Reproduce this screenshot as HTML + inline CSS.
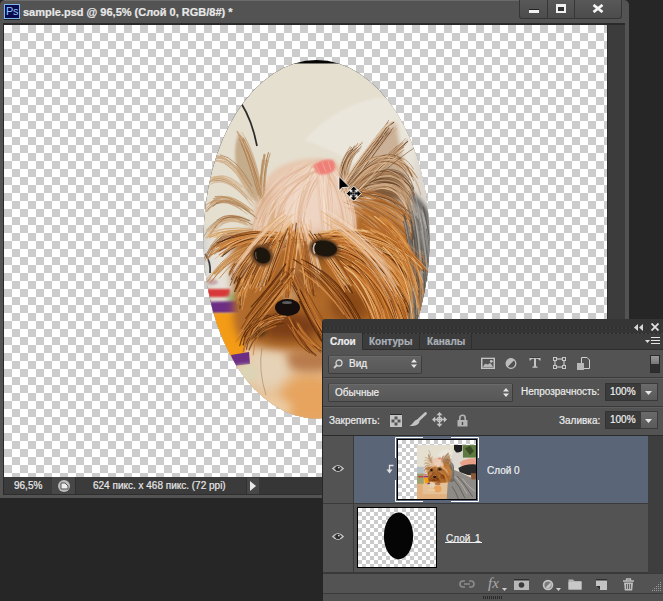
<!DOCTYPE html>
<html><head><meta charset="utf-8">
<style>
*{margin:0;padding:0;box-sizing:border-box}
html,body{width:663px;height:601px;overflow:hidden;background:#262626;font-family:"Liberation Sans",sans-serif}
.a{position:absolute}
.t{position:absolute;white-space:nowrap;font-size:10px;line-height:12px;color:#e4e4e4;-webkit-text-stroke:0.2px currentColor}
#win{left:0;top:0;width:629px;height:498px;background:#535353;border-radius:5px 5px 0 0}
#psi{left:4px;top:4px;width:16px;height:15px;background:#0a0a4c;border:1px solid #7ab8f2;color:#8cc4fa;font-size:11px;line-height:13px;text-align:center;letter-spacing:-0.3px;box-shadow:0 1px 0 #222}
.btn{top:0;height:19px;background:linear-gradient(#585858,#4c4c4c);border:1px solid #363636;border-top:none}
#canvas{left:4px;top:25px;width:603px;height:452px;background-color:#fff;
 background-image:linear-gradient(45deg,#ccc 25%,transparent 25%,transparent 75%,#ccc 75%),linear-gradient(45deg,#ccc 25%,transparent 25%,transparent 75%,#ccc 75%);
 background-size:16px 16px;background-position:0 0,8px 8px}
#vscroll{left:607px;top:25px;width:18px;height:452px;background:#3c3c3c;border-left:1px solid #2c2c2c}
#status{left:4px;top:477px;width:621px;height:18px;background:#3b3b3b;border-bottom:1px solid #2e2e2e}
#panel{left:322px;top:319px;width:341px;height:282px;background:#535353;border-left:1px solid #262626;border-radius:4px 0 0 0}
.sep{position:absolute;left:323px;width:340px;height:1px}
.dd{position:absolute;border-radius:2px;background:linear-gradient(#626262,#575757);border:1px solid #3c3c3c;border-top-color:#4a4a4a;box-shadow:inset 0 1px 0 #6a6a6a}
.inp{position:absolute;background:#3b3b3b;border:1px solid #333}
.ib{position:absolute;background:linear-gradient(#6a6a6a,#5a5a5a);border:1px solid #3a3a3a}
</style></head>
<body>
<!-- document window -->
<div id="win" class="a"></div>
<div class="a" style="left:4px;top:0;width:516px;height:1px;background:#6a6a6a"></div>
<div id="psi" class="a">Ps</div>
<div class="t" style="left:23px;top:6px;font-size:11px;font-weight:bold;color:#e8e8e8">sample.psd @ 96,5% (Слой 0, RGB/8#) *</div>
<div class="a btn" style="left:519px;width:29px;border-radius:0 0 0 3px"></div>
<div class="a btn" style="left:547px;width:28px"></div>
<div class="a btn" style="left:574px;width:48px;border-radius:0 0 3px 0"></div>
<div class="a" style="left:529px;top:9px;width:10px;height:4px;background:#f0f0f0;border-top:1px solid #222"></div>
<div class="a" style="left:556px;top:4px;width:10px;height:9px;border:2px solid #f0f0f0;border-top-width:3px;background:#333"></div>
<svg class="a" style="left:592px;top:4px" width="12" height="9" viewBox="0 0 12 9"><path d="M1.5 1 L10.5 8 M10.5 1 L1.5 8" stroke="#f4f4f4" stroke-width="2.8"/></svg>

<div class="a" style="left:3px;top:23px;width:622px;height:2px;background:#2a2a2a"></div>
<div class="a" style="left:3px;top:23px;width:1px;height:472px;background:#2a2a2a"></div>
<div id="canvas" class="a"></div>
<!-- photo -->
<svg class="a" style="left:0;top:0" width="663" height="601" viewBox="0 0 663 601">
<defs>
<clipPath id="ell"><ellipse cx="316.5" cy="239.3" rx="113" ry="179.2"/></clipPath>
<filter id="b10" x="-50%" y="-50%" width="200%" height="200%"><feGaussianBlur stdDeviation="10"/></filter>
<filter id="b6" x="-50%" y="-50%" width="200%" height="200%"><feGaussianBlur stdDeviation="6"/></filter>
<filter id="b4" x="-50%" y="-50%" width="200%" height="200%"><feGaussianBlur stdDeviation="4"/></filter>
<filter id="b2" x="-50%" y="-50%" width="200%" height="200%"><feGaussianBlur stdDeviation="2"/></filter>
<filter id="b1" x="-50%" y="-50%" width="200%" height="200%"><feGaussianBlur stdDeviation="1"/></filter>
<filter id="b05" x="-50%" y="-50%" width="200%" height="200%"><feGaussianBlur stdDeviation="0.5"/></filter>
<filter id="b03" x="-10%" y="-10%" width="120%" height="120%"><feGaussianBlur stdDeviation="0.35"/></filter>

<g id="dog">
<rect x="151" y="63.5" width="456" height="413.5" fill="#e5dfd0"/>
<path d="M305 140 Q330 110 375 98 Q420 95 440 150 L440 240 L405 228 Q385 175 330 150 Z" fill="#ebe6db" filter="url(#b1)"/>
<path d="M241 103 Q252 120 257 146" stroke="#2a2a2a" stroke-width="1.7" fill="none" filter="url(#b03)"/>
<rect x="195" y="240" width="40" height="50" fill="#e6e2da" filter="url(#b2)"/>
<path d="M205 254 Q211 262 210 273" stroke="#2a2a2a" stroke-width="1.8" fill="none" filter="url(#b05)"/>
<ellipse cx="212" cy="282" rx="6" ry="3" fill="#c8a8b0" filter="url(#b1)"/>
<path d="M151 350 L440 338 L440 477 L151 477 Z" fill="#e2b07c" filter="url(#b4)"/>
<path d="M195 345 L440 338 L440 440 L195 440 Z" fill="#e6c096" filter="url(#b4)"/>
<rect x="151" y="280" width="52" height="80" fill="#9aa070" filter="url(#b6)"/>
<rect x="160" y="300" width="40" height="12" fill="#c84040" filter="url(#b2)"/>
<rect x="151" y="230" width="52" height="50" fill="#b8c0c8" filter="url(#b6)"/>
<ellipse cx="268" cy="368" rx="24" ry="22" fill="#e6d2b6" filter="url(#b6)"/>
<ellipse cx="310" cy="400" rx="30" ry="26" fill="#e6a45e" filter="url(#b6)"/>
<ellipse cx="262" cy="408" rx="30" ry="12" fill="#eccaa0" filter="url(#b4)"/>
<path d="M286 352 Q305 348 330 352 L330 370 Q300 374 290 368 Z" fill="#b07040" filter="url(#b4)" opacity="0.85"/>
<path d="M262 348 Q258 370 266 395" stroke="#7a6040" stroke-width="0.8" fill="none" opacity="0.5"/>
<path d="M203 289 L230 289 L230 297 L203 297 Z" fill="#d83838" filter="url(#b1)"/>
<ellipse cx="234" cy="299" rx="7" ry="6" fill="#9cc088" filter="url(#b2)"/>
<path d="M203 302 L238 301 L240 313 L203 314 Z" fill="#6c2e84" filter="url(#b1)"/>
<path d="M203 313 L240 313 L246 357 L212 358 Z" fill="#f49c12" filter="url(#b1)"/>
<path d="M231 355 L249 352 L250 364 L234 366 Z" fill="#6c2e84" filter="url(#b05)"/>
<path d="M236 366 L256 364 L258 380 L241 382 Z" fill="#dcd4b4" filter="url(#b2)"/>
<path d="M400 240 Q420 120 440 94 Q500 90 520 130 L520 240 Z" fill="#dcd8d0" filter="url(#b6)"/>
<path d="M436 64 L500 64 L500 105 Q480 125 452 118 L436 98 Z" fill="#1e1e1e" filter="url(#b4)"/>
<rect x="505" y="64" width="102" height="96" fill="#5e7a40" filter="url(#b6)"/>
<path d="M520 90 L560 70 L590 110 L560 140 Z" fill="#3a4a28" filter="url(#b6)"/>
<path d="M480 200 Q520 160 607 165 L607 215 Q560 235 500 230 Z" fill="#e8a088" filter="url(#b4)"/>
<path d="M470 240 Q520 205 607 212 L607 295 Q540 300 480 270 Z" fill="#2a2a2a" filter="url(#b4)"/>
<path d="M400 240 Q480 270 540 300 L607 330 L607 477 L380 477 L390 320 Z" fill="#8e8a86" filter="url(#b6)"/>
<path d="M565 280 L607 280 L607 330 L570 325 Z" fill="#8a5a38" filter="url(#b4)"/>
<path d="M430 320 Q480 380 520 470 M460 300 Q520 360 580 460 M420 380 Q450 420 470 477" stroke="#5a5856" stroke-width="6" fill="none" filter="url(#b4)"/>
<path d="M440 300 Q490 350 540 440 M500 320 Q540 380 600 420" stroke="#c8c4c0" stroke-width="5" fill="none" filter="url(#b4)"/>
<path d="M408 190 Q428 200 436 232 L436 340 Q418 350 404 345 Z" fill="#6a6866" filter="url(#b2)"/>
<path d="M410 200 Q424 210 430 232 L428 250 Q416 236 410 220 Z" fill="#bcb8b0" filter="url(#b2)"/>
<path d="M418 250 Q428 270 430 300" stroke="#3a3836" stroke-width="3" fill="none" filter="url(#b1)"/>
<path d="M344 192 C357 162 380 135 396 122 C398 140 404 160 408 185 C410 205 406 215 400 220 L352 215 Z" fill="#b08660" filter="url(#b2)" opacity="0.55"/>
<path d="M355 185 C372 165 392 165 404 185 C404 200 392 208 375 208 L358 204 Z" fill="#6e4a2c" filter="url(#b4)" opacity="0.8"/>
<path d="M239 133 C252 150 260 175 262 205 C250 200 240 185 236 165 C234 150 236 140 239 133 Z" fill="#b8966e" filter="url(#b1)" opacity="0.7"/>
<path d="M232 250 Q240 226 275 228 Q330 220 360 210 Q400 208 414 235 Q424 260 422 290 Q420 328 398 346 Q340 358 292 350 Q252 350 240 336 Q232 302 232 250 Z" fill="#b06a2a" filter="url(#b4)"/>
<path d="M254 242 C254 210 258 185 275 170 C295 158 325 154 340 166 C356 180 358 210 354 242 Q320 250 285 248 Z" fill="#e6c4aa" filter="url(#b2)"/>
<ellipse cx="306" cy="200" rx="36" ry="32" fill="#eed4c2" filter="url(#b6)"/>
<ellipse cx="268" cy="215" rx="10" ry="25" fill="#d8b08a" filter="url(#b6)"/>
<ellipse cx="291" cy="283" rx="9" ry="18" fill="#d6b088" filter="url(#b4)"/>
<ellipse cx="262" cy="256" rx="14" ry="14" fill="#7a4418" filter="url(#b4)"/>
<ellipse cx="326" cy="249" rx="19" ry="13" fill="#7e4a1c" filter="url(#b4)"/>
<ellipse cx="288" cy="326" rx="34" ry="14" fill="#7a3c14" filter="url(#b6)"/>
<ellipse cx="378" cy="285" rx="20" ry="40" fill="#b0641e" filter="url(#b6)"/>
<ellipse cx="350" cy="305" rx="20" ry="18" fill="#8a4a18" filter="url(#b6)"/>
<ellipse cx="250" cy="318" rx="14" ry="22" fill="#b06a2c" filter="url(#b6)"/>
<ellipse cx="300" cy="280" rx="25" ry="12" fill="#9a5a28" filter="url(#b6)"/>
<ellipse cx="258" cy="330" rx="8" ry="7" fill="#3a2a18" filter="url(#b2)"/>
<g stroke-linecap="round" fill="none" filter="url(#b03)">
<path d="M239.3 218.9 Q216.8 211.8 205.5 237.9" stroke="#d8b896" stroke-width="0.82" stroke-opacity="0.85"/>
<path d="M251.9 197.0 Q232.2 156.6 214.9 157.6" stroke="#c8a070" stroke-width="0.58" stroke-opacity="0.85"/>
<path d="M259.5 190.2 Q261.5 169.3 263.8 160.0" stroke="#a8784c" stroke-width="0.94" stroke-opacity="0.85"/>
<path d="M240.5 189.0 Q219.4 171.3 206.0 182.7" stroke="#c8a070" stroke-width="0.65" stroke-opacity="0.85"/>
<path d="M252.4 205.9 Q230.8 178.0 214.6 182.6" stroke="#c9a07a" stroke-width="0.65" stroke-opacity="0.85"/>
<path d="M260.9 195.6 Q260.1 170.4 266.2 158.6" stroke="#e0c4a4" stroke-width="0.92" stroke-opacity="0.85"/>
<path d="M259.6 188.6 Q249.5 150.3 240.7 135.5" stroke="#c9a07a" stroke-width="0.88" stroke-opacity="0.85"/>
<path d="M264.7 190.2 Q266.0 165.6 269.8 154.5" stroke="#9a6a40" stroke-width="0.52" stroke-opacity="0.85"/>
<path d="M257.7 189.6 Q249.3 160.3 241.5 144.1" stroke="#9a6a40" stroke-width="0.59" stroke-opacity="0.85"/>
<path d="M260.5 192.3 Q252.3 155.9 243.6 141.8" stroke="#b8875a" stroke-width="0.62" stroke-opacity="0.85"/>
<path d="M240.5 218.4 Q222.9 212.5 210.8 227.5" stroke="#d8b896" stroke-width="0.57" stroke-opacity="0.85"/>
<path d="M237.3 230.8 Q219.1 232.2 207.6 254.2" stroke="#a8784c" stroke-width="0.73" stroke-opacity="0.85"/>
<path d="M247.2 224.2 Q225.0 214.4 210.9 234.1" stroke="#a8784c" stroke-width="0.56" stroke-opacity="0.85"/>
<path d="M265.1 189.0 Q265.5 166.8 269.0 157.0" stroke="#e0c4a4" stroke-width="0.53" stroke-opacity="0.85"/>
<path d="M263.9 186.7 Q264.4 165.2 268.4 152.6" stroke="#9a6a40" stroke-width="0.98" stroke-opacity="0.85"/>
<path d="M258.7 210.2 Q231.0 174.1 214.1 181.3" stroke="#e0c4a4" stroke-width="0.67" stroke-opacity="0.85"/>
<path d="M243.9 235.9 Q218.7 233.4 205.6 262.6" stroke="#e0c4a4" stroke-width="0.76" stroke-opacity="0.85"/>
<path d="M249.7 220.3 Q222.0 206.4 209.7 235.1" stroke="#c8a070" stroke-width="0.65" stroke-opacity="0.85"/>
<path d="M241.8 220.4 Q222.7 214.8 213.1 229.3" stroke="#a8784c" stroke-width="0.82" stroke-opacity="0.85"/>
<path d="M263.7 198.0 Q251.7 155.3 242.7 137.4" stroke="#c8a070" stroke-width="0.73" stroke-opacity="0.85"/>
<path d="M252.9 211.6 Q224.7 186.3 210.7 204.3" stroke="#c9a07a" stroke-width="0.84" stroke-opacity="0.85"/>
<path d="M241.4 217.4 Q222.6 210.3 211.1 227.0" stroke="#a8784c" stroke-width="0.71" stroke-opacity="0.85"/>
<path d="M262.5 189.3 Q262.7 169.7 265.1 156.6" stroke="#c9a07a" stroke-width="0.68" stroke-opacity="0.85"/>
<path d="M239.2 230.6 Q217.7 229.5 207.1 253.1" stroke="#c8a070" stroke-width="0.99" stroke-opacity="0.85"/>
<path d="M247.2 214.1 Q220.4 191.3 203.4 213.7" stroke="#b89060" stroke-width="0.63" stroke-opacity="0.85"/>
<path d="M257.4 188.9 Q249.4 157.4 242.3 142.9" stroke="#9a6a40" stroke-width="0.52" stroke-opacity="0.85"/>
<path d="M251.8 186.2 Q236.4 157.3 220.4 154.9" stroke="#a8784c" stroke-width="0.86" stroke-opacity="0.85"/>
<path d="M247.6 199.2 Q224.2 172.5 207.2 183.3" stroke="#9a6a40" stroke-width="0.64" stroke-opacity="0.85"/>
<path d="M241.8 231.8 Q221.6 230.7 209.7 250.6" stroke="#9a6a40" stroke-width="0.78" stroke-opacity="0.85"/>
<path d="M245.1 235.3 Q229.2 233.7 216.9 250.3" stroke="#b89060" stroke-width="0.93" stroke-opacity="0.85"/>
<path d="M261.7 181.7 Q262.1 164.8 264.7 154.1" stroke="#c8a070" stroke-width="0.79" stroke-opacity="0.85"/>
<path d="M251.1 236.7 Q228.6 230.5 213.6 251.3" stroke="#b8875a" stroke-width="0.53" stroke-opacity="0.85"/>
<path d="M255.6 200.5 Q230.3 148.7 210.2 156.8" stroke="#b89060" stroke-width="0.52" stroke-opacity="0.85"/>
<path d="M260.1 183.5 Q262.2 167.3 264.8 154.9" stroke="#a8784c" stroke-width="0.81" stroke-opacity="0.85"/>
<path d="M253.5 211.4 Q228.1 189.1 211.6 201.4" stroke="#c9a07a" stroke-width="0.87" stroke-opacity="0.85"/>
<path d="M245.6 222.1 Q220.3 211.1 206.4 230.5" stroke="#9a6a40" stroke-width="0.58" stroke-opacity="0.85"/>
<path d="M237.2 231.8 Q219.1 232.7 208.0 258.0" stroke="#9a6a40" stroke-width="0.76" stroke-opacity="0.85"/>
<path d="M252.9 193.4 Q234.1 159.5 220.0 160.9" stroke="#b8875a" stroke-width="0.55" stroke-opacity="0.85"/>
<path d="M259.2 188.5 Q251.9 153.6 242.5 138.8" stroke="#c8a070" stroke-width="0.53" stroke-opacity="0.85"/>
<path d="M248.6 182.1 Q229.6 154.8 216.3 158.0" stroke="#c8a070" stroke-width="0.68" stroke-opacity="0.85"/>
<path d="M246.0 187.2 Q227.1 157.0 211.9 161.3" stroke="#c8a070" stroke-width="0.98" stroke-opacity="0.85"/>
<path d="M247.2 197.0 Q223.3 169.8 207.0 182.5" stroke="#b8875a" stroke-width="0.75" stroke-opacity="0.85"/>
<path d="M248.5 209.6 Q228.1 193.4 212.5 201.6" stroke="#d8b896" stroke-width="0.58" stroke-opacity="0.85"/>
<path d="M242.3 183.0 Q226.2 156.5 213.4 161.8" stroke="#d8b896" stroke-width="0.52" stroke-opacity="0.85"/>
<path d="M258.8 192.3 Q250.0 163.2 245.5 146.0" stroke="#e0c4a4" stroke-width="0.65" stroke-opacity="0.85"/>
<path d="M249.8 237.8 Q223.8 229.9 208.5 258.5" stroke="#e0c4a4" stroke-width="0.84" stroke-opacity="0.85"/>
<path d="M246.7 182.7 Q227.7 152.2 214.4 159.2" stroke="#c8a070" stroke-width="0.86" stroke-opacity="0.85"/>
<path d="M240.4 189.9 Q219.1 170.1 208.4 179.1" stroke="#e0c4a4" stroke-width="0.97" stroke-opacity="0.85"/>
<path d="M240.9 235.5 Q216.2 232.1 202.6 262.9" stroke="#b8875a" stroke-width="0.52" stroke-opacity="0.85"/>
<path d="M261.4 195.8 Q262.9 174.8 263.9 162.1" stroke="#d8b896" stroke-width="0.54" stroke-opacity="0.85"/>
<path d="M241.5 186.6 Q222.4 171.4 211.6 179.3" stroke="#e0c4a4" stroke-width="0.74" stroke-opacity="0.85"/>
<path d="M252.9 224.6 Q233.6 213.8 220.9 223.8" stroke="#c9a07a" stroke-width="0.57" stroke-opacity="0.85"/>
<path d="M237.8 206.9 Q217.4 193.5 205.6 205.7" stroke="#c8a070" stroke-width="0.98" stroke-opacity="0.85"/>
<path d="M238.5 230.2 Q221.1 229.5 210.3 246.3" stroke="#c8a070" stroke-width="0.88" stroke-opacity="0.85"/>
<path d="M240.5 204.8 Q221.1 193.1 207.9 209.1" stroke="#b8875a" stroke-width="0.86" stroke-opacity="0.85"/>
<path d="M237.9 230.6 Q219.0 230.9 206.8 254.7" stroke="#e0c4a4" stroke-width="0.64" stroke-opacity="0.85"/>
<path d="M262.1 200.6 Q255.7 169.4 246.7 149.3" stroke="#b8875a" stroke-width="0.62" stroke-opacity="0.85"/>
<path d="M246.6 209.8 Q226.2 191.4 213.5 198.7" stroke="#a8784c" stroke-width="0.82" stroke-opacity="0.85"/>
<path d="M245.6 185.1 Q229.9 161.9 217.4 160.9" stroke="#b89060" stroke-width="0.52" stroke-opacity="0.85"/>
<path d="M238.3 233.4 Q219.9 236.7 209.8 257.7" stroke="#b8875a" stroke-width="0.52" stroke-opacity="0.85"/>
<path d="M245.4 223.4 Q221.0 213.3 208.0 231.6" stroke="#d8b896" stroke-width="0.68" stroke-opacity="0.85"/>
<path d="M260.9 185.4 Q262.3 164.4 265.2 154.6" stroke="#b89060" stroke-width="0.69" stroke-opacity="0.85"/>
<path d="M254.9 177.6 Q245.0 145.6 236.9 131.8" stroke="#c9a07a" stroke-width="0.90" stroke-opacity="0.85"/>
<path d="M245.3 205.5 Q223.5 187.6 209.6 204.2" stroke="#c8a070" stroke-width="0.75" stroke-opacity="0.85"/>
<path d="M236.8 217.9 Q218.6 215.4 207.3 238.2" stroke="#c8a070" stroke-width="0.68" stroke-opacity="0.85"/>
<path d="M247.0 225.2 Q222.7 213.8 210.8 229.1" stroke="#c8a070" stroke-width="0.65" stroke-opacity="0.85"/>
<path d="M260.1 199.2 Q250.0 156.9 240.9 138.3" stroke="#d8b896" stroke-width="0.74" stroke-opacity="0.85"/>
<path d="M257.4 172.0 Q249.4 144.0 242.1 132.2" stroke="#d8b896" stroke-width="0.96" stroke-opacity="0.85"/>
<path d="M236.9 217.9 Q216.2 214.4 203.7 236.6" stroke="#9a6a40" stroke-width="0.65" stroke-opacity="0.85"/>
<path d="M242.1 187.1 Q224.2 170.0 212.4 179.2" stroke="#c8a070" stroke-width="0.71" stroke-opacity="0.85"/>
<path d="M251.0 214.1 Q225.6 194.0 211.5 202.9" stroke="#a8784c" stroke-width="0.56" stroke-opacity="0.85"/>
<path d="M245.8 221.9 Q222.9 213.3 210.9 228.2" stroke="#b89060" stroke-width="0.57" stroke-opacity="0.85"/>
<path d="M240.6 217.8 Q221.7 212.4 209.9 236.5" stroke="#b89060" stroke-width="0.92" stroke-opacity="0.85"/>
<path d="M259.5 195.2 Q252.0 161.8 245.0 145.7" stroke="#a8784c" stroke-width="0.86" stroke-opacity="0.85"/>
<path d="M238.6 219.3 Q220.0 215.1 210.0 234.0" stroke="#b89060" stroke-width="0.95" stroke-opacity="0.85"/>
<path d="M237.8 231.6 Q219.2 235.2 211.0 254.9" stroke="#b8875a" stroke-width="0.75" stroke-opacity="0.85"/>
<path d="M246.4 190.3 Q224.2 167.3 210.5 180.2" stroke="#d8b896" stroke-width="0.96" stroke-opacity="0.85"/>
<path d="M241.4 209.9 Q216.8 192.1 204.3 211.5" stroke="#c9a07a" stroke-width="0.76" stroke-opacity="0.85"/>
<path d="M258.4 195.0 Q247.4 157.2 239.5 139.0" stroke="#a8784c" stroke-width="0.77" stroke-opacity="0.85"/>
<path d="M249.2 208.6 Q227.9 193.6 214.8 201.0" stroke="#b8875a" stroke-width="0.63" stroke-opacity="0.85"/>
<path d="M257.2 218.7 Q223.8 189.0 206.6 211.7" stroke="#9a6a40" stroke-width="0.80" stroke-opacity="0.85"/>
<path d="M263.1 197.0 Q264.0 172.2 266.9 159.2" stroke="#b8875a" stroke-width="0.61" stroke-opacity="0.85"/>
<path d="M241.0 204.2 Q221.1 191.1 208.9 209.1" stroke="#e0c4a4" stroke-width="0.57" stroke-opacity="0.85"/>
<path d="M260.1 198.5 Q259.9 173.5 262.5 159.7" stroke="#b8875a" stroke-width="0.83" stroke-opacity="0.85"/>
<path d="M263.1 199.3 Q251.4 156.7 242.2 139.5" stroke="#b89060" stroke-width="0.98" stroke-opacity="0.85"/>
<path d="M252.2 224.9 Q227.8 208.9 214.0 225.0" stroke="#a8784c" stroke-width="0.88" stroke-opacity="0.85"/>
<path d="M251.3 200.9 Q224.5 166.5 205.6 180.9" stroke="#c8a070" stroke-width="0.69" stroke-opacity="0.85"/>
<path d="M251.9 199.5 Q227.4 168.1 208.3 182.5" stroke="#c8a070" stroke-width="0.57" stroke-opacity="0.85"/>
<path d="M256.7 215.0 Q232.7 193.3 217.5 196.8" stroke="#d8b896" stroke-width="0.52" stroke-opacity="0.85"/>
<path d="M247.4 210.2 Q224.3 192.8 213.2 206.3" stroke="#9a6a40" stroke-width="0.86" stroke-opacity="0.85"/>
<path d="M250.7 225.6 Q231.0 213.9 216.5 229.3" stroke="#c8a070" stroke-width="0.55" stroke-opacity="0.85"/>
<path d="M237.0 219.3 Q218.4 214.9 208.2 231.3" stroke="#b89060" stroke-width="0.52" stroke-opacity="0.85"/>
<path d="M247.0 233.3 Q218.5 225.1 204.8 260.9" stroke="#9a6a40" stroke-width="0.63" stroke-opacity="0.85"/>
<path d="M258.3 181.6 Q249.9 154.2 243.1 139.8" stroke="#a8784c" stroke-width="0.80" stroke-opacity="0.85"/>
<path d="M240.4 222.0 Q220.5 216.0 210.2 229.4" stroke="#b8875a" stroke-width="0.51" stroke-opacity="0.85"/>
<path d="M241.8 209.2 Q218.3 194.1 204.5 206.2" stroke="#c9a07a" stroke-width="0.52" stroke-opacity="0.85"/>
<path d="M236.7 233.9 Q217.2 236.1 208.0 259.1" stroke="#9a6a40" stroke-width="0.63" stroke-opacity="0.85"/>
<path d="M250.5 204.2 Q225.2 172.9 209.4 185.2" stroke="#e0c4a4" stroke-width="0.97" stroke-opacity="0.85"/>
<path d="M242.8 175.9 Q226.5 152.2 212.9 156.3" stroke="#b89060" stroke-width="0.58" stroke-opacity="0.85"/>
<path d="M236.5 219.1 Q218.0 215.6 208.3 234.7" stroke="#d8b896" stroke-width="0.83" stroke-opacity="0.85"/>
<path d="M250.1 210.8 Q223.6 188.9 210.6 203.5" stroke="#b89060" stroke-width="0.81" stroke-opacity="0.85"/>
<path d="M237.7 234.8 Q219.7 235.7 208.8 253.3" stroke="#a8784c" stroke-width="0.52" stroke-opacity="0.85"/>
<path d="M239.4 220.3 Q219.8 214.1 207.5 231.1" stroke="#e0c4a4" stroke-width="0.71" stroke-opacity="0.85"/>
<path d="M261.5 194.0 Q260.3 174.7 265.2 160.4" stroke="#b89060" stroke-width="0.71" stroke-opacity="0.85"/>
<path d="M249.2 191.5 Q230.9 157.4 214.5 160.2" stroke="#c8a070" stroke-width="0.55" stroke-opacity="0.85"/>
<path d="M260.5 196.8 Q261.1 169.1 263.9 154.3" stroke="#b89060" stroke-width="0.99" stroke-opacity="0.85"/>
<path d="M234.7 205.9 Q217.4 195.2 204.6 209.3" stroke="#c9a07a" stroke-width="0.57" stroke-opacity="0.85"/>
<path d="M261.9 191.9 Q253.7 156.2 243.5 138.2" stroke="#9a6a40" stroke-width="0.73" stroke-opacity="0.85"/>
<path d="M254.8 216.1 Q233.0 196.1 216.5 202.6" stroke="#a8784c" stroke-width="0.62" stroke-opacity="0.85"/>
<path d="M238.9 232.6 Q216.4 232.2 203.3 259.7" stroke="#9a6a40" stroke-width="0.81" stroke-opacity="0.85"/>
<path d="M247.1 235.7 Q220.8 228.7 206.6 257.3" stroke="#9a6a40" stroke-width="0.80" stroke-opacity="0.85"/>
<path d="M261.3 185.7 Q254.2 151.9 245.3 137.9" stroke="#b8875a" stroke-width="0.50" stroke-opacity="0.85"/>
<path d="M246.8 187.9 Q230.8 159.5 215.1 161.4" stroke="#e0c4a4" stroke-width="0.86" stroke-opacity="0.85"/>
<path d="M244.5 217.5 Q221.7 209.0 209.1 231.5" stroke="#d8b896" stroke-width="0.77" stroke-opacity="0.85"/>
<path d="M255.4 216.2 Q233.6 196.9 218.8 200.6" stroke="#c8a070" stroke-width="0.82" stroke-opacity="0.85"/>
<path d="M255.7 201.0 Q237.0 167.6 223.2 161.9" stroke="#d8b896" stroke-width="0.87" stroke-opacity="0.85"/>
<path d="M243.2 192.4 Q222.4 172.3 207.8 182.5" stroke="#c8a070" stroke-width="0.53" stroke-opacity="0.85"/>
<path d="M258.9 193.1 Q249.2 149.0 237.4 131.2" stroke="#b89060" stroke-width="0.92" stroke-opacity="0.85"/>
<path d="M238.5 221.4 Q220.6 217.0 209.3 236.5" stroke="#e0c4a4" stroke-width="0.60" stroke-opacity="0.85"/>
<path d="M248.8 221.0 Q228.9 210.0 217.0 220.1" stroke="#a8784c" stroke-width="0.89" stroke-opacity="0.85"/>
<path d="M262.8 194.8 Q253.9 159.3 244.4 142.1" stroke="#d8b896" stroke-width="0.85" stroke-opacity="0.85"/>
<path d="M264.0 194.8 Q263.9 173.4 268.1 159.8" stroke="#b89060" stroke-width="0.87" stroke-opacity="0.85"/>
<path d="M246.6 183.7 Q227.1 152.5 213.8 157.3" stroke="#c9a07a" stroke-width="0.85" stroke-opacity="0.85"/>
<path d="M249.4 210.6 Q228.8 193.5 215.2 196.4" stroke="#b89060" stroke-width="0.98" stroke-opacity="0.85"/>
<path d="M264.8 183.1 Q265.5 165.8 270.3 153.1" stroke="#b89060" stroke-width="0.63" stroke-opacity="0.85"/>
<path d="M241.9 222.7 Q219.1 214.8 207.7 237.0" stroke="#d8b896" stroke-width="0.74" stroke-opacity="0.85"/>
<path d="M260.1 182.2 Q252.8 153.3 243.8 138.6" stroke="#c8a070" stroke-width="0.59" stroke-opacity="0.85"/>
<path d="M254.1 203.9 Q227.4 172.4 210.8 183.8" stroke="#c9a07a" stroke-width="0.52" stroke-opacity="0.85"/>
<path d="M250.2 220.9 Q227.0 209.5 214.6 227.7" stroke="#9a6a40" stroke-width="0.92" stroke-opacity="0.85"/>
<path d="M247.0 225.3 Q226.2 216.5 212.6 226.8" stroke="#d8b896" stroke-width="0.68" stroke-opacity="0.85"/>
<path d="M254.7 234.9 Q231.5 235.2 212.8 248.4" stroke="#d8a060" stroke-width="1.04" stroke-opacity="0.8"/>
<path d="M257.0 248.7 Q232.6 254.4 216.0 273.6" stroke="#d8a060" stroke-width="0.91" stroke-opacity="0.8"/>
<path d="M272.0 242.0 Q242.9 244.4 225.6 264.5" stroke="#c88a48" stroke-width="0.69" stroke-opacity="0.8"/>
<path d="M254.7 244.8 Q229.5 248.1 213.1 273.1" stroke="#b87838" stroke-width="0.74" stroke-opacity="0.8"/>
<path d="M259.2 235.4 Q229.2 228.6 208.0 234.8" stroke="#e0b078" stroke-width="0.91" stroke-opacity="0.8"/>
<path d="M264.9 238.6 Q232.5 236.4 209.7 253.4" stroke="#c88a48" stroke-width="0.80" stroke-opacity="0.8"/>
<path d="M257.7 244.2 Q232.5 249.8 214.8 275.3" stroke="#e0b078" stroke-width="0.76" stroke-opacity="0.8"/>
<path d="M261.6 237.7 Q234.2 234.6 215.2 252.5" stroke="#d8a060" stroke-width="0.95" stroke-opacity="0.8"/>
<path d="M266.8 233.4 Q235.0 223.0 214.2 232.1" stroke="#c88a48" stroke-width="0.62" stroke-opacity="0.8"/>
<path d="M261.7 245.1 Q229.9 247.3 206.7 279.4" stroke="#c88a48" stroke-width="0.62" stroke-opacity="0.8"/>
<path d="M260.9 235.0 Q239.0 235.0 219.3 248.6" stroke="#b87838" stroke-width="0.99" stroke-opacity="0.8"/>
<path d="M262.4 247.7 Q235.1 252.6 219.5 273.0" stroke="#e0b078" stroke-width="1.02" stroke-opacity="0.8"/>
<path d="M255.8 240.0 Q230.5 241.2 210.2 255.2" stroke="#b87838" stroke-width="0.60" stroke-opacity="0.8"/>
<path d="M266.1 235.6 Q239.7 231.6 216.7 246.4" stroke="#b87838" stroke-width="0.86" stroke-opacity="0.8"/>
<path d="M250.1 248.9 Q225.1 254.6 207.9 281.3" stroke="#d8a060" stroke-width="1.06" stroke-opacity="0.8"/>
<path d="M261.8 234.3 Q231.4 224.0 210.2 232.0" stroke="#d8a060" stroke-width="0.66" stroke-opacity="0.8"/>
<path d="M255.7 236.9 Q232.3 230.7 213.9 237.4" stroke="#e0b078" stroke-width="1.00" stroke-opacity="0.8"/>
<path d="M257.0 237.5 Q229.9 231.2 209.1 236.8" stroke="#d8a060" stroke-width="0.93" stroke-opacity="0.8"/>
<path d="M250.7 250.5 Q226.7 256.1 211.8 281.2" stroke="#c88a48" stroke-width="0.91" stroke-opacity="0.8"/>
<path d="M265.5 235.7 Q241.6 233.3 222.0 245.9" stroke="#b87838" stroke-width="0.76" stroke-opacity="0.8"/>
<path d="M270.6 235.2 Q244.9 231.1 220.5 243.6" stroke="#e0b078" stroke-width="1.09" stroke-opacity="0.8"/>
<path d="M260.8 247.8 Q235.5 254.0 217.2 273.9" stroke="#b87838" stroke-width="0.77" stroke-opacity="0.8"/>
<path d="M247.7 232.7 Q221.8 227.5 206.3 237.6" stroke="#d8a060" stroke-width="0.88" stroke-opacity="0.8"/>
<path d="M248.0 230.9 Q226.0 228.8 208.1 236.0" stroke="#e0b078" stroke-width="1.07" stroke-opacity="0.8"/>
<path d="M265.7 243.2 Q233.9 244.7 213.9 273.2" stroke="#e0b078" stroke-width="0.87" stroke-opacity="0.8"/>
<path d="M266.4 235.6 Q238.2 235.1 215.9 251.7" stroke="#c88a48" stroke-width="1.02" stroke-opacity="0.8"/>
<path d="M256.9 250.8 Q235.4 256.8 219.3 278.3" stroke="#b87838" stroke-width="0.96" stroke-opacity="0.8"/>
<path d="M259.6 238.1 Q230.8 239.0 210.5 253.6" stroke="#c88a48" stroke-width="0.70" stroke-opacity="0.8"/>
<path d="M264.7 234.1 Q232.3 225.7 211.7 236.4" stroke="#e0b078" stroke-width="0.72" stroke-opacity="0.8"/>
<path d="M268.1 243.9 Q242.0 243.8 226.6 261.7" stroke="#b87838" stroke-width="0.98" stroke-opacity="0.8"/>
<path d="M261.2 245.8 Q233.3 246.8 214.6 273.8" stroke="#c88a48" stroke-width="0.82" stroke-opacity="0.8"/>
<path d="M267.8 241.8 Q231.4 239.1 207.0 258.2" stroke="#b87838" stroke-width="1.02" stroke-opacity="0.8"/>
<path d="M252.0 235.1 Q230.3 231.0 216.5 238.1" stroke="#d8a060" stroke-width="0.78" stroke-opacity="0.8"/>
<path d="M261.2 233.3 Q228.0 224.9 209.4 237.9" stroke="#c88a48" stroke-width="0.75" stroke-opacity="0.8"/>
<path d="M270.5 238.9 Q245.2 234.6 221.2 246.1" stroke="#e0b078" stroke-width="0.86" stroke-opacity="0.8"/>
<path d="M267.1 246.7 Q234.8 249.6 214.5 273.9" stroke="#b87838" stroke-width="1.05" stroke-opacity="0.8"/>
<path d="M257.0 248.8 Q233.3 254.2 219.3 268.9" stroke="#e0b078" stroke-width="0.62" stroke-opacity="0.8"/>
<path d="M272.3 246.4 Q244.9 247.9 222.8 268.1" stroke="#c88a48" stroke-width="0.99" stroke-opacity="0.8"/>
<path d="M248.2 247.6 Q223.9 256.2 206.6 282.4" stroke="#b87838" stroke-width="0.84" stroke-opacity="0.8"/>
<path d="M261.2 249.4 Q230.4 255.0 210.3 282.5" stroke="#b87838" stroke-width="0.93" stroke-opacity="0.8"/>
<path d="M351.3 195.4 C368.9 173.6 387.9 166.8 403.4 177.7" stroke="#9a6a40" stroke-width="0.75" stroke-opacity="0.85"/>
<path d="M355.6 200.8 C383.2 189.1 405.7 196.7 408.4 223.8" stroke="#c8a078" stroke-width="0.87" stroke-opacity="0.85"/>
<path d="M351.4 194.9 C385.6 171.3 411.7 181.2 412.3 220.3" stroke="#a8784c" stroke-width="0.75" stroke-opacity="0.85"/>
<path d="M350.7 192.5 C371.1 169.8 398.9 165.1 408.7 180.5" stroke="#6a4426" stroke-width="0.72" stroke-opacity="0.85"/>
<path d="M344.7 191.2 C367.8 167.8 388.9 160.6 403.1 184.2" stroke="#9a6a40" stroke-width="1.06" stroke-opacity="0.85"/>
<path d="M347.2 182.2 C344.1 160.7 354.8 148.7 362.4 143.0" stroke="#9a6a40" stroke-width="0.96" stroke-opacity="0.85"/>
<path d="M348.2 201.4 C368.6 194.9 390.4 198.7 396.3 215.0" stroke="#a8784c" stroke-width="0.91" stroke-opacity="0.85"/>
<path d="M348.5 197.6 C365.0 178.0 383.2 164.8 397.7 154.1" stroke="#6a4426" stroke-width="0.69" stroke-opacity="0.85"/>
<path d="M346.5 190.3 C367.4 166.6 392.9 160.1 406.1 180.9" stroke="#c9a07a" stroke-width="0.85" stroke-opacity="0.85"/>
<path d="M343.3 187.2 C339.9 171.6 346.8 160.1 350.6 154.2" stroke="#5a3a20" stroke-width="0.85" stroke-opacity="0.85"/>
<path d="M346.8 191.9 C364.0 164.6 386.4 140.2 396.5 128.4" stroke="#c9a07a" stroke-width="0.71" stroke-opacity="0.85"/>
<path d="M347.0 190.8 C362.5 160.8 387.6 149.7 405.5 164.4" stroke="#c9a07a" stroke-width="0.66" stroke-opacity="0.85"/>
<path d="M340.8 188.2 C353.7 169.9 368.2 151.1 379.6 134.6" stroke="#c9a07a" stroke-width="0.64" stroke-opacity="0.85"/>
<path d="M343.9 184.9 C342.4 164.2 346.8 155.3 357.1 144.6" stroke="#b8875a" stroke-width="0.73" stroke-opacity="0.85"/>
<path d="M343.3 191.9 C358.1 168.4 376.5 142.2 391.4 129.6" stroke="#5a3a20" stroke-width="1.08" stroke-opacity="0.85"/>
<path d="M347.1 184.2 C363.8 163.5 378.0 139.0 392.6 125.6" stroke="#e0c4a4" stroke-width="0.70" stroke-opacity="0.85"/>
<path d="M349.3 192.6 C364.6 171.8 382.4 159.7 397.2 146.1" stroke="#6a4426" stroke-width="0.76" stroke-opacity="0.85"/>
<path d="M350.8 197.9 C374.4 188.7 393.2 196.3 401.6 207.7" stroke="#7a5030" stroke-width="1.04" stroke-opacity="0.85"/>
<path d="M343.1 189.0 C338.1 174.3 343.0 161.3 350.4 156.1" stroke="#5a3a20" stroke-width="0.72" stroke-opacity="0.85"/>
<path d="M348.0 193.9 C369.0 169.5 395.4 166.3 406.8 190.6" stroke="#c9a07a" stroke-width="0.88" stroke-opacity="0.85"/>
<path d="M342.6 189.9 C338.7 172.6 350.9 156.2 355.4 149.9" stroke="#b8875a" stroke-width="0.92" stroke-opacity="0.85"/>
<path d="M348.8 194.3 C369.7 178.5 388.2 181.0 400.9 190.7" stroke="#d8b896" stroke-width="1.09" stroke-opacity="0.85"/>
<path d="M349.1 187.0 C371.5 150.8 401.7 147.0 413.5 169.1" stroke="#b8875a" stroke-width="0.83" stroke-opacity="0.85"/>
<path d="M353.5 195.2 C381.9 176.1 400.8 180.4 408.7 196.5" stroke="#5a3a20" stroke-width="1.00" stroke-opacity="0.85"/>
<path d="M351.6 193.5 C369.0 172.0 389.3 155.0 403.6 146.9" stroke="#9a6a40" stroke-width="1.10" stroke-opacity="0.85"/>
<path d="M349.1 196.9 C368.5 189.3 389.4 195.0 398.7 211.7" stroke="#d8b896" stroke-width="0.90" stroke-opacity="0.85"/>
<path d="M351.8 203.1 C374.0 193.9 395.4 199.0 405.1 217.7" stroke="#7a5030" stroke-width="1.07" stroke-opacity="0.85"/>
<path d="M342.1 187.3 C356.1 163.6 371.7 146.5 386.8 131.0" stroke="#5a3a20" stroke-width="1.02" stroke-opacity="0.85"/>
<path d="M348.0 190.3 C362.1 170.8 379.6 145.7 390.8 131.8" stroke="#6a4426" stroke-width="1.00" stroke-opacity="0.85"/>
<path d="M350.0 194.0 C372.9 152.4 409.7 151.0 420.8 194.7" stroke="#c9a07a" stroke-width="1.08" stroke-opacity="0.85"/>
<path d="M349.0 197.1 C372.4 186.3 397.6 193.2 405.3 219.4" stroke="#9a6a40" stroke-width="0.94" stroke-opacity="0.85"/>
<path d="M352.6 197.1 C367.6 183.0 384.7 164.5 399.7 158.1" stroke="#a8784c" stroke-width="0.63" stroke-opacity="0.85"/>
<path d="M342.9 188.7 C338.4 170.0 346.0 160.7 353.2 149.8" stroke="#e0c4a4" stroke-width="0.55" stroke-opacity="0.85"/>
<path d="M345.3 193.1 C364.9 173.9 386.6 166.4 397.3 176.9" stroke="#c8a078" stroke-width="0.68" stroke-opacity="0.85"/>
<path d="M344.3 188.0 C356.2 170.9 371.9 148.1 381.4 135.5" stroke="#c8a078" stroke-width="0.51" stroke-opacity="0.85"/>
<path d="M345.8 189.3 C370.0 154.5 397.5 146.9 412.0 174.1" stroke="#d8b896" stroke-width="0.61" stroke-opacity="0.85"/>
<path d="M347.6 187.4 C368.4 157.9 396.2 146.1 408.7 168.4" stroke="#a8784c" stroke-width="0.94" stroke-opacity="0.85"/>
<path d="M348.7 190.0 C372.7 167.6 396.5 162.0 409.6 180.0" stroke="#5a3a20" stroke-width="0.51" stroke-opacity="0.85"/>
<path d="M349.5 197.6 C363.8 183.2 385.0 166.7 392.3 156.8" stroke="#d8b896" stroke-width="0.97" stroke-opacity="0.85"/>
<path d="M353.4 193.5 C374.4 170.6 397.5 154.0 407.7 140.7" stroke="#a8784c" stroke-width="0.55" stroke-opacity="0.85"/>
<path d="M345.5 187.4 C358.1 166.9 378.4 143.5 389.0 127.9" stroke="#7a5030" stroke-width="1.01" stroke-opacity="0.85"/>
<path d="M346.6 193.8 C377.8 158.2 410.5 166.4 413.5 214.7" stroke="#e0c0a0" stroke-width="0.54" stroke-opacity="0.85"/>
<path d="M350.4 193.8 C366.6 177.9 383.9 163.2 393.2 152.8" stroke="#d8b896" stroke-width="0.61" stroke-opacity="0.85"/>
<path d="M350.6 202.8 C376.0 193.3 399.6 204.7 407.0 229.6" stroke="#9a6a40" stroke-width="0.58" stroke-opacity="0.85"/>
<path d="M351.7 195.6 C373.9 172.2 395.4 168.0 408.6 185.6" stroke="#7a5030" stroke-width="0.85" stroke-opacity="0.85"/>
<path d="M350.4 197.4 C368.8 192.2 392.5 193.0 398.1 209.7" stroke="#d8b896" stroke-width="0.65" stroke-opacity="0.85"/>
<path d="M351.6 197.9 C376.8 171.3 404.6 169.6 414.4 194.9" stroke="#5a3a20" stroke-width="1.08" stroke-opacity="0.85"/>
<path d="M346.7 198.6 C365.6 178.5 386.8 161.2 397.9 149.3" stroke="#e0c4a4" stroke-width="1.01" stroke-opacity="0.85"/>
<path d="M342.9 189.7 C339.3 175.7 343.7 168.2 347.2 156.5" stroke="#b8875a" stroke-width="0.53" stroke-opacity="0.85"/>
<path d="M345.8 185.6 C342.4 166.8 350.2 151.4 360.8 148.6" stroke="#c9a07a" stroke-width="0.60" stroke-opacity="0.85"/>
<path d="M352.3 198.1 C385.2 175.4 408.9 181.7 411.0 215.3" stroke="#c8a078" stroke-width="0.68" stroke-opacity="0.85"/>
<path d="M353.5 201.5 C377.4 185.4 392.2 183.6 406.4 195.5" stroke="#e0c0a0" stroke-width="0.62" stroke-opacity="0.85"/>
<path d="M351.6 195.9 C382.2 176.7 405.9 180.8 412.5 206.0" stroke="#e0c0a0" stroke-width="0.99" stroke-opacity="0.85"/>
<path d="M350.0 192.2 C373.3 158.6 399.4 148.6 417.3 177.9" stroke="#b8875a" stroke-width="1.03" stroke-opacity="0.85"/>
<path d="M349.9 191.0 C370.4 159.9 398.4 149.4 414.7 174.3" stroke="#b8875a" stroke-width="0.94" stroke-opacity="0.85"/>
<path d="M347.9 193.5 C373.8 166.7 397.1 147.5 405.6 138.8" stroke="#6a4426" stroke-width="0.51" stroke-opacity="0.85"/>
<path d="M343.0 187.3 C366.2 152.7 394.1 143.1 409.0 175.9" stroke="#c8a078" stroke-width="0.84" stroke-opacity="0.85"/>
<path d="M343.7 186.0 C361.1 159.2 380.0 136.0 390.5 123.8" stroke="#a8784c" stroke-width="0.88" stroke-opacity="0.85"/>
<path d="M347.7 197.5 C379.4 174.7 402.9 183.6 405.9 213.4" stroke="#9a6a40" stroke-width="0.84" stroke-opacity="0.85"/>
<path d="M340.8 186.3 C337.4 166.3 345.8 150.8 352.5 149.4" stroke="#6a4426" stroke-width="1.05" stroke-opacity="0.85"/>
<path d="M342.6 189.5 C358.8 160.7 381.4 148.1 401.5 161.0" stroke="#9a6a40" stroke-width="0.75" stroke-opacity="0.85"/>
<path d="M340.0 189.0 C354.0 169.2 366.6 145.9 383.4 133.5" stroke="#7a5030" stroke-width="0.71" stroke-opacity="0.85"/>
<path d="M342.5 182.9 C341.8 167.4 345.7 159.0 351.4 147.4" stroke="#6a4426" stroke-width="0.65" stroke-opacity="0.85"/>
<path d="M349.8 198.9 C385.6 176.2 411.1 185.8 410.1 225.7" stroke="#9a6a40" stroke-width="1.07" stroke-opacity="0.85"/>
<path d="M351.1 199.9 C367.5 196.3 384.4 194.4 394.6 205.1" stroke="#c8a078" stroke-width="1.09" stroke-opacity="0.85"/>
<path d="M352.6 198.2 C376.7 190.6 398.4 196.8 404.8 217.7" stroke="#6a4426" stroke-width="0.72" stroke-opacity="0.85"/>
<path d="M341.0 187.7 C359.1 164.2 379.4 137.9 388.6 120.3" stroke="#a8784c" stroke-width="0.76" stroke-opacity="0.85"/>
<path d="M347.5 194.5 C366.2 175.9 378.8 163.6 393.6 150.3" stroke="#e0c0a0" stroke-width="0.52" stroke-opacity="0.85"/>
<path d="M350.4 196.1 C375.2 174.2 395.4 150.8 407.6 141.6" stroke="#5a3a20" stroke-width="1.06" stroke-opacity="0.85"/>
<path d="M346.0 190.7 C363.1 164.7 383.4 139.8 393.2 127.9" stroke="#6a4426" stroke-width="0.60" stroke-opacity="0.85"/>
<path d="M346.2 191.3 C365.9 159.5 399.7 149.8 411.8 177.2" stroke="#c9a07a" stroke-width="0.52" stroke-opacity="0.85"/>
<path d="M341.3 190.2 C352.9 169.2 372.7 144.6 382.7 130.2" stroke="#d8b896" stroke-width="0.73" stroke-opacity="0.85"/>
<path d="M344.4 189.5 C340.2 170.2 350.5 156.4 361.3 146.3" stroke="#5a3a20" stroke-width="0.76" stroke-opacity="0.85"/>
<path d="M344.9 182.5 C339.6 166.7 348.6 153.9 354.7 145.9" stroke="#5a3a20" stroke-width="0.91" stroke-opacity="0.85"/>
<path d="M344.7 185.9 C338.9 166.3 354.4 150.3 357.6 143.5" stroke="#b8875a" stroke-width="0.87" stroke-opacity="0.85"/>
<path d="M343.3 190.6 C357.5 163.3 380.0 135.2 391.2 122.6" stroke="#e0c4a4" stroke-width="0.93" stroke-opacity="0.85"/>
<path d="M348.2 197.9 C365.5 178.3 387.3 170.5 401.0 184.5" stroke="#a8784c" stroke-width="0.84" stroke-opacity="0.85"/>
<path d="M347.5 185.4 C358.9 167.1 377.1 144.8 390.0 128.4" stroke="#c9a07a" stroke-width="0.78" stroke-opacity="0.85"/>
<path d="M349.8 186.3 C376.6 146.1 407.1 143.9 416.6 185.9" stroke="#e0c4a4" stroke-width="0.71" stroke-opacity="0.85"/>
<path d="M352.1 199.3 C369.1 193.2 389.6 195.6 400.4 204.7" stroke="#c9a07a" stroke-width="0.96" stroke-opacity="0.85"/>
<path d="M344.3 192.9 C361.0 170.3 387.3 163.3 399.8 178.7" stroke="#6a4426" stroke-width="0.64" stroke-opacity="0.85"/>
<path d="M342.4 192.1 C362.8 165.3 384.1 153.7 399.7 169.0" stroke="#b8875a" stroke-width="0.82" stroke-opacity="0.85"/>
<path d="M349.7 192.9 C370.1 161.0 403.0 152.1 413.6 180.8" stroke="#a8784c" stroke-width="0.79" stroke-opacity="0.85"/>
<path d="M348.1 200.4 C374.3 183.2 397.2 185.7 402.8 200.8" stroke="#d8b896" stroke-width="0.83" stroke-opacity="0.85"/>
<path d="M340.6 184.4 C335.8 165.1 346.9 153.0 350.3 146.6" stroke="#c9a07a" stroke-width="1.04" stroke-opacity="0.85"/>
<path d="M347.6 186.4 C347.5 172.4 350.9 163.3 354.6 151.9" stroke="#c8a078" stroke-width="0.67" stroke-opacity="0.85"/>
<path d="M345.6 187.4 C343.1 167.0 353.3 153.3 361.8 148.1" stroke="#e0c0a0" stroke-width="0.71" stroke-opacity="0.85"/>
<path d="M348.5 196.2 C375.8 178.3 399.5 179.1 405.4 203.4" stroke="#e0c0a0" stroke-width="0.66" stroke-opacity="0.85"/>
<path d="M346.4 190.8 C362.9 166.7 378.8 145.4 390.9 129.8" stroke="#e0c0a0" stroke-width="0.95" stroke-opacity="0.85"/>
<path d="M348.5 196.4 C376.7 166.1 406.9 169.3 416.8 212.7" stroke="#6a4426" stroke-width="0.76" stroke-opacity="0.85"/>
<path d="M348.6 187.8 C367.5 163.0 386.6 150.1 403.5 159.6" stroke="#b8875a" stroke-width="0.67" stroke-opacity="0.85"/>
<path d="M354.7 201.3 C372.8 193.7 386.6 194.4 399.2 205.5" stroke="#9a6a40" stroke-width="0.65" stroke-opacity="0.85"/>
<path d="M346.3 196.1 C366.8 175.9 381.8 161.6 393.0 154.5" stroke="#e0c4a4" stroke-width="0.69" stroke-opacity="0.85"/>
<path d="M349.0 193.6 C369.2 158.8 399.9 151.5 417.6 182.5" stroke="#e0c0a0" stroke-width="0.60" stroke-opacity="0.85"/>
<path d="M347.2 196.0 C373.3 167.4 399.3 167.7 409.0 194.6" stroke="#d8b896" stroke-width="0.78" stroke-opacity="0.85"/>
<path d="M354.9 198.5 C377.4 191.9 402.4 198.0 407.0 220.3" stroke="#9a6a40" stroke-width="1.09" stroke-opacity="0.85"/>
<path d="M349.1 200.2 C378.3 178.4 406.5 184.4 407.6 218.6" stroke="#c9a07a" stroke-width="0.77" stroke-opacity="0.85"/>
<path d="M353.1 196.6 C368.7 180.0 385.3 164.1 399.0 156.1" stroke="#c8a078" stroke-width="1.10" stroke-opacity="0.85"/>
<path d="M349.4 196.7 C372.6 186.8 396.6 195.4 403.9 213.1" stroke="#c8a078" stroke-width="0.95" stroke-opacity="0.85"/>
<path d="M355.5 202.2 C383.2 192.8 406.3 200.7 411.1 232.0" stroke="#d8b896" stroke-width="1.00" stroke-opacity="0.85"/>
<path d="M349.8 194.2 C375.6 165.5 403.4 164.9 417.2 196.4" stroke="#b8875a" stroke-width="0.58" stroke-opacity="0.85"/>
<path d="M347.2 197.5 C369.6 176.0 386.8 169.8 403.8 181.3" stroke="#e0c4a4" stroke-width="0.91" stroke-opacity="0.85"/>
<path d="M350.5 200.9 C382.8 177.0 408.4 188.9 413.2 221.1" stroke="#c9a07a" stroke-width="1.04" stroke-opacity="0.85"/>
<path d="M346.4 201.0 C369.9 184.1 389.1 185.6 398.0 199.0" stroke="#9a6a40" stroke-width="0.59" stroke-opacity="0.85"/>
<path d="M347.3 192.5 C366.8 162.2 392.5 153.8 412.0 174.2" stroke="#c9a07a" stroke-width="1.03" stroke-opacity="0.85"/>
<path d="M343.8 191.7 C358.8 168.2 377.3 147.1 388.1 133.4" stroke="#6a4426" stroke-width="0.52" stroke-opacity="0.85"/>
<path d="M349.3 198.8 C362.8 184.1 382.4 169.3 395.6 160.0" stroke="#c9a07a" stroke-width="0.84" stroke-opacity="0.85"/>
<path d="M342.1 192.4 C365.7 158.5 393.2 148.5 409.4 178.1" stroke="#b8875a" stroke-width="0.52" stroke-opacity="0.85"/>
<path d="M351.8 199.9 C376.6 194.3 398.1 196.7 403.2 218.7" stroke="#b8875a" stroke-width="0.52" stroke-opacity="0.85"/>
<path d="M344.7 194.6 C368.1 165.2 396.9 162.3 408.1 194.5" stroke="#9a6a40" stroke-width="0.51" stroke-opacity="0.85"/>
<path d="M349.5 196.3 C368.3 174.6 389.6 170.8 403.7 182.6" stroke="#c9a07a" stroke-width="1.04" stroke-opacity="0.85"/>
<path d="M355.8 203.7 C378.3 199.1 393.2 197.5 406.1 216.9" stroke="#b8875a" stroke-width="0.82" stroke-opacity="0.85"/>
<path d="M345.3 187.8 C357.1 169.4 369.4 152.4 384.0 134.1" stroke="#e0c0a0" stroke-width="0.93" stroke-opacity="0.85"/>
<path d="M351.5 197.9 C377.7 164.9 410.6 169.9 416.5 214.3" stroke="#e0c0a0" stroke-width="0.71" stroke-opacity="0.85"/>
<path d="M347.6 189.0 C344.7 170.5 353.3 153.6 359.2 151.0" stroke="#7a5030" stroke-width="0.59" stroke-opacity="0.85"/>
<path d="M352.8 197.1 C385.7 178.5 405.7 182.9 413.1 212.6" stroke="#c9a07a" stroke-width="0.79" stroke-opacity="0.85"/>
<path d="M348.0 200.3 C379.3 179.9 403.2 186.0 407.6 216.7" stroke="#e0c0a0" stroke-width="1.03" stroke-opacity="0.85"/>
<path d="M342.1 191.1 C356.7 166.2 372.8 145.9 387.4 126.9" stroke="#9a6a40" stroke-width="0.68" stroke-opacity="0.85"/>
<path d="M348.4 196.1 C371.8 174.8 392.7 152.6 406.1 144.7" stroke="#c9a07a" stroke-width="0.80" stroke-opacity="0.85"/>
<path d="M347.0 189.7 C361.4 170.2 376.4 146.8 385.1 135.5" stroke="#e0c4a4" stroke-width="0.65" stroke-opacity="0.85"/>
<path d="M351.2 192.3 C368.8 170.7 390.3 154.5 403.3 142.9" stroke="#6a4426" stroke-width="0.52" stroke-opacity="0.85"/>
<path d="M350.0 194.8 C367.1 176.2 387.8 166.9 401.7 178.1" stroke="#7a5030" stroke-width="0.56" stroke-opacity="0.85"/>
<path d="M353.2 200.6 C376.1 194.9 400.2 200.3 403.8 217.0" stroke="#a8784c" stroke-width="0.83" stroke-opacity="0.85"/>
<path d="M348.0 199.5 C368.8 191.9 388.2 193.3 394.7 207.1" stroke="#9a6a40" stroke-width="0.64" stroke-opacity="0.85"/>
<path d="M343.1 184.2 C360.2 159.5 375.9 135.4 387.9 122.5" stroke="#7a5030" stroke-width="0.75" stroke-opacity="0.85"/>
<path d="M342.9 184.9 C342.1 173.4 344.5 160.8 350.8 151.2" stroke="#c8a078" stroke-width="0.70" stroke-opacity="0.85"/>
<path d="M348.1 200.0 C364.6 183.3 383.3 165.2 393.1 158.6" stroke="#d8b896" stroke-width="0.73" stroke-opacity="0.85"/>
<path d="M353.6 196.8 C377.3 191.8 398.1 195.1 404.8 210.2" stroke="#c8a078" stroke-width="0.61" stroke-opacity="0.85"/>
<path d="M348.3 191.8 C374.0 164.5 399.9 161.8 413.5 190.3" stroke="#5a3a20" stroke-width="0.84" stroke-opacity="0.85"/>
<path d="M347.4 184.9 C344.9 170.1 350.5 162.3 355.1 153.0" stroke="#c9a07a" stroke-width="0.72" stroke-opacity="0.85"/>
<path d="M346.6 197.9 C368.3 173.3 390.2 156.3 403.3 147.6" stroke="#b8875a" stroke-width="0.66" stroke-opacity="0.85"/>
<path d="M343.0 187.6 C361.8 153.0 392.2 145.1 406.3 171.1" stroke="#b8875a" stroke-width="1.05" stroke-opacity="0.85"/>
<path d="M347.6 182.2 C341.2 165.9 350.8 149.4 362.3 141.5" stroke="#e0c4a4" stroke-width="0.95" stroke-opacity="0.85"/>
<path d="M349.2 201.9 C378.6 183.6 404.4 188.0 411.1 215.0" stroke="#9a6a40" stroke-width="0.62" stroke-opacity="0.85"/>
<path d="M348.6 188.0 C369.1 158.3 386.4 147.8 401.2 158.8" stroke="#5a3a20" stroke-width="0.76" stroke-opacity="0.85"/>
<path d="M340.8 191.9 C351.5 172.3 365.3 154.5 378.6 140.6" stroke="#7a5030" stroke-width="1.07" stroke-opacity="0.85"/>
<path d="M353.9 197.2 C378.4 188.2 402.2 194.1 411.3 222.8" stroke="#6a4426" stroke-width="0.63" stroke-opacity="0.85"/>
<path d="M345.8 184.8 C359.1 161.4 373.2 139.5 386.6 130.2" stroke="#c8a078" stroke-width="0.78" stroke-opacity="0.85"/>
<path d="M344.3 186.1 C359.4 162.0 379.9 130.2 393.8 122.3" stroke="#5a3a20" stroke-width="1.06" stroke-opacity="0.85"/>
<path d="M344.0 186.6 C358.4 160.6 381.7 134.1 389.6 122.1" stroke="#e0c4a4" stroke-width="0.94" stroke-opacity="0.85"/>
<path d="M344.0 183.2 C341.4 161.9 348.5 147.1 358.3 144.2" stroke="#e0c0a0" stroke-width="0.64" stroke-opacity="0.85"/>
<path d="M348.2 197.2 C369.7 189.6 395.7 196.3 402.9 215.2" stroke="#d8b896" stroke-width="0.59" stroke-opacity="0.85"/>
<path d="M344.2 193.6 C370.3 154.7 403.1 148.1 413.0 193.7" stroke="#c9a07a" stroke-width="0.67" stroke-opacity="0.85"/>
<path d="M350.2 194.1 C386.8 168.6 410.6 179.4 412.9 219.3" stroke="#c8a078" stroke-width="1.08" stroke-opacity="0.85"/>
<path d="M349.9 192.5 C365.7 176.3 384.0 160.1 397.5 149.2" stroke="#b8875a" stroke-width="0.79" stroke-opacity="0.85"/>
<path d="M340.6 187.9 C335.5 170.7 345.3 159.6 351.5 153.0" stroke="#c9a07a" stroke-width="1.10" stroke-opacity="0.85"/>
<path d="M342.2 193.8 C360.4 165.2 389.2 153.8 401.3 170.5" stroke="#d8b896" stroke-width="0.82" stroke-opacity="0.85"/>
<path d="M351.0 199.5 C374.6 191.3 394.6 195.5 406.5 218.1" stroke="#5a3a20" stroke-width="0.98" stroke-opacity="0.85"/>
<path d="M350.9 196.0 C377.1 166.0 404.9 166.7 413.5 196.3" stroke="#6a4426" stroke-width="0.97" stroke-opacity="0.85"/>
<path d="M345.6 184.3 C358.9 160.7 378.2 137.8 392.1 121.9" stroke="#d8b896" stroke-width="1.06" stroke-opacity="0.85"/>
<path d="M346.5 198.7 C378.4 175.5 398.6 184.7 408.7 214.4" stroke="#d8b896" stroke-width="0.92" stroke-opacity="0.85"/>
<path d="M352.4 194.1 C375.7 178.7 392.1 178.5 403.3 190.9" stroke="#6a4426" stroke-width="0.55" stroke-opacity="0.85"/>
<path d="M346.3 188.4 C340.6 170.5 352.5 154.6 358.4 149.9" stroke="#9a6a40" stroke-width="0.89" stroke-opacity="0.85"/>
<path d="M346.3 193.3 C376.3 164.3 406.4 166.4 412.6 202.5" stroke="#b8875a" stroke-width="0.56" stroke-opacity="0.85"/>
<path d="M348.7 188.8 C368.4 157.5 399.3 145.9 412.1 176.4" stroke="#7a5030" stroke-width="1.04" stroke-opacity="0.85"/>
<path d="M342.3 189.6 C359.5 163.2 376.4 143.3 386.4 127.6" stroke="#7a5030" stroke-width="0.98" stroke-opacity="0.85"/>
<path d="M344.4 193.7 C362.1 168.3 382.6 152.6 400.6 167.9" stroke="#b8875a" stroke-width="0.76" stroke-opacity="0.85"/>
<path d="M348.1 190.8 C368.6 161.3 392.1 152.3 406.9 165.2" stroke="#e0c0a0" stroke-width="0.76" stroke-opacity="0.85"/>
<path d="M349.5 194.5 C376.9 166.8 400.9 150.5 407.5 139.3" stroke="#b8875a" stroke-width="0.50" stroke-opacity="0.85"/>
<path d="M344.6 196.7 C374.9 163.3 404.9 164.8 408.9 208.3" stroke="#a8784c" stroke-width="0.66" stroke-opacity="0.85"/>
<path d="M353.9 197.9 C383.0 180.9 404.5 183.1 410.7 199.4" stroke="#a8784c" stroke-width="1.06" stroke-opacity="0.85"/>
<path d="M342.2 187.5 C351.8 168.8 369.4 150.7 381.9 137.6" stroke="#d8b896" stroke-width="0.65" stroke-opacity="0.85"/>
<path d="M352.5 203.0 C370.6 196.1 393.7 199.1 399.3 213.0" stroke="#c9a07a" stroke-width="0.54" stroke-opacity="0.85"/>
<path d="M340.9 185.5 C355.3 165.9 372.7 138.0 387.2 124.1" stroke="#e0c4a4" stroke-width="1.02" stroke-opacity="0.85"/>
<path d="M348.5 192.9 C372.6 165.6 398.5 163.5 413.8 188.7" stroke="#7a5030" stroke-width="0.93" stroke-opacity="0.85"/>
<path d="M349.6 196.7 C381.8 175.2 401.6 184.2 406.4 209.0" stroke="#e0c4a4" stroke-width="0.88" stroke-opacity="0.85"/>
<path d="M351.4 198.6 C374.4 176.0 392.7 158.6 403.6 150.2" stroke="#9a6a40" stroke-width="0.96" stroke-opacity="0.85"/>
<path d="M347.8 199.8 C364.3 186.5 375.3 169.4 389.4 158.6" stroke="#e0c4a4" stroke-width="1.05" stroke-opacity="0.85"/>
<path d="M346.5 189.0 C362.6 162.2 389.2 150.7 401.6 165.5" stroke="#c9a07a" stroke-width="0.55" stroke-opacity="0.85"/>
<path d="M345.5 189.7 C360.0 164.7 384.6 155.7 396.7 160.9" stroke="#d8b896" stroke-width="0.68" stroke-opacity="0.85"/>
<path d="M341.1 184.4 C339.7 172.3 342.7 157.8 351.1 149.1" stroke="#e0c4a4" stroke-width="0.69" stroke-opacity="0.85"/>
<path d="M342.1 189.0 C337.2 167.6 349.4 152.4 357.0 147.9" stroke="#5a3a20" stroke-width="0.76" stroke-opacity="0.85"/>
<path d="M351.5 196.1 C381.8 175.2 401.8 181.9 411.6 207.6" stroke="#b8875a" stroke-width="0.60" stroke-opacity="0.85"/>
<path d="M350.8 203.1 C372.2 193.2 393.3 199.0 399.8 218.2" stroke="#c9a07a" stroke-width="0.74" stroke-opacity="0.85"/>
<path d="M353.7 196.1 C390.2 175.4 411.4 184.7 416.9 222.3" stroke="#d8b896" stroke-width="0.59" stroke-opacity="0.85"/>
<path d="M344.1 192.2 C368.8 154.5 400.9 149.1 413.7 188.2" stroke="#6a4426" stroke-width="0.71" stroke-opacity="0.85"/>
<path d="M346.6 195.6 C370.1 169.2 391.0 151.2 403.0 142.8" stroke="#c8a078" stroke-width="1.05" stroke-opacity="0.85"/>
<path d="M350.9 198.6 C369.1 177.4 393.5 159.9 404.4 149.6" stroke="#e0c4a4" stroke-width="0.63" stroke-opacity="0.85"/>
<path d="M345.2 191.4 C367.5 165.4 395.6 160.1 408.6 190.3" stroke="#d8b896" stroke-width="0.87" stroke-opacity="0.85"/>
<path d="M351.2 201.3 C367.8 192.7 383.4 195.6 396.3 208.1" stroke="#e0c4a4" stroke-width="0.85" stroke-opacity="0.85"/>
<path d="M347.8 201.6 C370.9 187.2 394.8 188.3 403.7 205.1" stroke="#7a5030" stroke-width="0.60" stroke-opacity="0.85"/>
<path d="M345.9 187.4 C356.1 167.8 373.3 152.2 383.2 136.4" stroke="#5a3a20" stroke-width="0.82" stroke-opacity="0.85"/>
<path d="M351.4 202.0 C369.8 194.1 386.6 196.1 393.2 206.5" stroke="#d8b896" stroke-width="0.95" stroke-opacity="0.85"/>
<path d="M343.3 189.0 C352.3 173.6 364.5 156.2 378.3 138.1" stroke="#c8a078" stroke-width="0.94" stroke-opacity="0.85"/>
<path d="M343.1 187.4 C360.2 157.9 384.7 148.9 403.1 163.1" stroke="#e0c0a0" stroke-width="0.89" stroke-opacity="0.85"/>
<path d="M353.9 198.3 C377.7 175.8 400.2 156.8 415.0 147.4" stroke="#5a3a20" stroke-width="0.61" stroke-opacity="0.85"/>
<path d="M342.5 186.4 C353.4 163.1 370.1 145.2 383.3 129.3" stroke="#e0c0a0" stroke-width="1.05" stroke-opacity="0.85"/>
<path d="M349.7 196.2 C374.6 168.1 404.3 164.4 412.9 196.2" stroke="#c8a078" stroke-width="0.55" stroke-opacity="0.85"/>
<path d="M354.1 200.7 C373.6 195.8 386.9 197.5 399.8 209.0" stroke="#e0c0a0" stroke-width="1.05" stroke-opacity="0.85"/>
<path d="M341.5 187.9 C339.4 169.2 345.4 154.9 352.6 150.0" stroke="#5a3a20" stroke-width="0.58" stroke-opacity="0.85"/>
<path d="M352.1 211.0 Q379.0 225.5 400.8 256.5" stroke="#7a5030" stroke-width="0.83" stroke-opacity="0.8"/>
<path d="M362.1 199.9 Q391.9 208.6 411.1 232.6" stroke="#c9a07a" stroke-width="0.65" stroke-opacity="0.8"/>
<path d="M374.7 200.6 Q399.8 204.7 415.0 225.0" stroke="#a85c1c" stroke-width="1.13" stroke-opacity="0.8"/>
<path d="M371.3 200.2 Q395.0 208.2 410.8 224.9" stroke="#b86a28" stroke-width="0.65" stroke-opacity="0.8"/>
<path d="M350.0 207.9 Q376.5 216.1 393.1 242.4" stroke="#c87a34" stroke-width="1.13" stroke-opacity="0.8"/>
<path d="M343.0 201.9 Q377.9 213.3 403.2 255.1" stroke="#b8875a" stroke-width="0.98" stroke-opacity="0.8"/>
<path d="M364.9 201.5 Q386.3 207.9 403.9 221.1" stroke="#d88c40" stroke-width="1.07" stroke-opacity="0.8"/>
<path d="M352.6 206.5 Q381.8 220.8 399.6 252.9" stroke="#b8875a" stroke-width="0.62" stroke-opacity="0.8"/>
<path d="M349.8 209.5 Q371.9 220.4 391.8 251.4" stroke="#b8875a" stroke-width="0.68" stroke-opacity="0.8"/>
<path d="M358.3 198.1 Q391.4 202.9 414.7 229.8" stroke="#d88c40" stroke-width="1.04" stroke-opacity="0.8"/>
<path d="M357.8 214.8 Q375.6 228.5 393.8 248.7" stroke="#b8875a" stroke-width="0.66" stroke-opacity="0.8"/>
<path d="M369.5 204.3 Q393.8 212.7 415.2 232.5" stroke="#7a5030" stroke-width="0.61" stroke-opacity="0.8"/>
<path d="M366.5 209.0 Q384.2 218.5 404.1 234.6" stroke="#b8875a" stroke-width="1.16" stroke-opacity="0.8"/>
<path d="M362.4 200.1 Q397.2 204.2 419.7 230.6" stroke="#a85c1c" stroke-width="0.68" stroke-opacity="0.8"/>
<path d="M348.1 202.7 Q375.5 217.0 397.9 250.4" stroke="#c9a07a" stroke-width="0.70" stroke-opacity="0.8"/>
<path d="M359.6 189.5 Q389.6 192.1 407.6 211.7" stroke="#b86a28" stroke-width="0.89" stroke-opacity="0.8"/>
<path d="M365.1 194.0 Q387.8 197.2 412.3 217.2" stroke="#a8784c" stroke-width="1.18" stroke-opacity="0.8"/>
<path d="M359.0 197.7 Q383.3 203.4 400.8 223.3" stroke="#a8784c" stroke-width="0.79" stroke-opacity="0.8"/>
<path d="M358.8 198.4 Q380.7 208.5 401.6 226.5" stroke="#c87a34" stroke-width="0.68" stroke-opacity="0.8"/>
<path d="M350.3 197.5 Q379.4 200.9 401.2 225.9" stroke="#a8784c" stroke-width="0.67" stroke-opacity="0.8"/>
<path d="M352.0 190.1 Q381.9 196.6 399.8 212.4" stroke="#a85c1c" stroke-width="1.18" stroke-opacity="0.8"/>
<path d="M366.3 204.4 Q393.9 211.0 413.8 238.7" stroke="#c9a07a" stroke-width="0.60" stroke-opacity="0.8"/>
<path d="M363.4 198.2 Q388.4 206.6 401.8 220.4" stroke="#c87a34" stroke-width="0.88" stroke-opacity="0.8"/>
<path d="M353.5 192.3 Q387.6 196.9 406.9 217.1" stroke="#a85c1c" stroke-width="0.96" stroke-opacity="0.8"/>
<path d="M356.4 197.5 Q375.7 202.9 396.7 218.2" stroke="#7a5030" stroke-width="0.73" stroke-opacity="0.8"/>
<path d="M374.5 192.9 Q404.0 201.0 421.1 224.5" stroke="#a8784c" stroke-width="0.83" stroke-opacity="0.8"/>
<path d="M352.7 211.6 Q376.5 219.6 396.2 250.0" stroke="#c9a07a" stroke-width="0.98" stroke-opacity="0.8"/>
<path d="M344.9 207.0 Q374.3 217.0 396.0 252.4" stroke="#c9a07a" stroke-width="1.06" stroke-opacity="0.8"/>
<path d="M369.3 203.7 Q395.3 210.3 419.3 234.8" stroke="#d88c40" stroke-width="0.69" stroke-opacity="0.8"/>
<path d="M342.7 201.4 Q364.8 208.2 382.7 233.1" stroke="#c87a34" stroke-width="0.83" stroke-opacity="0.8"/>
<path d="M367.2 196.3 Q397.2 205.0 418.0 229.3" stroke="#a85c1c" stroke-width="0.87" stroke-opacity="0.8"/>
<path d="M364.5 207.0 Q389.7 211.5 411.4 241.0" stroke="#7a5030" stroke-width="0.69" stroke-opacity="0.8"/>
<path d="M362.7 202.9 Q384.6 210.5 406.3 229.7" stroke="#b8875a" stroke-width="0.95" stroke-opacity="0.8"/>
<path d="M360.4 208.4 Q381.0 220.8 394.1 245.3" stroke="#d88c40" stroke-width="0.88" stroke-opacity="0.8"/>
<path d="M363.6 209.3 Q386.3 216.5 407.5 235.8" stroke="#b86a28" stroke-width="0.73" stroke-opacity="0.8"/>
<path d="M351.1 198.2 Q375.2 201.3 392.8 223.1" stroke="#c9a07a" stroke-width="0.70" stroke-opacity="0.8"/>
<path d="M363.5 213.6 Q385.6 225.4 400.9 254.8" stroke="#b8875a" stroke-width="1.14" stroke-opacity="0.8"/>
<path d="M363.4 199.4 Q383.5 207.0 403.0 227.0" stroke="#c87a34" stroke-width="1.05" stroke-opacity="0.8"/>
<path d="M379.1 196.3 Q402.8 202.6 418.6 220.6" stroke="#7a5030" stroke-width="0.98" stroke-opacity="0.8"/>
<path d="M360.4 201.8 Q389.4 207.6 416.4 243.1" stroke="#c87a34" stroke-width="1.06" stroke-opacity="0.8"/>
<path d="M359.8 206.7 Q385.6 219.3 403.0 250.2" stroke="#d88c40" stroke-width="0.73" stroke-opacity="0.8"/>
<path d="M355.4 191.7 Q393.5 199.3 421.2 224.3" stroke="#a8784c" stroke-width="1.03" stroke-opacity="0.8"/>
<path d="M356.7 199.5 Q379.9 207.6 403.4 233.6" stroke="#b8875a" stroke-width="0.65" stroke-opacity="0.8"/>
<path d="M349.5 200.5 Q369.1 203.7 387.5 218.5" stroke="#a85c1c" stroke-width="1.00" stroke-opacity="0.8"/>
<path d="M350.9 201.5 Q381.5 212.2 401.6 244.2" stroke="#b86a28" stroke-width="0.99" stroke-opacity="0.8"/>
<path d="M354.1 208.0 Q376.9 218.1 396.7 249.8" stroke="#b86a28" stroke-width="0.90" stroke-opacity="0.8"/>
<path d="M359.7 206.0 Q389.9 221.1 409.4 258.7" stroke="#d88c40" stroke-width="0.90" stroke-opacity="0.8"/>
<path d="M365.0 199.0 Q389.0 206.7 407.6 226.8" stroke="#c87a34" stroke-width="1.03" stroke-opacity="0.8"/>
<path d="M374.3 197.4 Q397.2 203.2 416.3 225.6" stroke="#c87a34" stroke-width="0.63" stroke-opacity="0.8"/>
<path d="M355.1 190.9 Q385.6 194.9 406.5 219.7" stroke="#7a5030" stroke-width="0.91" stroke-opacity="0.8"/>
<path d="M366.2 213.8 Q385.2 230.0 408.0 254.9" stroke="#c87a34" stroke-width="1.19" stroke-opacity="0.8"/>
<path d="M350.0 204.5 Q376.7 206.4 393.8 227.1" stroke="#c9a07a" stroke-width="0.71" stroke-opacity="0.8"/>
<path d="M358.8 197.3 Q391.1 204.2 413.2 222.3" stroke="#c87a34" stroke-width="0.68" stroke-opacity="0.8"/>
<path d="M369.2 208.5 Q393.2 218.1 410.9 234.9" stroke="#a85c1c" stroke-width="0.65" stroke-opacity="0.8"/>
<path d="M363.6 215.0 Q388.4 229.7 404.6 257.9" stroke="#a85c1c" stroke-width="1.06" stroke-opacity="0.8"/>
<path d="M352.8 212.5 Q376.4 222.8 401.1 258.2" stroke="#d88c40" stroke-width="0.86" stroke-opacity="0.8"/>
<path d="M362.2 202.6 Q382.7 210.7 401.9 227.3" stroke="#b86a28" stroke-width="0.92" stroke-opacity="0.8"/>
<path d="M358.3 204.5 Q381.4 217.9 405.6 248.0" stroke="#a85c1c" stroke-width="0.78" stroke-opacity="0.8"/>
<path d="M362.1 215.6 Q385.6 229.2 400.4 249.9" stroke="#a8784c" stroke-width="0.85" stroke-opacity="0.8"/>
<path d="M380.8 200.8 Q401.9 207.1 421.1 227.2" stroke="#a85c1c" stroke-width="0.90" stroke-opacity="0.8"/>
<path d="M368.9 215.9 Q388.7 228.5 408.1 256.7" stroke="#c9a07a" stroke-width="0.76" stroke-opacity="0.8"/>
<path d="M363.9 191.9 Q387.5 194.2 405.7 207.6" stroke="#a85c1c" stroke-width="0.73" stroke-opacity="0.8"/>
<path d="M350.1 210.6 Q373.3 219.3 390.1 250.6" stroke="#d88c40" stroke-width="0.72" stroke-opacity="0.8"/>
<path d="M355.7 212.3 Q376.3 224.3 397.1 253.1" stroke="#a85c1c" stroke-width="0.98" stroke-opacity="0.8"/>
<path d="M362.5 209.5 Q381.3 220.3 395.8 246.5" stroke="#b86a28" stroke-width="1.18" stroke-opacity="0.8"/>
<path d="M354.0 200.8 Q383.7 209.1 403.1 247.6" stroke="#a85c1c" stroke-width="0.82" stroke-opacity="0.8"/>
<path d="M362.1 199.6 Q396.5 205.2 414.0 233.3" stroke="#c9a07a" stroke-width="0.64" stroke-opacity="0.8"/>
<path d="M362.0 209.2 Q384.8 216.5 402.8 236.9" stroke="#a85c1c" stroke-width="0.64" stroke-opacity="0.8"/>
<path d="M359.9 194.1 Q388.0 197.7 404.3 215.7" stroke="#c87a34" stroke-width="0.86" stroke-opacity="0.8"/>
<path d="M364.5 200.1 Q394.1 203.6 411.8 220.5" stroke="#c9a07a" stroke-width="0.63" stroke-opacity="0.8"/>
<path d="M276.0 230.9 Q275.7 198.7 308.9 180.8" stroke="#eccdb4" stroke-width="0.81" stroke-opacity="0.5"/>
<path d="M350.4 242.0 Q349.3 201.2 333.0 183.8" stroke="#e2b898" stroke-width="0.67" stroke-opacity="0.5"/>
<path d="M274.8 237.6 Q270.9 195.3 313.2 165.8" stroke="#f6e2d4" stroke-width="1.15" stroke-opacity="0.5"/>
<path d="M304.3 224.7 Q303.7 197.0 318.5 175.9" stroke="#daa888" stroke-width="1.17" stroke-opacity="0.5"/>
<path d="M263.4 238.5 Q265.0 211.3 295.5 185.4" stroke="#e6c2a6" stroke-width="0.70" stroke-opacity="0.5"/>
<path d="M279.8 222.8 Q286.3 194.1 312.4 169.2" stroke="#f6e2d4" stroke-width="0.66" stroke-opacity="0.5"/>
<path d="M331.7 228.2 Q326.9 193.3 326.3 174.4" stroke="#e6c2a6" stroke-width="0.75" stroke-opacity="0.5"/>
<path d="M253.2 232.7 Q260.2 203.7 287.7 181.3" stroke="#e2b898" stroke-width="0.72" stroke-opacity="0.5"/>
<path d="M267.8 221.8 Q280.8 191.4 309.2 177.3" stroke="#daa888" stroke-width="0.98" stroke-opacity="0.5"/>
<path d="M329.6 242.3 Q327.2 204.5 323.1 184.1" stroke="#eccdb4" stroke-width="1.11" stroke-opacity="0.5"/>
<path d="M332.3 240.3 Q328.4 209.8 331.5 182.1" stroke="#f4dcca" stroke-width="0.74" stroke-opacity="0.5"/>
<path d="M272.4 248.3 Q270.5 204.6 303.9 179.6" stroke="#d8a878" stroke-width="0.83" stroke-opacity="0.5"/>
<path d="M293.4 229.7 Q289.6 189.3 310.6 165.5" stroke="#f6e2d4" stroke-width="0.90" stroke-opacity="0.5"/>
<path d="M297.3 237.4 Q298.6 208.2 309.3 186.9" stroke="#eccdb4" stroke-width="0.64" stroke-opacity="0.5"/>
<path d="M293.3 215.0 Q294.1 183.4 315.2 166.9" stroke="#f4dcca" stroke-width="1.05" stroke-opacity="0.5"/>
<path d="M261.5 233.3 Q267.2 206.5 299.0 186.7" stroke="#eccdb4" stroke-width="0.88" stroke-opacity="0.5"/>
<path d="M274.7 228.9 Q279.9 194.9 301.3 177.7" stroke="#eccdb4" stroke-width="0.89" stroke-opacity="0.5"/>
<path d="M299.5 242.0 Q294.7 211.1 310.4 184.3" stroke="#f8e8d8" stroke-width="0.67" stroke-opacity="0.5"/>
<path d="M283.9 220.4 Q290.4 189.1 314.3 168.0" stroke="#f6e2d4" stroke-width="1.08" stroke-opacity="0.5"/>
<path d="M280.4 239.0 Q281.5 200.8 310.5 172.7" stroke="#eccdb4" stroke-width="0.72" stroke-opacity="0.5"/>
<path d="M294.1 225.4 Q298.5 197.9 313.5 176.1" stroke="#eccdb4" stroke-width="0.67" stroke-opacity="0.5"/>
<path d="M301.3 243.4 Q301.4 206.8 318.5 180.2" stroke="#d8a878" stroke-width="0.91" stroke-opacity="0.5"/>
<path d="M278.7 224.3 Q280.5 188.8 312.5 168.7" stroke="#f4dcca" stroke-width="0.81" stroke-opacity="0.5"/>
<path d="M326.7 225.3 Q324.3 191.0 323.2 171.5" stroke="#f4dcca" stroke-width="0.90" stroke-opacity="0.5"/>
<path d="M263.4 222.6 Q269.9 192.7 302.3 175.6" stroke="#d8a878" stroke-width="0.66" stroke-opacity="0.5"/>
<path d="M254.6 230.4 Q259.3 198.9 287.3 179.7" stroke="#eccdb4" stroke-width="1.15" stroke-opacity="0.5"/>
<path d="M347.5 236.1 Q341.1 196.9 329.2 174.3" stroke="#d8a878" stroke-width="0.75" stroke-opacity="0.5"/>
<path d="M280.8 211.8 Q286.2 185.6 315.7 168.4" stroke="#f6e2d4" stroke-width="0.93" stroke-opacity="0.5"/>
<path d="M350.8 235.4 Q349.3 201.1 334.5 177.0" stroke="#e2b898" stroke-width="1.10" stroke-opacity="0.5"/>
<path d="M266.0 231.2 Q275.7 200.4 299.9 182.7" stroke="#e2b898" stroke-width="0.68" stroke-opacity="0.5"/>
<path d="M299.1 223.3 Q303.2 187.6 319.0 169.0" stroke="#daa888" stroke-width="0.81" stroke-opacity="0.5"/>
<path d="M276.1 229.6 Q281.2 200.3 302.8 176.4" stroke="#daa888" stroke-width="0.71" stroke-opacity="0.5"/>
<path d="M325.1 220.8 Q323.1 191.5 319.7 169.9" stroke="#f6e2d4" stroke-width="0.99" stroke-opacity="0.5"/>
<path d="M258.4 236.9 Q258.9 193.7 315.1 171.0" stroke="#eccdb4" stroke-width="0.97" stroke-opacity="0.5"/>
<path d="M263.2 228.8 Q268.9 195.3 295.8 175.2" stroke="#f8e8d8" stroke-width="0.95" stroke-opacity="0.5"/>
<path d="M321.2 218.7 Q319.6 192.3 319.1 165.7" stroke="#f6e2d4" stroke-width="0.67" stroke-opacity="0.5"/>
<path d="M352.1 234.4 Q348.8 199.2 336.9 177.8" stroke="#f8e8d8" stroke-width="0.67" stroke-opacity="0.5"/>
<path d="M341.4 221.1 Q334.0 189.0 322.6 171.8" stroke="#f6e2d4" stroke-width="0.67" stroke-opacity="0.5"/>
<path d="M292.6 222.3 Q296.1 193.3 306.9 174.0" stroke="#f6e2d4" stroke-width="0.72" stroke-opacity="0.5"/>
<path d="M281.4 238.9 Q284.6 204.1 313.8 181.9" stroke="#d8a878" stroke-width="0.70" stroke-opacity="0.5"/>
<path d="M332.7 220.1 Q332.8 194.8 328.7 177.3" stroke="#d8a878" stroke-width="0.72" stroke-opacity="0.5"/>
<path d="M297.2 234.5 Q296.9 196.3 312.1 166.1" stroke="#d8a878" stroke-width="1.16" stroke-opacity="0.5"/>
<path d="M332.1 227.0 Q333.3 198.8 329.2 174.7" stroke="#daa888" stroke-width="0.95" stroke-opacity="0.5"/>
<path d="M328.9 228.4 Q328.2 186.9 322.9 166.8" stroke="#eccdb4" stroke-width="0.69" stroke-opacity="0.5"/>
<path d="M298.8 238.6 Q295.7 207.8 309.4 188.0" stroke="#daa888" stroke-width="1.10" stroke-opacity="0.5"/>
<path d="M333.2 235.4 Q332.1 203.7 327.1 178.9" stroke="#f8e8d8" stroke-width="0.80" stroke-opacity="0.5"/>
<path d="M259.8 234.1 Q261.5 206.5 288.6 187.3" stroke="#f6e2d4" stroke-width="1.00" stroke-opacity="0.5"/>
<path d="M328.3 237.9 Q328.8 206.3 321.8 189.6" stroke="#e2b898" stroke-width="0.73" stroke-opacity="0.5"/>
<path d="M346.5 234.3 Q347.5 196.7 327.1 174.9" stroke="#e6c2a6" stroke-width="0.80" stroke-opacity="0.5"/>
<path d="M262.5 229.2 Q267.9 181.5 321.2 158.3" stroke="#e6c2a6" stroke-width="0.95" stroke-opacity="0.5"/>
<path d="M353.9 237.8 Q353.4 190.3 329.1 167.9" stroke="#f4dcca" stroke-width="0.69" stroke-opacity="0.5"/>
<path d="M349.4 238.9 Q345.7 197.5 333.6 172.6" stroke="#e2b898" stroke-width="0.78" stroke-opacity="0.5"/>
<path d="M332.2 215.2 Q329.1 184.7 327.1 164.1" stroke="#daa888" stroke-width="1.10" stroke-opacity="0.5"/>
<path d="M327.8 236.9 Q326.1 197.7 323.3 174.2" stroke="#daa888" stroke-width="1.15" stroke-opacity="0.5"/>
<path d="M264.7 232.1 Q273.4 201.0 314.4 180.1" stroke="#e2b898" stroke-width="1.15" stroke-opacity="0.5"/>
<path d="M301.1 217.7 Q301.0 192.8 316.7 170.4" stroke="#f6e2d4" stroke-width="1.12" stroke-opacity="0.5"/>
<path d="M270.6 235.1 Q272.3 193.8 306.7 165.7" stroke="#d8a878" stroke-width="1.17" stroke-opacity="0.5"/>
<path d="M281.2 229.7 Q279.8 199.0 301.3 177.6" stroke="#f6e2d4" stroke-width="0.72" stroke-opacity="0.5"/>
<path d="M325.4 228.7 Q324.2 193.4 321.0 171.8" stroke="#f6e2d4" stroke-width="0.77" stroke-opacity="0.5"/>
<path d="M271.8 219.1 Q271.7 189.3 305.6 167.0" stroke="#d8a878" stroke-width="1.16" stroke-opacity="0.5"/>
<path d="M251.6 242.0 Q255.0 206.8 289.8 184.2" stroke="#f6e2d4" stroke-width="0.71" stroke-opacity="0.5"/>
<path d="M325.3 230.5 Q323.1 198.3 319.1 179.0" stroke="#f4dcca" stroke-width="0.91" stroke-opacity="0.5"/>
<path d="M323.8 227.3 Q317.3 187.1 318.4 165.5" stroke="#d8a878" stroke-width="1.10" stroke-opacity="0.5"/>
<path d="M348.0 223.3 Q344.9 190.5 333.6 165.8" stroke="#f4dcca" stroke-width="0.88" stroke-opacity="0.5"/>
<path d="M256.2 237.5 Q255.7 204.2 284.2 184.4" stroke="#eccdb4" stroke-width="0.88" stroke-opacity="0.5"/>
<path d="M349.9 224.6 Q345.5 193.9 340.6 180.6" stroke="#f4dcca" stroke-width="0.86" stroke-opacity="0.5"/>
<path d="M332.0 224.9 Q327.3 195.3 327.3 172.2" stroke="#e6c2a6" stroke-width="0.94" stroke-opacity="0.5"/>
<path d="M323.6 222.3 Q319.9 184.3 323.0 160.8" stroke="#e2b898" stroke-width="0.67" stroke-opacity="0.5"/>
<path d="M264.1 226.9 Q275.5 196.9 316.8 177.5" stroke="#f4dcca" stroke-width="1.02" stroke-opacity="0.5"/>
<path d="M328.7 216.6 Q325.9 185.8 324.2 168.5" stroke="#e6c2a6" stroke-width="0.99" stroke-opacity="0.5"/>
<path d="M300.4 231.6 Q299.0 195.5 317.8 164.0" stroke="#d8a878" stroke-width="1.11" stroke-opacity="0.5"/>
<path d="M253.7 224.2 Q261.0 194.5 292.1 169.2" stroke="#daa888" stroke-width="1.15" stroke-opacity="0.5"/>
<path d="M346.1 222.0 Q344.9 189.7 329.8 172.8" stroke="#e6c2a6" stroke-width="1.16" stroke-opacity="0.5"/>
<path d="M344.9 222.5 Q338.2 190.3 326.9 177.7" stroke="#e2b898" stroke-width="0.84" stroke-opacity="0.5"/>
<path d="M258.8 222.6 Q268.8 188.9 306.2 171.7" stroke="#d8a878" stroke-width="0.61" stroke-opacity="0.5"/>
<path d="M328.0 239.7 Q324.7 201.1 324.0 167.1" stroke="#f4dcca" stroke-width="0.63" stroke-opacity="0.5"/>
<path d="M354.2 222.8 Q351.4 181.2 334.2 158.3" stroke="#eccdb4" stroke-width="0.88" stroke-opacity="0.5"/>
<path d="M278.5 246.1 Q274.8 196.4 313.1 172.4" stroke="#d8a878" stroke-width="0.97" stroke-opacity="0.5"/>
<path d="M326.0 230.0 Q327.3 206.6 322.7 186.1" stroke="#daa888" stroke-width="0.65" stroke-opacity="0.5"/>
<path d="M298.2 245.2 Q296.8 214.7 304.3 191.1" stroke="#daa888" stroke-width="0.89" stroke-opacity="0.5"/>
<path d="M349.2 231.5 Q344.3 196.4 327.6 170.0" stroke="#f6e2d4" stroke-width="0.99" stroke-opacity="0.5"/>
<path d="M352.5 234.3 Q351.8 189.8 332.5 171.6" stroke="#f8e8d8" stroke-width="1.18" stroke-opacity="0.5"/>
<path d="M334.0 233.6 Q333.9 201.4 327.5 180.5" stroke="#f4dcca" stroke-width="0.85" stroke-opacity="0.5"/>
<path d="M349.1 237.7 Q345.7 190.5 324.1 170.0" stroke="#d8a878" stroke-width="0.93" stroke-opacity="0.5"/>
<path d="M264.3 229.9 Q274.4 191.6 319.5 172.8" stroke="#f6e2d4" stroke-width="1.00" stroke-opacity="0.5"/>
<path d="M275.2 217.4 Q278.1 185.4 307.3 166.4" stroke="#f6e2d4" stroke-width="1.18" stroke-opacity="0.5"/>
<path d="M304.9 211.4 Q306.4 186.1 321.2 167.6" stroke="#f8e8d8" stroke-width="0.80" stroke-opacity="0.5"/>
<path d="M252.8 225.9 Q262.3 189.0 301.2 169.1" stroke="#e2b898" stroke-width="0.78" stroke-opacity="0.5"/>
<path d="M261.3 226.9 Q269.1 191.1 308.1 172.5" stroke="#daa888" stroke-width="0.85" stroke-opacity="0.5"/>
<path d="M264.5 229.4 Q270.9 191.6 312.4 167.8" stroke="#d8a878" stroke-width="0.65" stroke-opacity="0.5"/>
<path d="M331.3 231.6 Q325.6 189.2 330.4 162.1" stroke="#daa888" stroke-width="0.83" stroke-opacity="0.5"/>
<path d="M332.2 221.5 Q331.8 191.4 327.2 169.7" stroke="#f4dcca" stroke-width="0.91" stroke-opacity="0.5"/>
<path d="M321.0 223.9 Q317.2 187.5 315.7 165.6" stroke="#e6c2a6" stroke-width="0.98" stroke-opacity="0.5"/>
<path d="M293.0 235.8 Q289.3 207.4 302.0 185.5" stroke="#f8e8d8" stroke-width="0.84" stroke-opacity="0.5"/>
<path d="M344.5 218.4 Q340.2 184.8 327.4 163.7" stroke="#e2b898" stroke-width="0.70" stroke-opacity="0.5"/>
<path d="M282.9 215.0 Q286.9 188.7 315.6 165.0" stroke="#e2b898" stroke-width="1.03" stroke-opacity="0.5"/>
<path d="M324.3 215.1 Q322.5 182.8 319.5 166.1" stroke="#f8e8d8" stroke-width="0.92" stroke-opacity="0.5"/>
<path d="M277.9 219.8 Q281.6 187.6 314.4 172.5" stroke="#eccdb4" stroke-width="0.73" stroke-opacity="0.5"/>
<path d="M299.8 245.8 Q298.9 209.0 315.1 180.1" stroke="#daa888" stroke-width="1.02" stroke-opacity="0.5"/>
<path d="M332.5 233.6 Q326.4 200.1 327.5 171.1" stroke="#d8a878" stroke-width="0.70" stroke-opacity="0.5"/>
<path d="M350.3 233.7 Q346.6 187.5 327.9 165.6" stroke="#f4dcca" stroke-width="0.69" stroke-opacity="0.5"/>
<path d="M265.2 230.9 Q267.3 191.1 313.0 167.9" stroke="#f8e8d8" stroke-width="1.15" stroke-opacity="0.5"/>
<path d="M322.7 235.1 Q320.7 196.0 315.9 170.3" stroke="#daa888" stroke-width="0.98" stroke-opacity="0.5"/>
<path d="M259.3 209.2 Q273.5 180.7 307.0 165.9" stroke="#daa888" stroke-width="1.03" stroke-opacity="0.5"/>
<path d="M346.4 222.6 Q342.9 185.3 330.2 164.4" stroke="#f6e2d4" stroke-width="0.85" stroke-opacity="0.5"/>
<path d="M296.0 214.7 Q298.4 187.7 316.8 167.1" stroke="#f8e8d8" stroke-width="1.02" stroke-opacity="0.5"/>
<path d="M264.7 212.0 Q278.5 186.4 308.5 165.5" stroke="#f8e8d8" stroke-width="0.71" stroke-opacity="0.5"/>
<path d="M300.7 221.6 Q304.8 193.3 314.4 177.5" stroke="#e6c2a6" stroke-width="1.19" stroke-opacity="0.5"/>
<path d="M323.5 238.3 Q318.8 205.6 319.6 179.6" stroke="#e6c2a6" stroke-width="1.11" stroke-opacity="0.5"/>
<path d="M356.3 238.2 Q357.0 207.1 339.5 181.0" stroke="#e2b898" stroke-width="1.06" stroke-opacity="0.5"/>
<path d="M302.7 238.9 Q298.8 193.7 322.3 167.2" stroke="#f6e2d4" stroke-width="0.97" stroke-opacity="0.5"/>
<path d="M277.6 223.4 Q283.5 187.6 316.0 171.8" stroke="#daa888" stroke-width="0.70" stroke-opacity="0.5"/>
<path d="M331.1 232.6 Q326.1 192.1 330.0 173.0" stroke="#e2b898" stroke-width="0.75" stroke-opacity="0.5"/>
<path d="M261.8 235.0 Q267.6 191.9 316.1 171.3" stroke="#e2b898" stroke-width="0.92" stroke-opacity="0.5"/>
<path d="M257.2 236.6 Q261.6 196.4 308.2 172.8" stroke="#e6c2a6" stroke-width="0.91" stroke-opacity="0.5"/>
<path d="M294.4 236.1 Q291.6 189.5 316.6 162.4" stroke="#e2b898" stroke-width="0.78" stroke-opacity="0.5"/>
<path d="M351.9 217.3 Q347.0 182.0 329.8 167.2" stroke="#eccdb4" stroke-width="1.01" stroke-opacity="0.5"/>
<path d="M303.8 244.1 Q303.1 204.2 320.8 183.4" stroke="#f4dcca" stroke-width="0.64" stroke-opacity="0.5"/>
<path d="M321.3 211.8 Q316.7 183.1 318.3 161.8" stroke="#f6e2d4" stroke-width="1.09" stroke-opacity="0.5"/>
<path d="M327.7 213.0 Q325.1 184.5 322.6 161.6" stroke="#f8e8d8" stroke-width="1.16" stroke-opacity="0.5"/>
<path d="M258.7 226.0 Q268.4 192.9 307.8 171.8" stroke="#f6e2d4" stroke-width="1.19" stroke-opacity="0.5"/>
<path d="M257.7 206.4 Q270.9 179.9 306.2 162.1" stroke="#f4dcca" stroke-width="1.10" stroke-opacity="0.5"/>
<path d="M326.4 224.0 Q324.9 193.3 325.8 166.5" stroke="#f4dcca" stroke-width="1.19" stroke-opacity="0.5"/>
<path d="M346.7 237.1 Q344.1 192.5 322.8 174.8" stroke="#f4dcca" stroke-width="0.87" stroke-opacity="0.5"/>
<path d="M267.1 212.2 Q280.8 176.0 326.1 157.5" stroke="#f4dcca" stroke-width="0.61" stroke-opacity="0.5"/>
<path d="M352.4 215.1 Q351.0 190.7 339.5 170.2" stroke="#f4dcca" stroke-width="1.11" stroke-opacity="0.5"/>
<path d="M293.9 224.6 Q292.6 197.3 308.2 177.4" stroke="#f4dcca" stroke-width="1.12" stroke-opacity="0.5"/>
<path d="M279.2 221.5 Q287.2 191.1 308.2 172.5" stroke="#f6e2d4" stroke-width="0.75" stroke-opacity="0.5"/>
<path d="M323.3 229.2 Q320.7 188.5 316.8 164.0" stroke="#f4dcca" stroke-width="0.93" stroke-opacity="0.5"/>
<path d="M344.4 212.9 Q341.2 181.5 327.0 169.3" stroke="#eccdb4" stroke-width="1.09" stroke-opacity="0.5"/>
<path d="M356.2 234.0 Q356.6 193.7 333.9 168.9" stroke="#f4dcca" stroke-width="1.06" stroke-opacity="0.5"/>
<path d="M254.5 226.6 Q265.2 189.2 311.1 176.6" stroke="#e6c2a6" stroke-width="0.99" stroke-opacity="0.5"/>
<path d="M277.6 226.5 Q277.9 194.6 310.9 172.8" stroke="#daa888" stroke-width="0.61" stroke-opacity="0.5"/>
<path d="M355.9 231.7 Q349.8 198.7 342.4 182.6" stroke="#eccdb4" stroke-width="0.74" stroke-opacity="0.5"/>
<path d="M353.8 234.5 Q353.4 197.9 339.3 179.5" stroke="#daa888" stroke-width="0.94" stroke-opacity="0.5"/>
<path d="M260.7 225.2 Q269.9 189.5 310.8 173.4" stroke="#f4dcca" stroke-width="0.88" stroke-opacity="0.5"/>
<path d="M300.1 217.5 Q305.7 187.5 316.5 166.4" stroke="#e6c2a6" stroke-width="0.91" stroke-opacity="0.5"/>
<path d="M351.7 210.3 Q347.6 184.4 336.3 167.0" stroke="#e2b898" stroke-width="0.63" stroke-opacity="0.5"/>
<path d="M261.6 218.0 Q270.9 189.4 313.6 170.9" stroke="#e6c2a6" stroke-width="1.15" stroke-opacity="0.5"/>
<path d="M346.2 221.6 Q340.4 192.6 333.3 170.7" stroke="#f6e2d4" stroke-width="0.82" stroke-opacity="0.5"/>
<path d="M258.1 210.3 Q269.8 179.9 309.7 164.6" stroke="#e2b898" stroke-width="1.05" stroke-opacity="0.5"/>
<path d="M264.6 231.0 Q273.7 199.4 302.2 178.1" stroke="#eccdb4" stroke-width="0.93" stroke-opacity="0.5"/>
<path d="M326.7 237.8 Q323.5 202.7 324.6 180.0" stroke="#f8e8d8" stroke-width="1.10" stroke-opacity="0.5"/>
<path d="M261.1 222.9 Q268.8 190.5 317.5 170.3" stroke="#daa888" stroke-width="1.03" stroke-opacity="0.5"/>
<path d="M344.1 238.4 Q344.7 201.5 329.5 177.3" stroke="#daa888" stroke-width="0.96" stroke-opacity="0.5"/>
<path d="M329.6 232.9 Q329.8 198.7 326.5 171.4" stroke="#f6e2d4" stroke-width="1.15" stroke-opacity="0.5"/>
<path d="M283.5 221.9 Q290.9 191.7 316.6 173.7" stroke="#f4dcca" stroke-width="0.95" stroke-opacity="0.5"/>
<path d="M304.9 219.1 Q304.2 190.1 320.1 172.4" stroke="#f4dcca" stroke-width="1.10" stroke-opacity="0.5"/>
<path d="M321.0 230.9 Q316.3 191.6 320.7 165.0" stroke="#eccdb4" stroke-width="1.04" stroke-opacity="0.5"/>
<path d="M275.4 240.2 Q271.4 201.7 308.3 176.5" stroke="#daa888" stroke-width="1.07" stroke-opacity="0.5"/>
<path d="M277.3 237.3 Q248.2 243.2 229.2 274.2" stroke="#d88c40" stroke-width="0.86" stroke-opacity="0.8"/>
<path d="M266.9 252.9 Q244.4 268.7 239.8 308.5" stroke="#5a2a0a" stroke-width="1.02" stroke-opacity="0.8"/>
<path d="M268.2 236.6 Q238.7 233.1 221.0 249.1" stroke="#f0c488" stroke-width="0.91" stroke-opacity="0.8"/>
<path d="M274.6 245.2 Q252.6 258.0 244.9 286.3" stroke="#d08038" stroke-width="0.91" stroke-opacity="0.8"/>
<path d="M295.5 245.6 Q258.4 252.5 244.3 295.2" stroke="#d08038" stroke-width="1.18" stroke-opacity="0.8"/>
<path d="M281.3 233.5 Q237.2 225.5 211.5 249.3" stroke="#b86a28" stroke-width="1.20" stroke-opacity="0.8"/>
<path d="M291.5 241.5 Q258.7 243.0 242.0 271.7" stroke="#f0c488" stroke-width="0.64" stroke-opacity="0.8"/>
<path d="M273.6 247.7 Q252.8 260.2 248.5 291.7" stroke="#c87a34" stroke-width="0.97" stroke-opacity="0.8"/>
<path d="M267.5 233.0 Q242.5 232.1 225.3 248.7" stroke="#c87a34" stroke-width="0.67" stroke-opacity="0.8"/>
<path d="M270.8 239.2 Q243.7 245.7 229.2 275.7" stroke="#6a3410" stroke-width="0.73" stroke-opacity="0.8"/>
<path d="M275.9 235.5 Q240.4 232.6 216.9 245.4" stroke="#b86a28" stroke-width="1.00" stroke-opacity="0.8"/>
<path d="M283.6 239.6 Q255.3 247.5 237.0 277.4" stroke="#c87a34" stroke-width="0.69" stroke-opacity="0.8"/>
<path d="M286.4 238.5 Q257.9 244.0 240.2 273.1" stroke="#d88c40" stroke-width="0.61" stroke-opacity="0.8"/>
<path d="M285.5 234.3 Q248.0 234.7 229.2 272.0" stroke="#c47030" stroke-width="0.96" stroke-opacity="0.8"/>
<path d="M277.2 242.7 Q257.4 251.9 243.6 278.9" stroke="#a85c1c" stroke-width="0.74" stroke-opacity="0.8"/>
<path d="M289.1 234.9 Q257.3 238.3 240.9 268.2" stroke="#7a4018" stroke-width="0.93" stroke-opacity="0.8"/>
<path d="M283.0 236.8 Q251.0 232.7 226.6 248.1" stroke="#f0c488" stroke-width="0.60" stroke-opacity="0.8"/>
<path d="M262.8 235.7 Q240.8 235.3 219.6 250.7" stroke="#7a4018" stroke-width="1.25" stroke-opacity="0.8"/>
<path d="M261.1 252.7 Q246.4 269.8 239.6 300.4" stroke="#5a2a0a" stroke-width="0.88" stroke-opacity="0.8"/>
<path d="M286.3 242.7 Q260.1 248.7 245.7 273.4" stroke="#e09a50" stroke-width="0.63" stroke-opacity="0.8"/>
<path d="M292.6 239.3 Q255.0 242.3 237.1 281.5" stroke="#5a2a0a" stroke-width="1.18" stroke-opacity="0.8"/>
<path d="M263.7 255.0 Q248.7 270.7 239.6 298.4" stroke="#c47030" stroke-width="1.07" stroke-opacity="0.8"/>
<path d="M298.1 242.8 Q255.8 240.1 237.0 273.3" stroke="#e09a50" stroke-width="0.62" stroke-opacity="0.8"/>
<path d="M273.7 249.1 Q255.0 262.4 246.1 295.8" stroke="#7a4018" stroke-width="0.86" stroke-opacity="0.8"/>
<path d="M261.8 252.9 Q244.9 270.0 237.0 303.5" stroke="#d08038" stroke-width="0.98" stroke-opacity="0.8"/>
<path d="M270.0 250.7 Q246.3 266.1 243.1 309.2" stroke="#b06020" stroke-width="1.27" stroke-opacity="0.8"/>
<path d="M272.0 240.6 Q243.5 247.5 232.1 274.4" stroke="#dca060" stroke-width="0.84" stroke-opacity="0.8"/>
<path d="M264.9 252.9 Q245.3 269.5 244.9 301.2" stroke="#b86a28" stroke-width="1.13" stroke-opacity="0.8"/>
<path d="M276.0 251.3 Q251.4 259.3 241.5 290.1" stroke="#e8b070" stroke-width="0.98" stroke-opacity="0.8"/>
<path d="M293.8 233.5 Q261.9 234.0 244.9 259.9" stroke="#f0c488" stroke-width="0.93" stroke-opacity="0.8"/>
<path d="M283.2 241.9 Q249.0 250.1 235.7 289.3" stroke="#c87a34" stroke-width="0.65" stroke-opacity="0.8"/>
<path d="M271.7 247.9 Q250.0 263.6 246.1 297.2" stroke="#dca060" stroke-width="0.62" stroke-opacity="0.8"/>
<path d="M272.3 246.0 Q249.0 260.7 242.1 295.0" stroke="#6a3410" stroke-width="1.08" stroke-opacity="0.8"/>
<path d="M265.6 247.1 Q247.5 259.8 242.6 293.6" stroke="#5a2a0a" stroke-width="1.21" stroke-opacity="0.8"/>
<path d="M272.2 233.8 Q243.2 229.6 221.1 241.7" stroke="#5a2a0a" stroke-width="1.04" stroke-opacity="0.8"/>
<path d="M276.1 244.8 Q250.6 259.2 244.6 294.5" stroke="#d08038" stroke-width="1.29" stroke-opacity="0.8"/>
<path d="M284.7 245.5 Q250.4 252.8 238.6 296.1" stroke="#e09a50" stroke-width="0.63" stroke-opacity="0.8"/>
<path d="M278.4 248.2 Q252.1 259.5 246.8 293.7" stroke="#d08038" stroke-width="0.72" stroke-opacity="0.8"/>
<path d="M274.2 243.5 Q251.4 255.3 240.6 281.5" stroke="#f0c488" stroke-width="0.98" stroke-opacity="0.8"/>
<path d="M291.0 235.0 Q262.2 234.7 246.3 260.2" stroke="#6a3410" stroke-width="1.15" stroke-opacity="0.8"/>
<path d="M297.5 243.0 Q260.0 245.4 243.7 288.5" stroke="#5a2a0a" stroke-width="1.13" stroke-opacity="0.8"/>
<path d="M263.5 235.5 Q239.2 234.9 219.6 248.1" stroke="#f0c488" stroke-width="1.19" stroke-opacity="0.8"/>
<path d="M279.7 247.6 Q254.5 259.7 243.1 291.6" stroke="#c47030" stroke-width="0.85" stroke-opacity="0.8"/>
<path d="M299.3 233.2 Q260.0 228.9 238.8 259.7" stroke="#e09a50" stroke-width="1.18" stroke-opacity="0.8"/>
<path d="M298.7 238.9 Q263.7 238.0 244.7 261.6" stroke="#c87a34" stroke-width="0.89" stroke-opacity="0.8"/>
<path d="M279.5 249.4 Q255.5 257.8 244.1 290.7" stroke="#f0c488" stroke-width="0.79" stroke-opacity="0.8"/>
<path d="M264.7 248.1 Q246.1 262.4 237.8 297.7" stroke="#e8b070" stroke-width="0.80" stroke-opacity="0.8"/>
<path d="M275.4 245.8 Q252.4 260.0 244.9 287.7" stroke="#c87a34" stroke-width="0.96" stroke-opacity="0.8"/>
<path d="M288.0 237.7 Q254.2 240.1 240.7 263.3" stroke="#b86a28" stroke-width="1.21" stroke-opacity="0.8"/>
<path d="M285.2 242.2 Q259.0 247.9 248.4 278.8" stroke="#a85c1c" stroke-width="1.13" stroke-opacity="0.8"/>
<path d="M265.5 237.9 Q237.9 239.3 215.9 251.1" stroke="#d08038" stroke-width="0.98" stroke-opacity="0.8"/>
<path d="M281.9 238.4 Q243.0 232.6 223.4 254.5" stroke="#5a2a0a" stroke-width="1.27" stroke-opacity="0.8"/>
<path d="M291.5 239.9 Q260.1 242.8 241.6 268.8" stroke="#5a2a0a" stroke-width="1.29" stroke-opacity="0.8"/>
<path d="M278.4 249.0 Q258.5 256.8 249.4 287.3" stroke="#e09a50" stroke-width="1.29" stroke-opacity="0.8"/>
<path d="M277.6 244.6 Q251.3 256.6 237.3 290.5" stroke="#d88c40" stroke-width="0.84" stroke-opacity="0.8"/>
<path d="M277.5 249.7 Q254.0 263.1 241.9 296.0" stroke="#dca060" stroke-width="0.76" stroke-opacity="0.8"/>
<path d="M276.9 240.3 Q249.6 245.5 237.7 272.6" stroke="#b06020" stroke-width="0.83" stroke-opacity="0.8"/>
<path d="M275.4 247.1 Q253.1 254.8 246.2 281.4" stroke="#d88c40" stroke-width="0.66" stroke-opacity="0.8"/>
<path d="M285.8 248.2 Q261.3 257.8 248.6 289.1" stroke="#d08038" stroke-width="0.76" stroke-opacity="0.8"/>
<path d="M273.9 243.7 Q244.6 261.1 240.9 304.9" stroke="#dca060" stroke-width="1.13" stroke-opacity="0.8"/>
<path d="M274.4 235.9 Q241.7 232.2 216.6 247.4" stroke="#b06020" stroke-width="0.85" stroke-opacity="0.8"/>
<path d="M272.4 250.6 Q255.9 261.4 245.5 290.6" stroke="#a85c1c" stroke-width="1.28" stroke-opacity="0.8"/>
<path d="M268.4 238.4 Q241.6 237.7 221.9 256.5" stroke="#4a2008" stroke-width="1.07" stroke-opacity="0.8"/>
<path d="M283.4 233.3 Q254.7 229.3 232.2 237.7" stroke="#c87a34" stroke-width="1.02" stroke-opacity="0.8"/>
<path d="M302.5 239.7 Q272.4 236.7 253.1 260.5" stroke="#7a4018" stroke-width="1.16" stroke-opacity="0.8"/>
<path d="M274.0 236.8 Q239.9 232.9 218.0 246.0" stroke="#b86a28" stroke-width="0.74" stroke-opacity="0.8"/>
<path d="M265.9 231.5 Q235.4 229.0 213.6 246.8" stroke="#7a4018" stroke-width="0.67" stroke-opacity="0.8"/>
<path d="M291.3 235.6 Q256.4 232.6 242.2 257.9" stroke="#4a2008" stroke-width="1.18" stroke-opacity="0.8"/>
<path d="M266.0 234.8 Q236.7 236.4 219.2 246.8" stroke="#d08038" stroke-width="1.09" stroke-opacity="0.8"/>
<path d="M292.5 243.9 Q268.8 248.7 253.3 272.4" stroke="#e09a50" stroke-width="0.82" stroke-opacity="0.8"/>
<path d="M283.8 232.9 Q256.6 228.9 233.3 239.5" stroke="#e8b070" stroke-width="1.29" stroke-opacity="0.8"/>
<path d="M282.3 239.7 Q254.4 236.6 235.6 246.7" stroke="#d88c40" stroke-width="0.84" stroke-opacity="0.8"/>
<path d="M260.4 240.6 Q233.9 241.1 214.9 258.8" stroke="#e8b070" stroke-width="0.90" stroke-opacity="0.8"/>
<path d="M276.7 238.7 Q246.6 244.0 234.2 274.0" stroke="#d88c40" stroke-width="0.85" stroke-opacity="0.8"/>
<path d="M268.7 243.0 Q248.5 254.9 239.4 280.4" stroke="#c87a34" stroke-width="1.21" stroke-opacity="0.8"/>
<path d="M265.1 256.2 Q247.6 274.4 242.2 309.6" stroke="#dca060" stroke-width="0.89" stroke-opacity="0.8"/>
<path d="M279.0 239.4 Q256.5 247.7 243.4 277.1" stroke="#c87a34" stroke-width="0.83" stroke-opacity="0.8"/>
<path d="M288.8 233.7 Q252.5 231.6 234.8 264.9" stroke="#b06020" stroke-width="0.73" stroke-opacity="0.8"/>
<path d="M275.9 243.0 Q253.7 252.4 241.7 279.0" stroke="#d08038" stroke-width="0.92" stroke-opacity="0.8"/>
<path d="M266.4 243.8 Q245.8 256.7 240.3 295.7" stroke="#e09a50" stroke-width="1.20" stroke-opacity="0.8"/>
<path d="M276.8 232.1 Q249.4 227.5 228.3 241.5" stroke="#b06020" stroke-width="0.69" stroke-opacity="0.8"/>
<path d="M288.7 239.0 Q253.4 242.6 238.6 281.0" stroke="#c47030" stroke-width="0.97" stroke-opacity="0.8"/>
<path d="M286.3 239.8 Q245.2 244.3 230.1 285.4" stroke="#4a2008" stroke-width="0.67" stroke-opacity="0.8"/>
<path d="M277.7 232.7 Q244.7 229.0 220.4 247.4" stroke="#c87a34" stroke-width="1.29" stroke-opacity="0.8"/>
<path d="M288.1 238.6 Q259.1 243.9 248.0 274.3" stroke="#d08038" stroke-width="1.24" stroke-opacity="0.8"/>
<path d="M303.2 241.9 Q261.6 241.6 239.5 279.5" stroke="#7a4018" stroke-width="0.92" stroke-opacity="0.8"/>
<path d="M287.3 242.9 Q260.8 250.0 244.9 280.1" stroke="#5a2a0a" stroke-width="1.09" stroke-opacity="0.8"/>
<path d="M275.2 249.3 Q251.3 260.1 238.9 291.9" stroke="#6a3410" stroke-width="0.94" stroke-opacity="0.8"/>
<path d="M276.6 244.2 Q249.9 254.0 236.5 288.5" stroke="#6a3410" stroke-width="1.17" stroke-opacity="0.8"/>
<path d="M277.8 242.6 Q249.4 250.4 234.5 291.5" stroke="#4a2008" stroke-width="1.09" stroke-opacity="0.8"/>
<path d="M261.6 235.7 Q233.9 237.5 214.3 254.3" stroke="#a85c1c" stroke-width="0.69" stroke-opacity="0.8"/>
<path d="M282.7 234.2 Q250.5 238.8 232.6 273.4" stroke="#b06020" stroke-width="0.95" stroke-opacity="0.8"/>
<path d="M264.6 243.0 Q242.7 255.8 235.6 291.5" stroke="#6a3410" stroke-width="0.61" stroke-opacity="0.8"/>
<path d="M293.7 240.9 Q258.2 241.1 235.5 267.6" stroke="#e09a50" stroke-width="1.19" stroke-opacity="0.8"/>
<path d="M291.6 245.3 Q264.1 250.0 249.3 273.2" stroke="#6a3410" stroke-width="1.22" stroke-opacity="0.8"/>
<path d="M262.7 238.5 Q236.1 241.1 218.2 251.9" stroke="#7a4018" stroke-width="0.63" stroke-opacity="0.8"/>
<path d="M282.0 241.9 Q247.4 233.6 219.2 254.6" stroke="#c47030" stroke-width="1.15" stroke-opacity="0.8"/>
<path d="M277.8 239.0 Q243.3 234.6 220.3 256.7" stroke="#e09a50" stroke-width="0.80" stroke-opacity="0.8"/>
<path d="M295.1 242.9 Q262.9 246.2 246.4 285.1" stroke="#d08038" stroke-width="0.73" stroke-opacity="0.8"/>
<path d="M281.4 235.6 Q249.5 232.5 227.3 247.4" stroke="#e8b070" stroke-width="1.26" stroke-opacity="0.8"/>
<path d="M279.5 235.1 Q246.1 238.9 229.0 274.0" stroke="#6a3410" stroke-width="0.98" stroke-opacity="0.8"/>
<path d="M298.5 236.7 Q258.6 232.5 241.8 266.1" stroke="#c47030" stroke-width="1.15" stroke-opacity="0.8"/>
<path d="M286.6 241.7 Q253.3 245.0 236.6 269.1" stroke="#6a3410" stroke-width="1.14" stroke-opacity="0.8"/>
<path d="M273.2 248.7 Q250.2 264.8 244.5 297.1" stroke="#e09a50" stroke-width="1.21" stroke-opacity="0.8"/>
<path d="M297.0 239.9 Q265.4 236.8 247.4 258.2" stroke="#b86a28" stroke-width="0.79" stroke-opacity="0.8"/>
<path d="M278.8 236.6 Q248.4 233.2 229.8 240.4" stroke="#d88c40" stroke-width="0.86" stroke-opacity="0.8"/>
<path d="M272.1 241.7 Q245.3 249.1 231.4 279.2" stroke="#4a2008" stroke-width="1.19" stroke-opacity="0.8"/>
<path d="M281.0 240.6 Q249.3 245.9 234.1 283.3" stroke="#4a2008" stroke-width="1.21" stroke-opacity="0.8"/>
<path d="M261.4 232.6 Q235.8 234.9 216.8 243.0" stroke="#4a2008" stroke-width="0.99" stroke-opacity="0.8"/>
<path d="M290.2 242.3 Q263.7 245.7 251.8 264.3" stroke="#c87a34" stroke-width="1.30" stroke-opacity="0.8"/>
<path d="M348.2 254.0 Q381.5 262.6 398.8 304.8" stroke="#e09a50" stroke-width="1.29" stroke-opacity="0.85"/>
<path d="M326.9 242.4 Q375.7 246.3 403.0 296.5" stroke="#7a4018" stroke-width="1.19" stroke-opacity="0.85"/>
<path d="M352.4 249.1 Q389.2 270.4 410.7 336.2" stroke="#d08038" stroke-width="1.00" stroke-opacity="0.85"/>
<path d="M345.3 263.3 Q379.7 282.0 386.4 341.3" stroke="#c47030" stroke-width="1.34" stroke-opacity="0.85"/>
<path d="M349.3 262.8 Q370.5 282.4 382.2 318.2" stroke="#b86a28" stroke-width="1.27" stroke-opacity="0.85"/>
<path d="M320.1 232.8 Q352.8 227.1 399.4 249.1" stroke="#e09a50" stroke-width="0.81" stroke-opacity="0.85"/>
<path d="M329.4 241.4 Q391.4 243.4 420.2 306.2" stroke="#f0c488" stroke-width="0.73" stroke-opacity="0.85"/>
<path d="M316.6 238.1 Q349.1 231.0 382.2 245.2" stroke="#d88c40" stroke-width="1.26" stroke-opacity="0.85"/>
<path d="M321.0 239.9 Q355.9 231.8 395.5 251.3" stroke="#c87a34" stroke-width="0.67" stroke-opacity="0.85"/>
<path d="M346.6 253.8 Q375.7 269.3 396.3 321.0" stroke="#d88c40" stroke-width="0.71" stroke-opacity="0.85"/>
<path d="M359.7 282.6 Q377.0 302.0 385.8 345.8" stroke="#f0c488" stroke-width="0.81" stroke-opacity="0.85"/>
<path d="M355.0 270.9 Q375.6 289.9 384.0 330.2" stroke="#d88c40" stroke-width="0.90" stroke-opacity="0.85"/>
<path d="M354.0 254.4 Q385.9 269.2 402.0 309.8" stroke="#a85c1c" stroke-width="0.67" stroke-opacity="0.85"/>
<path d="M340.4 235.0 Q373.6 231.7 427.2 260.4" stroke="#5a2a0a" stroke-width="0.86" stroke-opacity="0.85"/>
<path d="M326.9 239.4 Q352.2 231.7 393.8 246.2" stroke="#d88c40" stroke-width="0.64" stroke-opacity="0.85"/>
<path d="M346.7 264.4 Q372.2 280.8 387.7 330.5" stroke="#dca060" stroke-width="1.20" stroke-opacity="0.85"/>
<path d="M315.1 235.6 Q343.7 228.6 382.6 243.7" stroke="#dca060" stroke-width="1.07" stroke-opacity="0.85"/>
<path d="M352.3 277.4 Q376.1 299.6 377.7 347.2" stroke="#b86a28" stroke-width="1.13" stroke-opacity="0.85"/>
<path d="M350.8 266.8 Q372.6 288.2 380.2 328.5" stroke="#6a3410" stroke-width="1.05" stroke-opacity="0.85"/>
<path d="M325.7 236.8 Q356.1 233.5 398.3 253.6" stroke="#5a2a0a" stroke-width="0.62" stroke-opacity="0.85"/>
<path d="M354.5 264.7 Q376.3 286.9 390.0 339.3" stroke="#dca060" stroke-width="1.05" stroke-opacity="0.85"/>
<path d="M358.2 251.2 Q393.7 267.1 408.2 324.5" stroke="#a85c1c" stroke-width="1.13" stroke-opacity="0.85"/>
<path d="M354.9 258.0 Q379.5 280.0 397.8 321.4" stroke="#c87a34" stroke-width="1.04" stroke-opacity="0.85"/>
<path d="M348.5 254.1 Q383.1 264.2 399.8 314.0" stroke="#b06020" stroke-width="1.18" stroke-opacity="0.85"/>
<path d="M351.3 268.0 Q381.9 290.9 388.5 343.3" stroke="#d88c40" stroke-width="1.09" stroke-opacity="0.85"/>
<path d="M354.2 253.0 Q382.3 270.8 401.0 329.7" stroke="#5a2a0a" stroke-width="1.16" stroke-opacity="0.85"/>
<path d="M344.2 263.0 Q375.5 285.8 385.7 336.8" stroke="#d08038" stroke-width="1.25" stroke-opacity="0.85"/>
<path d="M342.3 268.0 Q366.7 287.1 377.6 331.4" stroke="#c47030" stroke-width="0.61" stroke-opacity="0.85"/>
<path d="M348.3 244.4 Q384.6 259.6 404.7 309.1" stroke="#e09a50" stroke-width="0.98" stroke-opacity="0.85"/>
<path d="M335.1 241.3 Q365.8 236.2 401.2 258.6" stroke="#e8b070" stroke-width="0.70" stroke-opacity="0.85"/>
<path d="M362.1 253.8 Q389.4 274.1 408.2 324.4" stroke="#b06020" stroke-width="0.65" stroke-opacity="0.85"/>
<path d="M338.7 251.0 Q381.6 261.3 404.7 328.2" stroke="#e8b070" stroke-width="0.93" stroke-opacity="0.85"/>
<path d="M341.2 265.0 Q364.2 283.5 374.9 328.5" stroke="#7a4018" stroke-width="0.77" stroke-opacity="0.85"/>
<path d="M334.1 243.3 Q374.1 249.7 390.4 299.5" stroke="#f0c488" stroke-width="1.26" stroke-opacity="0.85"/>
<path d="M332.6 236.1 Q392.2 241.5 411.7 315.6" stroke="#b06020" stroke-width="1.22" stroke-opacity="0.85"/>
<path d="M345.7 269.0 Q372.5 293.3 380.6 344.0" stroke="#b06020" stroke-width="1.25" stroke-opacity="0.85"/>
<path d="M345.2 252.1 Q378.1 270.3 397.3 318.2" stroke="#c87a34" stroke-width="0.81" stroke-opacity="0.85"/>
<path d="M331.9 232.3 Q366.9 227.4 421.0 251.1" stroke="#e09a50" stroke-width="0.86" stroke-opacity="0.85"/>
<path d="M322.8 240.4 Q355.0 232.9 392.2 255.8" stroke="#c87a34" stroke-width="0.83" stroke-opacity="0.85"/>
<path d="M327.3 230.8 Q361.3 229.4 415.1 253.1" stroke="#f0c488" stroke-width="0.87" stroke-opacity="0.85"/>
<path d="M361.8 273.1 Q377.5 290.8 391.0 326.0" stroke="#c47030" stroke-width="0.66" stroke-opacity="0.85"/>
<path d="M318.8 235.3 Q350.8 224.8 405.3 248.4" stroke="#6a3410" stroke-width="1.22" stroke-opacity="0.85"/>
<path d="M344.1 248.6 Q382.8 267.7 402.8 338.5" stroke="#a85c1c" stroke-width="1.19" stroke-opacity="0.85"/>
<path d="M336.0 235.2 Q375.5 231.2 420.0 254.7" stroke="#e8b070" stroke-width="0.70" stroke-opacity="0.85"/>
<path d="M322.6 245.5 Q388.3 246.0 410.1 325.4" stroke="#f0c488" stroke-width="0.74" stroke-opacity="0.85"/>
<path d="M324.9 243.1 Q376.2 245.8 403.1 305.6" stroke="#d88c40" stroke-width="0.66" stroke-opacity="0.85"/>
<path d="M312.2 234.9 Q343.3 227.7 382.9 240.8" stroke="#5a2a0a" stroke-width="0.77" stroke-opacity="0.85"/>
<path d="M354.8 269.0 Q374.5 288.6 387.1 333.9" stroke="#4a2008" stroke-width="1.37" stroke-opacity="0.85"/>
<path d="M327.7 241.1 Q371.5 239.6 399.3 271.6" stroke="#5a2a0a" stroke-width="1.37" stroke-opacity="0.85"/>
<path d="M319.7 241.3 Q356.2 230.5 399.3 255.3" stroke="#7a4018" stroke-width="1.11" stroke-opacity="0.85"/>
<path d="M340.3 269.6 Q360.0 284.7 375.1 320.0" stroke="#e09a50" stroke-width="1.39" stroke-opacity="0.85"/>
<path d="M340.6 237.2 Q374.8 240.4 407.3 257.4" stroke="#dca060" stroke-width="0.66" stroke-opacity="0.85"/>
<path d="M353.0 274.6 Q373.9 292.5 380.8 330.2" stroke="#5a2a0a" stroke-width="0.97" stroke-opacity="0.85"/>
<path d="M317.4 243.6 Q351.5 235.4 389.6 252.3" stroke="#b86a28" stroke-width="0.96" stroke-opacity="0.85"/>
<path d="M350.5 254.3 Q380.5 267.3 399.7 316.4" stroke="#5a2a0a" stroke-width="0.98" stroke-opacity="0.85"/>
<path d="M334.5 246.1 Q385.9 255.0 410.0 301.0" stroke="#d88c40" stroke-width="0.76" stroke-opacity="0.85"/>
<path d="M340.7 250.2 Q374.5 265.4 391.0 313.3" stroke="#a85c1c" stroke-width="1.33" stroke-opacity="0.85"/>
<path d="M329.3 231.6 Q357.4 225.3 397.0 244.9" stroke="#b86a28" stroke-width="1.35" stroke-opacity="0.85"/>
<path d="M342.2 246.2 Q386.7 257.5 411.0 305.5" stroke="#dca060" stroke-width="0.75" stroke-opacity="0.85"/>
<path d="M350.8 238.8 Q390.9 252.8 411.6 314.3" stroke="#4a2008" stroke-width="0.81" stroke-opacity="0.85"/>
<path d="M349.8 245.9 Q394.0 254.8 412.8 305.9" stroke="#b06020" stroke-width="1.04" stroke-opacity="0.85"/>
<path d="M347.3 269.3 Q371.6 287.5 379.3 337.3" stroke="#b06020" stroke-width="1.21" stroke-opacity="0.85"/>
<path d="M327.3 232.2 Q361.3 230.2 402.2 247.5" stroke="#dca060" stroke-width="0.62" stroke-opacity="0.85"/>
<path d="M337.8 229.9 Q372.3 228.4 425.8 259.1" stroke="#7a4018" stroke-width="1.18" stroke-opacity="0.85"/>
<path d="M345.4 267.8 Q378.4 287.1 383.5 345.3" stroke="#e8b070" stroke-width="0.96" stroke-opacity="0.85"/>
<path d="M345.8 273.4 Q362.6 294.0 374.7 329.1" stroke="#c47030" stroke-width="0.68" stroke-opacity="0.85"/>
<path d="M350.0 270.2 Q368.5 293.0 374.9 330.1" stroke="#7a4018" stroke-width="0.98" stroke-opacity="0.85"/>
<path d="M329.3 243.2 Q362.1 250.4 382.5 286.1" stroke="#d08038" stroke-width="0.74" stroke-opacity="0.85"/>
<path d="M337.2 237.7 Q368.0 238.7 409.1 257.4" stroke="#b86a28" stroke-width="1.28" stroke-opacity="0.85"/>
<path d="M341.2 245.3 Q385.2 252.4 414.7 304.5" stroke="#6a3410" stroke-width="1.31" stroke-opacity="0.85"/>
<path d="M341.5 240.3 Q384.6 248.6 402.8 291.7" stroke="#c87a34" stroke-width="0.78" stroke-opacity="0.85"/>
<path d="M358.7 239.6 Q395.5 252.3 412.7 296.8" stroke="#b06020" stroke-width="1.19" stroke-opacity="0.85"/>
<path d="M346.9 244.1 Q387.4 255.2 415.6 302.6" stroke="#6a3410" stroke-width="0.82" stroke-opacity="0.85"/>
<path d="M350.8 255.4 Q382.5 270.7 400.0 323.1" stroke="#b86a28" stroke-width="0.61" stroke-opacity="0.85"/>
<path d="M344.3 264.8 Q372.4 285.8 383.1 332.2" stroke="#a85c1c" stroke-width="1.27" stroke-opacity="0.85"/>
<path d="M351.2 266.1 Q369.8 290.0 379.8 334.2" stroke="#c87a34" stroke-width="0.67" stroke-opacity="0.85"/>
<path d="M318.0 239.3 Q364.6 237.5 392.4 277.4" stroke="#d88c40" stroke-width="1.10" stroke-opacity="0.85"/>
<path d="M344.6 249.2 Q378.0 263.6 392.4 318.8" stroke="#c87a34" stroke-width="1.37" stroke-opacity="0.85"/>
<path d="M329.1 242.0 Q377.7 249.2 400.0 324.8" stroke="#b06020" stroke-width="0.91" stroke-opacity="0.85"/>
<path d="M347.0 267.2 Q367.2 282.3 375.8 325.6" stroke="#d08038" stroke-width="0.98" stroke-opacity="0.85"/>
<path d="M349.6 262.8 Q379.4 284.1 383.6 332.6" stroke="#b06020" stroke-width="0.92" stroke-opacity="0.85"/>
<path d="M352.7 257.1 Q387.7 272.9 403.8 320.6" stroke="#f0c488" stroke-width="0.67" stroke-opacity="0.85"/>
<path d="M330.1 246.3 Q373.4 260.6 393.8 316.3" stroke="#7a4018" stroke-width="0.64" stroke-opacity="0.85"/>
<path d="M356.2 254.2 Q385.6 275.2 404.7 330.0" stroke="#6a3410" stroke-width="0.74" stroke-opacity="0.85"/>
<path d="M320.0 234.4 Q362.4 227.0 413.8 259.1" stroke="#c87a34" stroke-width="0.68" stroke-opacity="0.85"/>
<path d="M343.3 233.4 Q383.4 232.0 425.3 258.3" stroke="#d88c40" stroke-width="0.70" stroke-opacity="0.85"/>
<path d="M337.2 237.5 Q389.4 238.2 409.7 292.1" stroke="#c47030" stroke-width="0.81" stroke-opacity="0.85"/>
<path d="M337.8 240.1 Q373.1 251.0 395.0 291.9" stroke="#c87a34" stroke-width="0.94" stroke-opacity="0.85"/>
<path d="M324.6 238.4 Q361.2 229.5 421.9 259.7" stroke="#b06020" stroke-width="0.82" stroke-opacity="0.85"/>
<path d="M347.5 265.7 Q373.8 278.5 383.2 313.5" stroke="#4a2008" stroke-width="1.28" stroke-opacity="0.85"/>
<path d="M360.9 280.0 Q381.7 300.5 387.8 334.9" stroke="#b86a28" stroke-width="1.33" stroke-opacity="0.85"/>
<path d="M333.6 231.0 Q372.4 228.8 424.6 256.4" stroke="#c47030" stroke-width="1.15" stroke-opacity="0.85"/>
<path d="M343.1 234.3 Q381.1 231.9 429.0 265.0" stroke="#dca060" stroke-width="0.84" stroke-opacity="0.85"/>
<path d="M328.0 235.4 Q362.8 232.0 414.1 258.7" stroke="#b06020" stroke-width="0.99" stroke-opacity="0.85"/>
<path d="M352.3 263.2 Q380.0 281.8 389.0 336.5" stroke="#dca060" stroke-width="1.32" stroke-opacity="0.85"/>
<path d="M324.2 244.3 Q364.4 235.9 413.9 269.3" stroke="#b86a28" stroke-width="0.86" stroke-opacity="0.85"/>
<path d="M345.8 240.8 Q391.1 252.8 410.8 296.1" stroke="#b86a28" stroke-width="1.27" stroke-opacity="0.85"/>
<path d="M352.6 266.1 Q373.4 282.6 383.6 317.3" stroke="#f0c488" stroke-width="0.99" stroke-opacity="0.85"/>
<path d="M346.3 246.3 Q384.3 268.0 404.1 331.9" stroke="#a85c1c" stroke-width="0.89" stroke-opacity="0.85"/>
<path d="M340.1 258.9 Q365.2 279.0 378.7 320.3" stroke="#6a3410" stroke-width="0.81" stroke-opacity="0.85"/>
<path d="M356.3 260.4 Q392.0 278.8 403.6 343.8" stroke="#c47030" stroke-width="0.70" stroke-opacity="0.85"/>
<path d="M317.0 237.7 Q352.9 226.9 394.9 252.8" stroke="#b86a28" stroke-width="0.82" stroke-opacity="0.85"/>
<path d="M321.7 235.9 Q385.5 232.6 416.3 305.7" stroke="#e09a50" stroke-width="0.64" stroke-opacity="0.85"/>
<path d="M336.4 251.7 Q374.5 261.6 393.4 301.3" stroke="#c47030" stroke-width="1.19" stroke-opacity="0.85"/>
<path d="M330.5 245.8 Q385.6 253.7 408.3 312.2" stroke="#4a2008" stroke-width="1.36" stroke-opacity="0.85"/>
<path d="M343.6 270.4 Q364.3 286.1 380.6 322.3" stroke="#b86a28" stroke-width="1.36" stroke-opacity="0.85"/>
<path d="M358.6 247.7 Q402.2 261.3 420.3 320.8" stroke="#6a3410" stroke-width="1.24" stroke-opacity="0.85"/>
<path d="M348.3 259.8 Q375.9 277.5 383.7 332.5" stroke="#5a2a0a" stroke-width="0.79" stroke-opacity="0.85"/>
<path d="M354.3 270.6 Q377.1 293.6 390.3 339.2" stroke="#b06020" stroke-width="0.78" stroke-opacity="0.85"/>
<path d="M339.1 255.2 Q373.5 268.3 397.2 317.7" stroke="#c47030" stroke-width="0.62" stroke-opacity="0.85"/>
<path d="M351.3 248.3 Q391.6 258.3 415.6 305.1" stroke="#6a3410" stroke-width="1.36" stroke-opacity="0.85"/>
<path d="M334.6 237.2 Q362.9 233.5 401.9 259.4" stroke="#d08038" stroke-width="1.23" stroke-opacity="0.85"/>
<path d="M340.8 235.9 Q371.0 234.4 413.5 261.4" stroke="#4a2008" stroke-width="0.76" stroke-opacity="0.85"/>
<path d="M362.4 269.9 Q379.4 286.8 391.4 327.6" stroke="#b86a28" stroke-width="1.39" stroke-opacity="0.85"/>
<path d="M335.6 242.0 Q385.9 255.9 404.5 331.3" stroke="#a85c1c" stroke-width="0.98" stroke-opacity="0.85"/>
<path d="M334.4 242.3 Q364.6 239.1 409.6 260.1" stroke="#f0c488" stroke-width="0.61" stroke-opacity="0.85"/>
<path d="M334.4 241.4 Q368.1 240.1 404.0 260.6" stroke="#4a2008" stroke-width="1.36" stroke-opacity="0.85"/>
<path d="M352.0 266.0 Q378.7 284.6 384.8 337.8" stroke="#e09a50" stroke-width="0.70" stroke-opacity="0.85"/>
<path d="M341.3 239.7 Q377.1 242.2 422.6 263.4" stroke="#c87a34" stroke-width="1.33" stroke-opacity="0.85"/>
<path d="M352.7 256.6 Q380.2 268.0 399.8 311.1" stroke="#b86a28" stroke-width="0.95" stroke-opacity="0.85"/>
<path d="M359.9 246.6 Q401.0 260.1 417.6 317.6" stroke="#e8b070" stroke-width="1.18" stroke-opacity="0.85"/>
<path d="M336.7 247.1 Q381.9 262.3 400.6 337.2" stroke="#6a3410" stroke-width="0.80" stroke-opacity="0.85"/>
<path d="M345.1 229.5 Q381.0 231.3 418.0 254.4" stroke="#f0c488" stroke-width="1.15" stroke-opacity="0.85"/>
<path d="M348.4 246.3 Q389.1 252.9 408.6 296.7" stroke="#d08038" stroke-width="0.87" stroke-opacity="0.85"/>
<path d="M339.5 238.4 Q373.1 235.3 420.8 265.0" stroke="#c87a34" stroke-width="1.34" stroke-opacity="0.85"/>
<path d="M338.7 240.8 Q368.6 235.4 416.5 262.8" stroke="#f0c488" stroke-width="0.63" stroke-opacity="0.85"/>
<path d="M357.0 260.8 Q381.6 281.0 396.2 327.5" stroke="#c47030" stroke-width="1.34" stroke-opacity="0.85"/>
<path d="M339.3 230.3 Q369.4 230.9 415.6 249.6" stroke="#b86a28" stroke-width="1.06" stroke-opacity="0.85"/>
<path d="M339.4 242.3 Q371.2 239.6 405.2 257.0" stroke="#b06020" stroke-width="0.70" stroke-opacity="0.85"/>
<path d="M346.0 241.3 Q383.4 252.1 409.6 293.4" stroke="#f0c488" stroke-width="1.01" stroke-opacity="0.85"/>
<path d="M338.9 242.3 Q374.5 251.3 399.5 291.5" stroke="#c47030" stroke-width="0.71" stroke-opacity="0.85"/>
<path d="M316.7 244.4 Q374.8 240.0 404.1 300.8" stroke="#b06020" stroke-width="0.61" stroke-opacity="0.85"/>
<path d="M353.9 270.5 Q375.6 287.7 381.6 332.2" stroke="#b06020" stroke-width="1.02" stroke-opacity="0.85"/>
<path d="M345.7 254.1 Q380.9 269.9 404.1 323.6" stroke="#a85c1c" stroke-width="1.28" stroke-opacity="0.85"/>
<path d="M327.7 237.2 Q357.5 229.8 398.4 248.1" stroke="#e8b070" stroke-width="0.78" stroke-opacity="0.85"/>
<path d="M351.2 263.6 Q370.3 282.8 377.6 320.1" stroke="#b06020" stroke-width="1.05" stroke-opacity="0.85"/>
<path d="M320.9 242.9 Q357.9 235.5 418.0 271.2" stroke="#c87a34" stroke-width="0.62" stroke-opacity="0.85"/>
<path d="M324.9 241.0 Q362.6 232.1 415.8 257.1" stroke="#f0c488" stroke-width="0.74" stroke-opacity="0.85"/>
<path d="M333.3 234.9 Q384.7 242.2 406.5 287.2" stroke="#b86a28" stroke-width="0.61" stroke-opacity="0.85"/>
<path d="M357.3 251.3 Q391.4 265.3 406.3 315.2" stroke="#a85c1c" stroke-width="1.00" stroke-opacity="0.85"/>
<path d="M335.0 247.3 Q377.1 256.4 399.2 321.8" stroke="#dca060" stroke-width="1.00" stroke-opacity="0.85"/>
<path d="M341.8 249.0 Q389.1 263.5 406.6 334.8" stroke="#dca060" stroke-width="0.73" stroke-opacity="0.85"/>
<path d="M332.3 254.1 Q373.3 264.6 391.5 310.9" stroke="#e09a50" stroke-width="0.94" stroke-opacity="0.85"/>
<path d="M345.9 274.4 Q361.7 294.7 376.7 328.6" stroke="#c87a34" stroke-width="1.37" stroke-opacity="0.85"/>
<path d="M340.8 239.8 Q370.7 240.0 412.9 263.4" stroke="#dca060" stroke-width="0.66" stroke-opacity="0.85"/>
<path d="M337.0 250.6 Q383.6 263.3 398.1 332.0" stroke="#e09a50" stroke-width="0.91" stroke-opacity="0.85"/>
<path d="M359.8 279.1 Q384.1 299.9 390.8 347.0" stroke="#f0c488" stroke-width="1.08" stroke-opacity="0.85"/>
<path d="M340.0 240.1 Q371.0 239.3 408.0 256.6" stroke="#dca060" stroke-width="1.30" stroke-opacity="0.85"/>
<path d="M355.3 238.1 Q400.1 255.2 419.4 313.6" stroke="#7a4018" stroke-width="0.91" stroke-opacity="0.85"/>
<path d="M353.6 239.3 Q396.8 246.8 420.0 302.9" stroke="#4a2008" stroke-width="1.05" stroke-opacity="0.85"/>
<path d="M340.2 240.5 Q387.6 249.1 403.8 319.9" stroke="#e8b070" stroke-width="0.84" stroke-opacity="0.85"/>
<path d="M358.5 263.1 Q384.7 281.8 401.4 329.0" stroke="#b86a28" stroke-width="0.75" stroke-opacity="0.85"/>
<path d="M324.4 233.4 Q356.4 224.5 395.8 239.1" stroke="#dca060" stroke-width="0.67" stroke-opacity="0.85"/>
<path d="M329.9 237.2 Q369.1 229.0 426.5 266.5" stroke="#4a2008" stroke-width="1.01" stroke-opacity="0.85"/>
<path d="M351.7 264.9 Q372.6 280.4 378.4 322.7" stroke="#f0c488" stroke-width="0.94" stroke-opacity="0.85"/>
<path d="M355.9 265.4 Q376.5 286.3 383.2 321.8" stroke="#b06020" stroke-width="0.99" stroke-opacity="0.85"/>
<path d="M325.9 233.1 Q384.1 236.3 407.4 284.5" stroke="#c47030" stroke-width="1.12" stroke-opacity="0.85"/>
<path d="M326.9 250.7 Q360.8 260.2 384.2 295.8" stroke="#dca060" stroke-width="0.91" stroke-opacity="0.85"/>
<path d="M347.6 259.2 Q381.1 274.8 393.1 333.5" stroke="#d88c40" stroke-width="1.11" stroke-opacity="0.85"/>
<path d="M349.4 261.7 Q374.5 282.1 382.0 320.0" stroke="#b86a28" stroke-width="0.61" stroke-opacity="0.85"/>
<path d="M330.1 238.4 Q368.8 235.9 423.1 267.7" stroke="#f0c488" stroke-width="0.85" stroke-opacity="0.85"/>
<path d="M349.8 268.6 Q374.9 284.5 387.8 331.9" stroke="#d88c40" stroke-width="0.61" stroke-opacity="0.85"/>
<path d="M334.1 244.1 Q371.9 256.8 394.7 310.1" stroke="#4a2008" stroke-width="0.94" stroke-opacity="0.85"/>
<path d="M322.8 245.1 Q357.6 234.9 404.2 254.8" stroke="#6a3410" stroke-width="0.97" stroke-opacity="0.85"/>
<path d="M352.6 273.7 Q370.4 288.9 385.0 325.6" stroke="#5a2a0a" stroke-width="0.81" stroke-opacity="0.85"/>
<path d="M328.4 239.4 Q370.0 228.2 426.6 263.1" stroke="#c47030" stroke-width="0.60" stroke-opacity="0.85"/>
<path d="M351.8 261.4 Q374.2 278.4 381.7 312.6" stroke="#e8b070" stroke-width="1.03" stroke-opacity="0.85"/>
<path d="M340.2 238.7 Q394.2 248.9 416.7 310.5" stroke="#a85c1c" stroke-width="0.94" stroke-opacity="0.85"/>
<path d="M342.4 243.5 Q381.6 250.4 400.2 294.9" stroke="#a85c1c" stroke-width="0.93" stroke-opacity="0.85"/>
<path d="M339.3 239.6 Q388.1 243.1 405.9 288.7" stroke="#b86a28" stroke-width="1.29" stroke-opacity="0.85"/>
<path d="M336.4 267.0 Q363.2 284.8 371.9 324.1" stroke="#6a3410" stroke-width="0.85" stroke-opacity="0.85"/>
<path d="M333.2 243.4 Q376.8 248.5 397.4 305.9" stroke="#6a3410" stroke-width="1.23" stroke-opacity="0.85"/>
<path d="M352.1 251.6 Q380.6 271.0 397.5 324.6" stroke="#5a2a0a" stroke-width="0.90" stroke-opacity="0.85"/>
<path d="M339.5 237.2 Q371.2 238.3 413.1 257.5" stroke="#c87a34" stroke-width="0.73" stroke-opacity="0.85"/>
<path d="M348.6 231.2 Q381.0 231.1 423.7 252.3" stroke="#f0c488" stroke-width="0.97" stroke-opacity="0.85"/>
<path d="M359.2 239.1 Q400.4 250.5 419.3 301.5" stroke="#5a2a0a" stroke-width="1.32" stroke-opacity="0.85"/>
<path d="M319.6 242.7 Q349.3 231.8 389.8 254.4" stroke="#f0c488" stroke-width="0.84" stroke-opacity="0.85"/>
<path d="M336.1 249.4 Q375.6 260.7 395.2 304.4" stroke="#d88c40" stroke-width="0.83" stroke-opacity="0.85"/>
<path d="M355.5 260.2 Q391.8 276.7 406.3 333.8" stroke="#f0c488" stroke-width="1.22" stroke-opacity="0.85"/>
<path d="M326.2 239.6 Q380.5 243.8 407.8 301.7" stroke="#a85c1c" stroke-width="0.85" stroke-opacity="0.85"/>
<path d="M343.8 262.8 Q362.7 279.2 374.4 315.2" stroke="#a85c1c" stroke-width="1.22" stroke-opacity="0.85"/>
<path d="M343.9 246.3 Q392.2 255.5 412.4 313.6" stroke="#dca060" stroke-width="0.86" stroke-opacity="0.85"/>
<path d="M334.9 244.9 Q372.7 253.6 397.8 308.7" stroke="#f0c488" stroke-width="1.30" stroke-opacity="0.85"/>
<path d="M346.5 240.6 Q395.7 253.7 415.3 315.8" stroke="#e09a50" stroke-width="0.72" stroke-opacity="0.85"/>
<path d="M338.6 245.1 Q377.4 257.7 394.6 321.5" stroke="#e09a50" stroke-width="1.19" stroke-opacity="0.85"/>
<path d="M361.8 263.9 Q391.1 282.0 404.2 330.2" stroke="#e09a50" stroke-width="1.32" stroke-opacity="0.85"/>
<path d="M328.2 238.0 Q379.3 246.9 405.6 301.5" stroke="#5a2a0a" stroke-width="0.88" stroke-opacity="0.85"/>
<path d="M338.6 244.6 Q381.5 259.5 400.1 326.9" stroke="#dca060" stroke-width="1.19" stroke-opacity="0.85"/>
<path d="M362.7 241.5 Q402.8 259.3 419.9 315.9" stroke="#e8b070" stroke-width="1.30" stroke-opacity="0.85"/>
<path d="M360.8 280.7 Q381.5 298.3 385.7 342.1" stroke="#e8b070" stroke-width="1.05" stroke-opacity="0.85"/>
<path d="M343.0 239.0 Q388.3 243.2 410.0 291.1" stroke="#a85c1c" stroke-width="0.67" stroke-opacity="0.85"/>
<path d="M340.7 240.1 Q371.3 243.2 412.9 265.5" stroke="#4a2008" stroke-width="0.87" stroke-opacity="0.85"/>
<path d="M329.3 241.5 Q361.2 235.5 400.2 254.6" stroke="#6a3410" stroke-width="0.67" stroke-opacity="0.85"/>
<path d="M319.4 243.2 Q349.6 235.5 391.6 250.9" stroke="#e09a50" stroke-width="1.16" stroke-opacity="0.85"/>
<path d="M344.5 238.5 Q386.6 251.0 411.1 298.1" stroke="#d88c40" stroke-width="1.17" stroke-opacity="0.85"/>
<path d="M351.0 279.0 Q366.1 297.7 378.2 330.6" stroke="#e09a50" stroke-width="0.93" stroke-opacity="0.85"/>
<path d="M354.9 275.7 Q375.0 295.3 379.8 331.2" stroke="#d88c40" stroke-width="1.24" stroke-opacity="0.85"/>
<path d="M356.2 265.9 Q374.3 282.0 384.4 329.4" stroke="#d08038" stroke-width="1.00" stroke-opacity="0.85"/>
<path d="M320.3 231.9 Q354.2 226.0 397.1 245.3" stroke="#e8b070" stroke-width="0.75" stroke-opacity="0.85"/>
<path d="M316.4 236.6 Q355.3 221.2 419.5 256.8" stroke="#b06020" stroke-width="1.06" stroke-opacity="0.85"/>
<path d="M362.7 276.0 Q382.3 297.8 392.7 344.7" stroke="#d08038" stroke-width="0.85" stroke-opacity="0.85"/>
<path d="M323.3 242.7 Q362.3 234.8 414.9 263.1" stroke="#b86a28" stroke-width="1.37" stroke-opacity="0.85"/>
<path d="M357.3 274.4 Q374.2 293.7 389.3 335.5" stroke="#d88c40" stroke-width="0.84" stroke-opacity="0.85"/>
<path d="M335.9 250.7 Q373.1 256.6 391.9 291.5" stroke="#b06020" stroke-width="0.93" stroke-opacity="0.85"/>
<path d="M316.0 233.9 Q345.6 225.9 395.2 247.7" stroke="#f0c488" stroke-width="0.90" stroke-opacity="0.85"/>
<path d="M328.6 233.9 Q366.0 229.4 412.7 254.7" stroke="#c47030" stroke-width="1.21" stroke-opacity="0.85"/>
<path d="M360.8 254.2 Q387.8 274.2 404.9 322.1" stroke="#5a2a0a" stroke-width="1.05" stroke-opacity="0.85"/>
<path d="M352.0 253.2 Q386.1 268.1 401.9 328.9" stroke="#e09a50" stroke-width="0.81" stroke-opacity="0.85"/>
<path d="M345.1 258.7 Q368.4 272.1 385.5 312.7" stroke="#b86a28" stroke-width="1.31" stroke-opacity="0.85"/>
<path d="M321.5 234.0 Q369.0 233.2 395.5 272.5" stroke="#e8b070" stroke-width="0.79" stroke-opacity="0.85"/>
<path d="M337.3 250.5 Q378.3 257.1 396.5 310.3" stroke="#5a2a0a" stroke-width="1.34" stroke-opacity="0.85"/>
<path d="M347.0 267.4 Q364.8 279.6 380.7 315.5" stroke="#5a2a0a" stroke-width="1.02" stroke-opacity="0.85"/>
<path d="M340.1 265.0 Q369.0 280.7 379.5 333.5" stroke="#b86a28" stroke-width="1.25" stroke-opacity="0.85"/>
<path d="M344.3 266.9 Q377.7 288.8 386.8 353.9" stroke="#f0c488" stroke-width="1.21" stroke-opacity="0.85"/>
<path d="M336.9 248.9 Q381.8 263.1 406.4 333.3" stroke="#c87a34" stroke-width="0.97" stroke-opacity="0.85"/>
<path d="M324.0 239.9 Q361.4 228.5 416.3 261.2" stroke="#b86a28" stroke-width="1.02" stroke-opacity="0.85"/>
<path d="M337.5 255.9 Q378.6 269.8 400.3 337.1" stroke="#5a2a0a" stroke-width="0.88" stroke-opacity="0.85"/>
<path d="M357.2 239.5 Q394.4 254.8 413.9 303.1" stroke="#e09a50" stroke-width="0.78" stroke-opacity="0.85"/>
<path d="M330.4 234.2 Q380.5 233.8 408.4 275.0" stroke="#f0c488" stroke-width="0.95" stroke-opacity="0.85"/>
<path d="M363.0 278.2 Q384.3 302.9 392.0 350.9" stroke="#d88c40" stroke-width="0.75" stroke-opacity="0.85"/>
<path d="M357.3 249.5 Q403.0 262.5 422.4 322.4" stroke="#d88c40" stroke-width="1.22" stroke-opacity="0.85"/>
<path d="M352.1 249.5 Q383.5 267.8 396.2 317.1" stroke="#7a4018" stroke-width="1.26" stroke-opacity="0.85"/>
<path d="M341.6 239.6 Q372.4 239.5 411.0 261.3" stroke="#b86a28" stroke-width="0.71" stroke-opacity="0.85"/>
<path d="M332.5 231.5 Q369.9 228.6 424.6 257.7" stroke="#c87a34" stroke-width="1.37" stroke-opacity="0.85"/>
<path d="M355.5 243.7 Q397.8 258.8 415.1 317.2" stroke="#e09a50" stroke-width="1.17" stroke-opacity="0.85"/>
<path d="M340.6 241.0 Q372.9 243.9 421.3 268.5" stroke="#e8b070" stroke-width="1.06" stroke-opacity="0.85"/>
<path d="M350.1 268.0 Q380.8 285.0 390.0 347.1" stroke="#b86a28" stroke-width="0.77" stroke-opacity="0.85"/>
<path d="M358.2 260.0 Q391.9 283.6 401.8 343.8" stroke="#dca060" stroke-width="0.94" stroke-opacity="0.85"/>
<path d="M350.1 274.8 Q371.0 294.5 379.7 334.1" stroke="#c47030" stroke-width="0.80" stroke-opacity="0.85"/>
<path d="M340.5 261.1 Q364.2 277.8 376.9 305.6" stroke="#f0c488" stroke-width="0.88" stroke-opacity="0.85"/>
<path d="M329.2 233.2 Q362.2 226.2 412.0 246.7" stroke="#b06020" stroke-width="1.35" stroke-opacity="0.85"/>
<path d="M349.9 240.1 Q400.7 254.8 423.3 314.5" stroke="#dca060" stroke-width="1.34" stroke-opacity="0.85"/>
<path d="M357.5 277.6 Q377.6 295.7 385.5 338.0" stroke="#b86a28" stroke-width="1.39" stroke-opacity="0.85"/>
<path d="M353.7 281.9 Q371.5 301.6 379.9 341.8" stroke="#e8b070" stroke-width="0.81" stroke-opacity="0.85"/>
<path d="M356.0 259.6 Q389.9 277.1 405.6 339.7" stroke="#a85c1c" stroke-width="1.07" stroke-opacity="0.85"/>
<path d="M344.1 269.3 Q371.9 286.6 380.7 326.1" stroke="#c87a34" stroke-width="0.64" stroke-opacity="0.85"/>
<path d="M347.7 248.0 Q381.1 263.2 395.6 304.4" stroke="#c47030" stroke-width="0.87" stroke-opacity="0.85"/>
<path d="M343.8 247.4 Q377.8 261.3 399.7 314.5" stroke="#c87a34" stroke-width="0.77" stroke-opacity="0.85"/>
<path d="M324.0 235.1 Q358.0 227.7 402.4 246.0" stroke="#dca060" stroke-width="0.74" stroke-opacity="0.85"/>
<path d="M330.4 240.3 Q369.2 230.3 412.4 260.3" stroke="#e8b070" stroke-width="1.34" stroke-opacity="0.85"/>
<path d="M329.6 234.1 Q367.6 229.4 419.8 255.4" stroke="#d88c40" stroke-width="1.03" stroke-opacity="0.85"/>
<path d="M348.2 247.0 Q380.1 261.4 396.5 311.2" stroke="#b06020" stroke-width="1.10" stroke-opacity="0.85"/>
<path d="M342.9 244.0 Q387.3 252.1 406.2 310.3" stroke="#d08038" stroke-width="1.30" stroke-opacity="0.85"/>
<path d="M327.1 242.2 Q357.6 232.3 395.2 251.2" stroke="#a85c1c" stroke-width="0.73" stroke-opacity="0.85"/>
<path d="M340.3 233.7 Q371.8 234.9 419.5 259.4" stroke="#dca060" stroke-width="1.35" stroke-opacity="0.85"/>
<path d="M322.3 237.2 Q370.2 237.7 396.6 279.9" stroke="#c87a34" stroke-width="1.32" stroke-opacity="0.85"/>
<path d="M327.9 242.8 Q380.1 245.6 408.0 298.9" stroke="#d88c40" stroke-width="1.13" stroke-opacity="0.85"/>
<path d="M360.4 272.9 Q380.3 292.1 385.3 333.1" stroke="#b86a28" stroke-width="1.14" stroke-opacity="0.85"/>
<path d="M319.6 242.8 Q355.4 237.9 407.1 265.5" stroke="#c47030" stroke-width="1.24" stroke-opacity="0.85"/>
<path d="M350.3 260.6 Q368.8 274.0 383.6 308.4" stroke="#6a3410" stroke-width="0.68" stroke-opacity="0.85"/>
<path d="M344.9 249.9 Q389.4 264.1 407.4 327.4" stroke="#b86a28" stroke-width="0.80" stroke-opacity="0.85"/>
<path d="M329.3 233.2 Q368.2 220.3 423.5 254.2" stroke="#f0c488" stroke-width="1.10" stroke-opacity="0.85"/>
<path d="M348.1 268.3 Q374.7 291.8 379.3 342.5" stroke="#f0c488" stroke-width="1.36" stroke-opacity="0.85"/>
<path d="M348.8 272.5 Q371.6 293.8 382.8 345.5" stroke="#a85c1c" stroke-width="1.30" stroke-opacity="0.85"/>
<path d="M344.9 250.7 Q381.5 262.7 402.6 319.2" stroke="#d08038" stroke-width="1.29" stroke-opacity="0.85"/>
<path d="M336.7 233.9 Q369.8 231.1 403.8 250.5" stroke="#d08038" stroke-width="0.73" stroke-opacity="0.85"/>
<path d="M346.6 267.0 Q379.0 287.1 390.6 349.8" stroke="#d88c40" stroke-width="1.19" stroke-opacity="0.85"/>
<path d="M336.9 230.4 Q370.7 231.8 415.1 257.7" stroke="#5a2a0a" stroke-width="0.74" stroke-opacity="0.85"/>
<path d="M329.4 240.4 Q382.3 241.4 415.3 296.3" stroke="#d08038" stroke-width="1.04" stroke-opacity="0.85"/>
<path d="M346.4 273.1 Q369.8 297.7 380.8 341.3" stroke="#e8b070" stroke-width="0.93" stroke-opacity="0.85"/>
<path d="M292.8 219.7 Q269.1 239.7 249.7 264.3" stroke="#e8b070" stroke-width="0.65" stroke-opacity="0.6"/>
<path d="M341.7 231.9 Q376.0 256.5 405.9 306.4" stroke="#e8b070" stroke-width="0.87" stroke-opacity="0.6"/>
<path d="M271.6 225.8 Q247.4 249.5 232.1 278.4" stroke="#e2b898" stroke-width="1.02" stroke-opacity="0.6"/>
<path d="M329.8 225.1 Q355.7 245.1 381.7 268.6" stroke="#f0c488" stroke-width="0.89" stroke-opacity="0.6"/>
<path d="M321.2 211.3 Q353.7 231.0 383.7 260.9" stroke="#dca060" stroke-width="0.96" stroke-opacity="0.6"/>
<path d="M285.7 215.8 Q268.6 231.8 252.5 258.2" stroke="#eccdb4" stroke-width="1.26" stroke-opacity="0.6"/>
<path d="M323.4 216.7 Q354.7 235.7 385.7 269.2" stroke="#f0c488" stroke-width="1.06" stroke-opacity="0.6"/>
<path d="M308.0 229.6 Q314.0 254.0 320.0 278.1" stroke="#d09050" stroke-width="1.04" stroke-opacity="0.6"/>
<path d="M299.7 220.2 Q282.2 243.0 266.3 278.2" stroke="#e2b898" stroke-width="1.21" stroke-opacity="0.6"/>
<path d="M275.2 222.0 Q257.4 237.8 237.1 262.8" stroke="#f0c488" stroke-width="0.90" stroke-opacity="0.6"/>
<path d="M323.2 221.3 Q359.8 242.8 386.1 287.1" stroke="#dca060" stroke-width="0.72" stroke-opacity="0.6"/>
<path d="M333.9 222.4 Q371.8 245.6 397.7 290.0" stroke="#eccdb4" stroke-width="0.72" stroke-opacity="0.6"/>
<path d="M303.4 235.6 Q307.6 257.3 312.1 287.9" stroke="#f4dcca" stroke-width="1.02" stroke-opacity="0.6"/>
<path d="M331.5 218.7 Q373.5 246.0 402.1 294.5" stroke="#dca060" stroke-width="0.80" stroke-opacity="0.6"/>
<path d="M288.9 224.6 Q269.8 251.0 256.9 286.1" stroke="#f0c488" stroke-width="1.16" stroke-opacity="0.6"/>
<path d="M308.8 224.9 Q314.6 242.1 314.6 266.4" stroke="#dca060" stroke-width="0.70" stroke-opacity="0.6"/>
<path d="M294.1 224.3 Q272.9 252.4 255.9 288.1" stroke="#e2b898" stroke-width="1.18" stroke-opacity="0.6"/>
<path d="M337.8 220.4 Q366.0 236.5 387.1 271.1" stroke="#eccdb4" stroke-width="1.02" stroke-opacity="0.6"/>
<path d="M285.8 232.9 Q271.7 252.6 256.9 286.3" stroke="#f0c488" stroke-width="0.98" stroke-opacity="0.6"/>
<path d="M349.2 231.2 Q379.5 257.0 403.2 298.9" stroke="#f0c488" stroke-width="0.92" stroke-opacity="0.6"/>
<path d="M338.8 216.2 Q366.7 234.8 392.2 262.0" stroke="#e8b070" stroke-width="0.73" stroke-opacity="0.6"/>
<path d="M285.5 220.0 Q265.9 238.9 247.2 262.2" stroke="#f0c488" stroke-width="1.30" stroke-opacity="0.6"/>
<path d="M344.2 229.5 Q369.9 246.8 394.2 270.9" stroke="#e8b070" stroke-width="1.02" stroke-opacity="0.6"/>
<path d="M294.3 230.2 Q276.4 253.3 263.8 287.7" stroke="#d09050" stroke-width="0.63" stroke-opacity="0.6"/>
<path d="M333.1 225.0 Q365.4 247.6 392.0 290.4" stroke="#f4dcca" stroke-width="1.01" stroke-opacity="0.6"/>
<path d="M285.0 212.2 Q259.1 234.6 235.4 262.9" stroke="#f4dcca" stroke-width="1.28" stroke-opacity="0.6"/>
<path d="M310.9 223.5 Q313.8 248.0 322.2 273.4" stroke="#f0c488" stroke-width="1.03" stroke-opacity="0.6"/>
<path d="M333.4 226.2 Q364.0 243.9 384.8 280.3" stroke="#e8b070" stroke-width="1.24" stroke-opacity="0.6"/>
<path d="M331.8 221.4 Q356.2 239.4 386.1 263.1" stroke="#dca060" stroke-width="1.09" stroke-opacity="0.6"/>
<path d="M296.3 225.5 Q274.7 249.9 259.3 287.0" stroke="#eccdb4" stroke-width="1.11" stroke-opacity="0.6"/>
<path d="M336.9 221.9 Q367.1 241.5 389.6 273.8" stroke="#e2b898" stroke-width="1.28" stroke-opacity="0.6"/>
<path d="M339.1 226.0 Q365.0 242.9 388.3 267.6" stroke="#e2b898" stroke-width="0.68" stroke-opacity="0.6"/>
<path d="M332.5 217.0 Q354.5 232.8 379.4 255.7" stroke="#e2b898" stroke-width="0.78" stroke-opacity="0.6"/>
<path d="M301.2 221.8 Q307.8 242.2 311.5 268.9" stroke="#d09050" stroke-width="1.20" stroke-opacity="0.6"/>
<path d="M290.8 224.2 Q276.5 243.7 261.4 269.2" stroke="#f4dcca" stroke-width="0.98" stroke-opacity="0.6"/>
<path d="M288.2 225.9 Q272.4 250.7 253.0 287.8" stroke="#f0c488" stroke-width="0.81" stroke-opacity="0.6"/>
<path d="M302.4 238.6 Q308.1 260.1 310.7 279.1" stroke="#e2b898" stroke-width="1.05" stroke-opacity="0.6"/>
<path d="M339.7 222.7 Q372.0 247.0 394.8 287.5" stroke="#f4dcca" stroke-width="0.75" stroke-opacity="0.6"/>
<path d="M331.8 221.3 Q356.2 238.3 382.1 261.6" stroke="#f0c488" stroke-width="1.01" stroke-opacity="0.6"/>
<path d="M273.9 219.7 Q250.8 239.5 233.2 273.1" stroke="#eccdb4" stroke-width="1.17" stroke-opacity="0.6"/>
<path d="M286.6 233.4 Q270.0 259.5 258.0 285.7" stroke="#f0c488" stroke-width="0.75" stroke-opacity="0.6"/>
<path d="M344.9 241.0 Q373.1 265.6 390.4 299.3" stroke="#f4dcca" stroke-width="0.69" stroke-opacity="0.6"/>
<path d="M282.0 223.1 Q253.1 245.7 235.1 276.2" stroke="#dca060" stroke-width="1.18" stroke-opacity="0.6"/>
<path d="M289.2 234.1 Q269.7 258.9 255.2 292.7" stroke="#e8b070" stroke-width="0.75" stroke-opacity="0.6"/>
<path d="M324.7 209.3 Q351.6 224.1 382.1 253.9" stroke="#f4dcca" stroke-width="1.18" stroke-opacity="0.6"/>
<path d="M344.9 227.6 Q378.3 248.2 396.3 286.3" stroke="#dca060" stroke-width="0.78" stroke-opacity="0.6"/>
<path d="M281.6 232.1 Q267.0 255.1 252.2 289.6" stroke="#d09050" stroke-width="1.21" stroke-opacity="0.6"/>
<path d="M305.3 232.9 Q309.2 251.7 312.3 271.4" stroke="#e2b898" stroke-width="0.63" stroke-opacity="0.6"/>
<path d="M331.1 219.1 Q361.2 236.0 391.6 268.5" stroke="#eccdb4" stroke-width="0.61" stroke-opacity="0.6"/>
<path d="M279.8 217.4 Q260.4 236.6 242.0 261.9" stroke="#e2b898" stroke-width="0.74" stroke-opacity="0.6"/>
<path d="M282.8 217.1 Q254.7 237.8 233.8 269.7" stroke="#eccdb4" stroke-width="1.29" stroke-opacity="0.6"/>
<path d="M284.7 210.3 Q266.1 227.0 246.8 245.9" stroke="#dca060" stroke-width="0.74" stroke-opacity="0.6"/>
<path d="M307.2 240.8 Q309.1 259.0 318.4 286.2" stroke="#e2b898" stroke-width="1.26" stroke-opacity="0.6"/>
<path d="M338.3 221.6 Q373.0 245.9 394.9 286.6" stroke="#f0c488" stroke-width="0.69" stroke-opacity="0.6"/>
<path d="M275.8 218.5 Q250.5 237.0 233.8 263.2" stroke="#d09050" stroke-width="0.83" stroke-opacity="0.6"/>
<path d="M293.0 229.1 Q273.0 252.2 260.0 290.7" stroke="#f4dcca" stroke-width="1.08" stroke-opacity="0.6"/>
<path d="M339.3 223.3 Q369.7 239.8 391.7 268.7" stroke="#e2b898" stroke-width="0.93" stroke-opacity="0.6"/>
<path d="M273.6 228.1 Q254.2 250.6 237.2 275.8" stroke="#e8b070" stroke-width="1.21" stroke-opacity="0.6"/>
<path d="M296.0 221.4 Q278.8 243.5 261.6 278.4" stroke="#e8b070" stroke-width="1.27" stroke-opacity="0.6"/>
<path d="M275.3 221.5 Q253.9 239.3 237.6 264.8" stroke="#dca060" stroke-width="1.28" stroke-opacity="0.6"/>
<path d="M276.4 218.8 Q254.1 239.2 239.2 262.6" stroke="#f0c488" stroke-width="1.10" stroke-opacity="0.6"/>
<path d="M332.2 224.0 Q364.1 248.2 393.6 296.0" stroke="#dca060" stroke-width="0.74" stroke-opacity="0.6"/>
<path d="M310.3 220.0 Q312.2 244.4 321.5 272.3" stroke="#e2b898" stroke-width="1.23" stroke-opacity="0.6"/>
<path d="M334.0 227.9 Q364.2 248.9 389.5 283.1" stroke="#e8b070" stroke-width="0.97" stroke-opacity="0.6"/>
<path d="M343.2 230.9 Q372.4 254.1 395.8 296.7" stroke="#e2b898" stroke-width="1.02" stroke-opacity="0.6"/>
<path d="M317.2 211.1 Q354.8 229.7 385.1 261.4" stroke="#eccdb4" stroke-width="0.91" stroke-opacity="0.6"/>
<path d="M278.8 217.5 Q260.6 234.0 240.7 260.1" stroke="#e8b070" stroke-width="0.63" stroke-opacity="0.6"/>
<path d="M290.3 214.3 Q262.3 241.7 240.6 277.0" stroke="#f4dcca" stroke-width="1.23" stroke-opacity="0.6"/>
<path d="M290.3 220.4 Q269.6 247.5 254.1 278.7" stroke="#f0c488" stroke-width="0.68" stroke-opacity="0.6"/>
<path d="M310.0 235.0 Q312.6 258.2 318.3 278.9" stroke="#dca060" stroke-width="0.99" stroke-opacity="0.6"/>
<path d="M323.2 221.3 Q349.3 235.9 369.5 265.9" stroke="#e8b070" stroke-width="0.78" stroke-opacity="0.6"/>
<path d="M273.7 224.2 Q255.8 241.9 236.0 264.3" stroke="#dca060" stroke-width="0.80" stroke-opacity="0.6"/>
<path d="M305.9 229.3 Q310.7 252.2 314.2 283.3" stroke="#eccdb4" stroke-width="0.87" stroke-opacity="0.6"/>
<path d="M290.4 225.1 Q278.2 248.1 262.9 270.2" stroke="#f0c488" stroke-width="1.05" stroke-opacity="0.6"/>
<path d="M302.0 233.5 Q304.1 253.8 313.1 277.1" stroke="#f0c488" stroke-width="0.64" stroke-opacity="0.6"/>
<path d="M285.5 215.2 Q262.4 232.4 243.8 257.0" stroke="#dca060" stroke-width="1.23" stroke-opacity="0.6"/>
<path d="M286.7 217.7 Q265.8 236.2 249.5 259.3" stroke="#dca060" stroke-width="0.92" stroke-opacity="0.6"/>
<path d="M304.3 234.2 Q305.8 255.5 316.0 279.5" stroke="#d09050" stroke-width="1.04" stroke-opacity="0.6"/>
<path d="M284.1 212.2 Q264.3 228.5 242.2 256.4" stroke="#e8b070" stroke-width="1.27" stroke-opacity="0.6"/>
<path d="M281.1 217.3 Q258.3 241.1 237.5 271.4" stroke="#dca060" stroke-width="0.92" stroke-opacity="0.6"/>
<path d="M331.5 222.5 Q373.6 246.5 397.3 294.5" stroke="#e2b898" stroke-width="0.97" stroke-opacity="0.6"/>
<path d="M288.9 229.7 Q271.7 247.0 260.5 272.3" stroke="#d09050" stroke-width="0.99" stroke-opacity="0.6"/>
<path d="M285.9 236.0 Q268.8 256.5 258.1 283.1" stroke="#f0c488" stroke-width="0.66" stroke-opacity="0.6"/>
<path d="M294.8 220.2 Q273.1 244.9 261.7 278.5" stroke="#eccdb4" stroke-width="1.28" stroke-opacity="0.6"/>
<path d="M334.1 219.3 Q361.7 234.3 384.7 265.0" stroke="#dca060" stroke-width="0.66" stroke-opacity="0.6"/>
<path d="M332.2 228.3 Q357.0 249.7 379.1 280.0" stroke="#dca060" stroke-width="0.77" stroke-opacity="0.6"/>
<path d="M301.0 223.0 Q303.2 247.4 310.1 273.8" stroke="#eccdb4" stroke-width="0.76" stroke-opacity="0.6"/>
<path d="M332.2 221.0 Q367.3 244.6 391.5 289.9" stroke="#eccdb4" stroke-width="0.97" stroke-opacity="0.6"/>
<path d="M310.6 236.1 Q314.7 257.5 316.6 276.5" stroke="#d09050" stroke-width="1.20" stroke-opacity="0.6"/>
<path d="M284.0 221.0 Q262.0 240.6 244.0 265.1" stroke="#d09050" stroke-width="0.87" stroke-opacity="0.6"/>
<path d="M342.1 223.3 Q377.9 252.0 401.6 296.7" stroke="#e2b898" stroke-width="1.05" stroke-opacity="0.6"/>
<path d="M297.8 210.6 Q280.6 226.9 266.4 252.7" stroke="#f0c488" stroke-width="0.83" stroke-opacity="0.6"/>
<path d="M309.4 235.5 Q311.1 258.2 316.6 281.6" stroke="#d09050" stroke-width="1.08" stroke-opacity="0.6"/>
<path d="M326.0 214.8 Q355.9 232.9 379.1 260.2" stroke="#e2b898" stroke-width="0.61" stroke-opacity="0.6"/>
<path d="M347.4 236.5 Q375.3 263.5 397.8 303.2" stroke="#dca060" stroke-width="1.29" stroke-opacity="0.6"/>
<path d="M340.1 220.7 Q364.1 236.5 389.6 269.1" stroke="#f4dcca" stroke-width="0.79" stroke-opacity="0.6"/>
<path d="M306.1 218.4 Q312.1 246.6 319.5 270.9" stroke="#f4dcca" stroke-width="1.19" stroke-opacity="0.6"/>
<path d="M329.7 212.6 Q367.4 235.9 399.1 285.8" stroke="#f4dcca" stroke-width="0.86" stroke-opacity="0.6"/>
<path d="M309.0 239.6 Q310.7 257.7 320.0 283.8" stroke="#f4dcca" stroke-width="0.66" stroke-opacity="0.6"/>
<path d="M282.6 215.3 Q260.7 231.0 242.4 258.4" stroke="#f4dcca" stroke-width="1.02" stroke-opacity="0.6"/>
<path d="M305.9 224.2 Q310.3 251.2 318.6 275.5" stroke="#e8b070" stroke-width="1.26" stroke-opacity="0.6"/>
<path d="M323.1 218.2 Q356.9 235.6 390.2 270.9" stroke="#eccdb4" stroke-width="0.83" stroke-opacity="0.6"/>
<path d="M285.3 223.6 Q268.9 245.9 260.1 267.2" stroke="#f4dcca" stroke-width="1.15" stroke-opacity="0.6"/>
<path d="M333.5 223.9 Q366.4 245.3 397.4 285.2" stroke="#eccdb4" stroke-width="0.89" stroke-opacity="0.6"/>
<path d="M333.0 219.0 Q368.9 242.8 393.5 280.6" stroke="#dca060" stroke-width="0.62" stroke-opacity="0.6"/>
<path d="M290.1 224.9 Q274.6 244.7 262.2 269.8" stroke="#d09050" stroke-width="1.20" stroke-opacity="0.6"/>
<path d="M305.0 238.4 Q308.0 260.0 311.7 275.8" stroke="#f4dcca" stroke-width="0.74" stroke-opacity="0.6"/>
<path d="M310.9 234.5 Q316.4 253.3 320.4 279.2" stroke="#f4dcca" stroke-width="1.26" stroke-opacity="0.6"/>
<path d="M308.2 230.1 Q309.6 252.9 316.7 277.1" stroke="#f4dcca" stroke-width="0.79" stroke-opacity="0.6"/>
<path d="M291.7 214.5 Q273.1 230.8 252.4 258.3" stroke="#eccdb4" stroke-width="0.73" stroke-opacity="0.6"/>
<path d="M290.2 221.3 Q274.4 241.9 262.0 272.5" stroke="#e8b070" stroke-width="1.03" stroke-opacity="0.6"/>
<path d="M281.6 218.6 Q254.0 240.1 234.2 272.4" stroke="#eccdb4" stroke-width="1.04" stroke-opacity="0.6"/>
<path d="M331.1 220.7 Q359.6 235.1 387.6 264.3" stroke="#d09050" stroke-width="0.66" stroke-opacity="0.6"/>
<path d="M288.3 216.0 Q266.7 234.2 241.3 263.2" stroke="#dca060" stroke-width="0.88" stroke-opacity="0.6"/>
<path d="M292.1 214.6 Q269.5 233.5 248.6 265.0" stroke="#dca060" stroke-width="0.84" stroke-opacity="0.6"/>
<path d="M334.3 224.8 Q363.6 241.9 391.4 276.9" stroke="#eccdb4" stroke-width="1.05" stroke-opacity="0.6"/>
<path d="M280.4 215.6 Q257.6 238.5 234.0 269.9" stroke="#eccdb4" stroke-width="1.08" stroke-opacity="0.6"/>
<path d="M294.3 213.6 Q274.5 234.3 260.0 263.7" stroke="#e8b070" stroke-width="0.62" stroke-opacity="0.6"/>
<path d="M310.3 233.0 Q311.8 253.2 319.6 273.1" stroke="#e8b070" stroke-width="1.03" stroke-opacity="0.6"/>
<path d="M333.8 226.6 Q365.4 248.2 385.3 276.5" stroke="#f4dcca" stroke-width="0.89" stroke-opacity="0.6"/>
<path d="M294.4 239.0 Q288.3 267.1 285.5 296.3" stroke="#e09a50" stroke-width="0.89" stroke-opacity="0.8"/>
<path d="M286.0 236.3 Q278.6 257.5 273.2 276.9" stroke="#b86a28" stroke-width="0.77" stroke-opacity="0.8"/>
<path d="M309.5 230.8 Q324.0 253.9 339.3 270.4" stroke="#4a2008" stroke-width="0.88" stroke-opacity="0.8"/>
<path d="M325.4 246.0 Q339.7 264.1 352.1 283.1" stroke="#a85c1c" stroke-width="1.15" stroke-opacity="0.8"/>
<path d="M310.9 236.3 Q325.8 261.0 346.5 288.6" stroke="#4a2008" stroke-width="1.08" stroke-opacity="0.8"/>
<path d="M265.2 251.1 Q253.8 271.4 242.8 293.0" stroke="#d88c40" stroke-width="1.08" stroke-opacity="0.8"/>
<path d="M294.3 229.8 Q287.9 266.1 286.9 299.1" stroke="#d88c40" stroke-width="1.17" stroke-opacity="0.8"/>
<path d="M321.4 248.0 Q332.7 268.5 348.0 286.1" stroke="#dca060" stroke-width="1.05" stroke-opacity="0.8"/>
<path d="M282.8 250.0 Q276.8 270.0 264.5 291.4" stroke="#c87a34" stroke-width="0.98" stroke-opacity="0.8"/>
<path d="M320.0 253.6 Q332.9 270.2 346.0 289.8" stroke="#c87a34" stroke-width="1.18" stroke-opacity="0.8"/>
<path d="M318.2 235.6 Q334.0 255.7 344.2 274.3" stroke="#e09a50" stroke-width="0.62" stroke-opacity="0.8"/>
<path d="M315.8 242.0 Q330.2 264.4 345.2 283.9" stroke="#dca060" stroke-width="0.62" stroke-opacity="0.8"/>
<path d="M282.9 235.6 Q275.9 256.0 267.1 280.8" stroke="#d88c40" stroke-width="0.94" stroke-opacity="0.8"/>
<path d="M301.6 241.9 Q304.2 262.3 310.8 285.8" stroke="#7a4018" stroke-width="0.99" stroke-opacity="0.8"/>
<path d="M297.2 240.0 Q295.2 267.6 290.8 296.8" stroke="#d88c40" stroke-width="1.02" stroke-opacity="0.8"/>
<path d="M285.2 243.2 Q273.6 266.8 268.0 291.7" stroke="#c47030" stroke-width="0.66" stroke-opacity="0.8"/>
<path d="M304.3 242.1 Q309.4 271.2 314.0 295.8" stroke="#5a2a0a" stroke-width="1.03" stroke-opacity="0.8"/>
<path d="M266.7 248.8 Q254.8 267.7 244.6 289.0" stroke="#e8c8a0" stroke-width="1.19" stroke-opacity="0.8"/>
<path d="M286.2 229.7 Q279.6 251.1 268.0 277.9" stroke="#c87a34" stroke-width="1.00" stroke-opacity="0.8"/>
<path d="M296.3 223.2 Q293.8 253.3 286.1 282.6" stroke="#5a2a0a" stroke-width="1.12" stroke-opacity="0.8"/>
<path d="M284.8 234.7 Q277.1 259.9 266.2 285.4" stroke="#a85c1c" stroke-width="1.02" stroke-opacity="0.8"/>
<path d="M292.7 224.1 Q290.4 257.5 283.6 291.7" stroke="#b06020" stroke-width="0.78" stroke-opacity="0.8"/>
<path d="M262.9 251.4 Q252.2 267.8 244.6 282.9" stroke="#d88c40" stroke-width="0.87" stroke-opacity="0.8"/>
<path d="M309.4 235.3 Q322.9 257.6 337.4 273.1" stroke="#b06020" stroke-width="1.08" stroke-opacity="0.8"/>
<path d="M282.8 224.5 Q276.6 243.1 266.4 267.8" stroke="#c47030" stroke-width="0.63" stroke-opacity="0.8"/>
<path d="M308.8 233.8 Q323.2 258.1 343.3 280.9" stroke="#7a4018" stroke-width="0.69" stroke-opacity="0.8"/>
<path d="M289.2 235.0 Q284.7 263.7 282.0 295.5" stroke="#dca060" stroke-width="0.89" stroke-opacity="0.8"/>
<path d="M283.5 234.8 Q275.3 254.7 264.9 282.3" stroke="#6a3410" stroke-width="0.82" stroke-opacity="0.8"/>
<path d="M294.4 232.5 Q289.8 256.9 290.1 279.5" stroke="#e8c8a0" stroke-width="0.82" stroke-opacity="0.8"/>
<path d="M294.6 248.0 Q293.7 273.7 286.4 296.7" stroke="#a85c1c" stroke-width="1.19" stroke-opacity="0.8"/>
<path d="M315.1 241.9 Q331.5 266.2 344.4 285.0" stroke="#f0c488" stroke-width="1.10" stroke-opacity="0.8"/>
<path d="M317.7 249.7 Q333.8 269.4 344.7 291.9" stroke="#e8b070" stroke-width="1.13" stroke-opacity="0.8"/>
<path d="M271.8 250.4 Q259.9 272.0 252.3 291.6" stroke="#a85c1c" stroke-width="0.77" stroke-opacity="0.8"/>
<path d="M279.1 240.6 Q270.4 262.3 261.4 286.9" stroke="#4a2008" stroke-width="0.67" stroke-opacity="0.8"/>
<path d="M288.6 240.6 Q284.5 260.6 281.1 287.3" stroke="#d08038" stroke-width="0.70" stroke-opacity="0.8"/>
<path d="M264.8 252.3 Q251.2 270.8 246.6 288.6" stroke="#c87a34" stroke-width="1.16" stroke-opacity="0.8"/>
<path d="M267.5 236.5 Q255.8 255.5 244.1 278.9" stroke="#4a2008" stroke-width="1.01" stroke-opacity="0.8"/>
<path d="M292.2 228.5 Q288.5 254.4 285.7 283.7" stroke="#f0c488" stroke-width="0.78" stroke-opacity="0.8"/>
<path d="M306.9 229.2 Q322.5 252.6 338.4 276.4" stroke="#e8b070" stroke-width="0.76" stroke-opacity="0.8"/>
<path d="M294.1 237.1 Q290.9 261.7 284.3 291.1" stroke="#b06020" stroke-width="0.91" stroke-opacity="0.8"/>
<path d="M299.4 233.8 Q305.2 261.0 308.3 285.0" stroke="#7a4018" stroke-width="0.92" stroke-opacity="0.8"/>
<path d="M306.9 245.5 Q310.9 267.5 313.0 291.0" stroke="#6a3410" stroke-width="0.82" stroke-opacity="0.8"/>
<path d="M314.4 234.4 Q336.3 262.7 352.4 292.9" stroke="#4a2008" stroke-width="1.15" stroke-opacity="0.8"/>
<path d="M300.0 231.0 Q303.8 260.9 307.1 286.3" stroke="#e8b070" stroke-width="0.87" stroke-opacity="0.8"/>
<path d="M295.6 234.9 Q293.7 254.5 290.0 280.1" stroke="#f0c488" stroke-width="0.71" stroke-opacity="0.8"/>
<path d="M286.3 234.3 Q277.4 258.4 269.6 283.4" stroke="#c87a34" stroke-width="0.71" stroke-opacity="0.8"/>
<path d="M290.3 239.9 Q286.3 264.5 281.7 288.9" stroke="#6a3410" stroke-width="0.96" stroke-opacity="0.8"/>
<path d="M291.4 222.9 Q287.0 254.0 283.0 290.5" stroke="#dca060" stroke-width="1.17" stroke-opacity="0.8"/>
<path d="M303.8 246.9 Q306.1 268.5 309.6 288.4" stroke="#e8b070" stroke-width="1.05" stroke-opacity="0.8"/>
<path d="M316.2 247.6 Q332.0 268.1 343.8 286.7" stroke="#d08038" stroke-width="1.15" stroke-opacity="0.8"/>
<path d="M279.5 240.5 Q269.2 260.3 265.6 285.1" stroke="#5a2a0a" stroke-width="0.94" stroke-opacity="0.8"/>
<path d="M280.4 231.4 Q270.7 261.8 256.8 291.1" stroke="#d08038" stroke-width="1.13" stroke-opacity="0.8"/>
<path d="M307.0 244.8 Q313.8 271.5 315.7 296.4" stroke="#7a4018" stroke-width="0.68" stroke-opacity="0.8"/>
<path d="M285.3 238.7 Q279.5 257.4 268.9 280.5" stroke="#4a2008" stroke-width="0.65" stroke-opacity="0.8"/>
<path d="M261.0 246.6 Q249.5 264.4 244.5 281.3" stroke="#6a3410" stroke-width="0.76" stroke-opacity="0.8"/>
<path d="M321.0 240.3 Q336.3 262.6 351.9 285.1" stroke="#c87a34" stroke-width="0.67" stroke-opacity="0.8"/>
<path d="M320.5 240.9 Q334.6 263.0 348.5 279.4" stroke="#dca060" stroke-width="0.82" stroke-opacity="0.8"/>
<path d="M275.3 239.4 Q258.9 258.9 251.1 284.0" stroke="#5a2a0a" stroke-width="0.87" stroke-opacity="0.8"/>
<path d="M297.6 232.2 Q293.4 254.8 292.5 281.2" stroke="#6a3410" stroke-width="0.80" stroke-opacity="0.8"/>
<path d="M303.3 249.1 Q306.0 270.8 309.7 295.2" stroke="#d08038" stroke-width="0.72" stroke-opacity="0.8"/>
<path d="M303.7 236.8 Q306.5 263.6 311.6 289.9" stroke="#b86a28" stroke-width="0.73" stroke-opacity="0.8"/>
<path d="M289.5 226.9 Q279.4 248.7 271.5 274.2" stroke="#c87a34" stroke-width="1.15" stroke-opacity="0.8"/>
<path d="M270.2 244.3 Q256.6 261.1 249.0 280.5" stroke="#7a4018" stroke-width="0.68" stroke-opacity="0.8"/>
<path d="M296.8 234.8 Q294.0 262.9 288.0 297.6" stroke="#6a3410" stroke-width="1.17" stroke-opacity="0.8"/>
<path d="M302.8 245.1 Q306.2 273.7 312.2 294.9" stroke="#6a3410" stroke-width="0.61" stroke-opacity="0.8"/>
<path d="M314.5 236.3 Q326.7 258.3 340.7 274.2" stroke="#d08038" stroke-width="1.14" stroke-opacity="0.8"/>
<path d="M290.0 236.2 Q287.2 263.2 283.0 287.9" stroke="#e09a50" stroke-width="0.76" stroke-opacity="0.8"/>
<path d="M260.2 247.4 Q249.2 265.2 239.5 286.3" stroke="#e09a50" stroke-width="0.96" stroke-opacity="0.8"/>
<path d="M285.2 232.9 Q279.7 250.9 270.0 272.9" stroke="#b86a28" stroke-width="1.07" stroke-opacity="0.8"/>
<path d="M291.2 233.4 Q287.7 256.2 285.4 277.5" stroke="#d08038" stroke-width="0.85" stroke-opacity="0.8"/>
<path d="M317.7 240.6 Q333.1 257.8 346.0 278.9" stroke="#dca060" stroke-width="1.13" stroke-opacity="0.8"/>
<path d="M289.9 234.1 Q287.0 258.0 281.2 282.1" stroke="#6a3410" stroke-width="0.80" stroke-opacity="0.8"/>
<path d="M299.2 235.0 Q304.0 260.2 305.6 287.9" stroke="#c87a34" stroke-width="1.06" stroke-opacity="0.8"/>
<path d="M261.5 246.8 Q250.1 262.8 242.6 281.5" stroke="#f0c488" stroke-width="0.61" stroke-opacity="0.8"/>
<path d="M289.7 229.8 Q286.5 254.7 280.8 285.7" stroke="#5a2a0a" stroke-width="0.64" stroke-opacity="0.8"/>
<path d="M313.4 234.7 Q332.2 263.1 347.9 283.6" stroke="#f0c488" stroke-width="0.73" stroke-opacity="0.8"/>
<path d="M262.5 246.5 Q252.5 261.2 242.0 278.0" stroke="#6a3410" stroke-width="0.77" stroke-opacity="0.8"/>
<path d="M304.4 245.9 Q306.2 272.3 314.6 291.6" stroke="#7a4018" stroke-width="0.97" stroke-opacity="0.8"/>
<path d="M270.0 242.8 Q254.5 261.4 247.8 284.7" stroke="#e8c8a0" stroke-width="0.82" stroke-opacity="0.8"/>
<path d="M293.4 237.4 Q288.1 264.9 285.6 297.1" stroke="#5a2a0a" stroke-width="0.74" stroke-opacity="0.8"/>
<path d="M268.8 250.4 Q255.1 269.0 251.1 287.4" stroke="#6a3410" stroke-width="0.75" stroke-opacity="0.8"/>
<path d="M277.0 238.8 Q262.8 260.0 252.0 280.2" stroke="#b06020" stroke-width="0.71" stroke-opacity="0.8"/>
<path d="M305.8 241.5 Q310.8 265.2 311.9 285.6" stroke="#a85c1c" stroke-width="1.14" stroke-opacity="0.8"/>
<path d="M295.2 232.6 Q290.5 260.7 288.9 294.6" stroke="#b86a28" stroke-width="1.10" stroke-opacity="0.8"/>
<path d="M275.2 242.9 Q264.8 263.2 257.8 286.4" stroke="#5a2a0a" stroke-width="0.87" stroke-opacity="0.8"/>
<path d="M308.8 235.1 Q323.0 254.2 334.0 271.9" stroke="#d08038" stroke-width="1.12" stroke-opacity="0.8"/>
<path d="M296.9 228.5 Q294.4 255.7 291.5 283.9" stroke="#d88c40" stroke-width="0.78" stroke-opacity="0.8"/>
<path d="M290.0 227.3 Q285.6 258.2 283.7 287.4" stroke="#c47030" stroke-width="1.07" stroke-opacity="0.8"/>
<path d="M300.8 249.6 Q306.0 272.9 306.9 295.2" stroke="#7a4018" stroke-width="0.90" stroke-opacity="0.8"/>
<path d="M291.1 235.7 Q287.4 262.0 282.4 289.2" stroke="#e09a50" stroke-width="0.91" stroke-opacity="0.8"/>
<path d="M306.0 238.5 Q310.0 268.9 315.6 294.7" stroke="#c87a34" stroke-width="1.04" stroke-opacity="0.8"/>
<path d="M318.5 233.5 Q336.9 257.5 353.3 283.8" stroke="#7a4018" stroke-width="1.12" stroke-opacity="0.8"/>
<path d="M298.0 228.1 Q302.2 261.0 311.0 291.9" stroke="#b86a28" stroke-width="0.94" stroke-opacity="0.8"/>
<path d="M312.5 232.9 Q333.1 259.3 351.1 285.8" stroke="#e8c8a0" stroke-width="0.94" stroke-opacity="0.8"/>
<path d="M298.6 230.7 Q300.9 253.9 303.9 274.5" stroke="#c87a34" stroke-width="0.79" stroke-opacity="0.8"/>
<path d="M293.1 231.6 Q291.9 252.4 284.7 278.2" stroke="#c47030" stroke-width="1.03" stroke-opacity="0.8"/>
<path d="M295.4 241.7 Q292.0 269.0 287.4 293.8" stroke="#b06020" stroke-width="1.13" stroke-opacity="0.8"/>
<path d="M296.6 237.5 Q293.6 266.3 285.5 302.1" stroke="#b06020" stroke-width="0.69" stroke-opacity="0.8"/>
<path d="M275.5 240.1 Q268.8 258.4 260.5 278.8" stroke="#d08038" stroke-width="1.11" stroke-opacity="0.8"/>
<path d="M317.5 242.4 Q328.4 260.0 342.8 277.6" stroke="#f0c488" stroke-width="1.18" stroke-opacity="0.8"/>
<path d="M281.9 236.8 Q271.7 259.0 264.9 282.9" stroke="#7a4018" stroke-width="0.94" stroke-opacity="0.8"/>
<path d="M322.9 252.8 Q336.8 271.1 350.2 292.1" stroke="#e8c8a0" stroke-width="0.90" stroke-opacity="0.8"/>
<path d="M287.8 231.2 Q282.7 249.9 272.7 270.4" stroke="#e8c8a0" stroke-width="0.62" stroke-opacity="0.8"/>
<path d="M274.1 237.2 Q257.1 262.4 249.3 283.7" stroke="#a85c1c" stroke-width="1.11" stroke-opacity="0.8"/>
<path d="M309.0 234.3 Q318.7 251.5 332.0 268.0" stroke="#b06020" stroke-width="1.04" stroke-opacity="0.8"/>
<path d="M262.6 246.9 Q249.7 266.8 245.3 285.8" stroke="#a85c1c" stroke-width="0.80" stroke-opacity="0.8"/>
<path d="M301.0 227.2 Q307.4 260.3 312.4 289.0" stroke="#d08038" stroke-width="1.08" stroke-opacity="0.8"/>
<path d="M299.2 224.9 Q297.9 247.7 293.1 278.1" stroke="#e8c8a0" stroke-width="1.11" stroke-opacity="0.8"/>
<path d="M292.0 228.0 Q286.7 253.9 286.0 283.2" stroke="#c87a34" stroke-width="0.86" stroke-opacity="0.8"/>
<path d="M278.4 234.1 Q267.9 262.6 255.2 288.8" stroke="#d88c40" stroke-width="0.63" stroke-opacity="0.8"/>
<path d="M288.8 232.8 Q286.4 261.5 280.0 293.3" stroke="#a85c1c" stroke-width="1.09" stroke-opacity="0.8"/>
<path d="M297.0 234.6 Q300.4 265.1 308.4 293.8" stroke="#e8b070" stroke-width="0.96" stroke-opacity="0.8"/>
<path d="M296.9 241.5 Q292.7 263.7 292.6 292.3" stroke="#d08038" stroke-width="0.63" stroke-opacity="0.8"/>
<path d="M302.9 233.2 Q305.0 257.0 312.0 282.2" stroke="#a85c1c" stroke-width="0.93" stroke-opacity="0.8"/>
<path d="M291.5 245.0 Q286.8 268.3 286.1 294.9" stroke="#b06020" stroke-width="0.92" stroke-opacity="0.8"/>
<path d="M305.1 241.3 Q310.0 269.5 313.0 293.7" stroke="#7a4018" stroke-width="0.73" stroke-opacity="0.8"/>
<path d="M278.8 242.1 Q271.8 264.3 263.6 285.8" stroke="#f0c488" stroke-width="1.03" stroke-opacity="0.8"/>
<path d="M265.6 246.1 Q249.6 266.7 241.9 285.5" stroke="#d88c40" stroke-width="0.68" stroke-opacity="0.8"/>
<path d="M279.9 236.8 Q273.3 258.3 263.3 278.8" stroke="#e09a50" stroke-width="0.76" stroke-opacity="0.8"/>
<path d="M317.9 241.6 Q332.6 268.3 348.8 287.1" stroke="#7a4018" stroke-width="0.89" stroke-opacity="0.8"/>
<path d="M275.5 240.6 Q266.6 259.4 260.1 281.5" stroke="#b06020" stroke-width="1.18" stroke-opacity="0.8"/>
<path d="M302.3 240.5 Q305.1 272.3 312.1 297.2" stroke="#c87a34" stroke-width="0.83" stroke-opacity="0.8"/>
<path d="M297.1 228.9 Q302.2 257.0 304.8 284.2" stroke="#dca060" stroke-width="1.19" stroke-opacity="0.8"/>
<path d="M271.2 239.7 Q260.4 259.7 252.5 274.6" stroke="#5a2a0a" stroke-width="0.92" stroke-opacity="0.8"/>
<path d="M320.2 244.0 Q333.6 266.5 348.3 284.6" stroke="#e09a50" stroke-width="1.12" stroke-opacity="0.8"/>
<path d="M288.3 235.4 Q284.8 258.3 279.6 285.1" stroke="#f0c488" stroke-width="0.64" stroke-opacity="0.8"/>
<path d="M294.7 245.7 Q289.9 267.1 289.5 290.8" stroke="#d88c40" stroke-width="1.05" stroke-opacity="0.8"/>
<path d="M313.2 238.4 Q325.3 258.6 337.4 275.2" stroke="#d08038" stroke-width="0.79" stroke-opacity="0.8"/>
<path d="M287.9 228.3 Q277.4 254.0 268.2 281.5" stroke="#4a2008" stroke-width="0.87" stroke-opacity="0.8"/>
<path d="M267.7 253.3 Q257.5 271.9 250.2 288.3" stroke="#e8b070" stroke-width="1.00" stroke-opacity="0.8"/>
<path d="M275.8 325.9 Q253.4 333.1 248.9 349.5" stroke="#c87a34" stroke-width="1.21" stroke-opacity="0.8"/>
<path d="M303.8 288.4 Q313.8 314.5 327.9 334.1" stroke="#b06020" stroke-width="0.71" stroke-opacity="0.8"/>
<path d="M297.3 292.7 Q308.6 316.2 324.0 339.2" stroke="#7a4018" stroke-width="1.20" stroke-opacity="0.8"/>
<path d="M321.3 270.3 Q350.4 290.4 368.2 336.6" stroke="#4a2008" stroke-width="1.03" stroke-opacity="0.8"/>
<path d="M293.6 265.8 Q271.2 291.2 250.2 320.0" stroke="#b86a28" stroke-width="0.86" stroke-opacity="0.8"/>
<path d="M300.1 328.5 Q309.9 342.7 320.4 352.6" stroke="#6a3410" stroke-width="0.74" stroke-opacity="0.8"/>
<path d="M294.7 274.9 Q308.9 311.7 331.2 343.2" stroke="#d88c40" stroke-width="1.00" stroke-opacity="0.8"/>
<path d="M274.0 325.9 Q254.4 332.9 249.1 350.0" stroke="#5a2a0a" stroke-width="0.93" stroke-opacity="0.8"/>
<path d="M303.4 264.8 Q334.9 283.6 354.5 321.2" stroke="#7a4018" stroke-width="0.95" stroke-opacity="0.8"/>
<path d="M299.2 325.7 Q307.3 340.5 321.1 351.2" stroke="#4a2008" stroke-width="1.05" stroke-opacity="0.8"/>
<path d="M292.3 282.1 Q308.8 310.0 320.3 336.8" stroke="#4a2008" stroke-width="0.97" stroke-opacity="0.8"/>
<path d="M298.2 294.7 Q310.8 327.8 330.3 353.3" stroke="#4a2008" stroke-width="1.21" stroke-opacity="0.8"/>
<path d="M271.8 323.0 Q249.3 328.9 247.6 347.0" stroke="#d88c40" stroke-width="0.77" stroke-opacity="0.8"/>
<path d="M293.1 259.0 Q323.6 278.5 349.2 316.1" stroke="#6a3410" stroke-width="1.15" stroke-opacity="0.8"/>
<path d="M280.4 275.9 Q264.5 298.4 243.6 321.7" stroke="#c47030" stroke-width="0.69" stroke-opacity="0.8"/>
<path d="M298.6 333.2 Q306.6 346.8 315.3 356.1" stroke="#7a4018" stroke-width="0.94" stroke-opacity="0.8"/>
<path d="M302.4 295.9 Q313.7 320.6 329.0 342.7" stroke="#c87a34" stroke-width="0.98" stroke-opacity="0.8"/>
<path d="M272.8 315.0 Q257.4 321.7 246.7 337.6" stroke="#e09a50" stroke-width="0.79" stroke-opacity="0.8"/>
<path d="M263.7 327.3 Q250.3 331.3 243.2 350.6" stroke="#6a3410" stroke-width="0.86" stroke-opacity="0.8"/>
<path d="M269.9 319.5 Q249.7 323.5 243.5 340.5" stroke="#b06020" stroke-width="1.08" stroke-opacity="0.8"/>
<path d="M299.7 292.2 Q312.2 319.0 322.2 336.2" stroke="#4a2008" stroke-width="1.06" stroke-opacity="0.8"/>
<path d="M287.0 272.2 Q271.2 293.2 251.2 318.9" stroke="#5a2a0a" stroke-width="1.12" stroke-opacity="0.8"/>
<path d="M295.8 260.4 Q326.9 277.8 347.8 312.5" stroke="#4a2008" stroke-width="0.73" stroke-opacity="0.8"/>
<path d="M321.5 280.4 Q352.4 305.4 368.9 349.7" stroke="#b86a28" stroke-width="0.84" stroke-opacity="0.8"/>
<path d="M293.0 320.1 Q297.9 337.6 314.0 347.8" stroke="#4a2008" stroke-width="0.64" stroke-opacity="0.8"/>
<path d="M292.2 327.4 Q296.9 341.0 308.4 350.9" stroke="#c87a34" stroke-width="1.15" stroke-opacity="0.8"/>
<path d="M295.7 329.7 Q303.4 346.1 316.3 355.3" stroke="#5a2a0a" stroke-width="1.04" stroke-opacity="0.8"/>
<path d="M278.3 285.4 Q264.2 306.3 243.0 332.0" stroke="#7a4018" stroke-width="0.63" stroke-opacity="0.8"/>
<path d="M283.6 282.7 Q269.1 301.5 249.8 323.3" stroke="#c47030" stroke-width="0.82" stroke-opacity="0.8"/>
<path d="M275.9 317.3 Q251.5 322.0 247.1 340.8" stroke="#7a4018" stroke-width="1.06" stroke-opacity="0.8"/>
<path d="M298.3 323.0 Q308.0 340.5 321.5 348.1" stroke="#b86a28" stroke-width="1.13" stroke-opacity="0.8"/>
<path d="M290.9 323.1 Q301.4 336.8 307.7 350.0" stroke="#b86a28" stroke-width="0.95" stroke-opacity="0.8"/>
<path d="M282.1 316.2 Q258.0 318.9 246.4 339.5" stroke="#c47030" stroke-width="1.18" stroke-opacity="0.8"/>
<path d="M289.6 326.5 Q296.4 341.2 312.2 353.5" stroke="#4a2008" stroke-width="0.74" stroke-opacity="0.8"/>
<path d="M285.3 271.4 Q270.9 290.3 251.7 314.4" stroke="#7a4018" stroke-width="0.74" stroke-opacity="0.8"/>
<path d="M288.5 273.2 Q272.4 294.4 250.1 324.4" stroke="#6a3410" stroke-width="1.11" stroke-opacity="0.8"/>
<path d="M294.3 268.7 Q275.3 289.6 255.0 316.6" stroke="#7a4018" stroke-width="1.20" stroke-opacity="0.8"/>
<path d="M280.9 283.8 Q260.0 310.6 242.3 331.9" stroke="#b86a28" stroke-width="1.01" stroke-opacity="0.8"/>
<path d="M274.2 318.0 Q253.1 323.4 245.7 337.4" stroke="#7a4018" stroke-width="0.68" stroke-opacity="0.8"/>
<path d="M290.0 274.6 Q269.3 301.2 250.8 327.8" stroke="#4a2008" stroke-width="0.65" stroke-opacity="0.8"/>
<path d="M264.9 326.2 Q252.1 330.7 243.1 348.3" stroke="#d08038" stroke-width="0.94" stroke-opacity="0.8"/>
<path d="M299.6 301.6 Q314.4 332.0 330.7 351.6" stroke="#5a2a0a" stroke-width="1.24" stroke-opacity="0.8"/>
<path d="M265.1 327.4 Q247.3 333.4 243.2 352.6" stroke="#e8b070" stroke-width="1.01" stroke-opacity="0.8"/>
<path d="M301.4 259.2 Q342.2 277.2 363.6 329.8" stroke="#6a3410" stroke-width="1.16" stroke-opacity="0.8"/>
<path d="M279.3 313.9 Q256.0 320.0 249.8 335.6" stroke="#5a2a0a" stroke-width="0.99" stroke-opacity="0.8"/>
<path d="M287.9 324.6 Q298.7 342.3 311.0 353.0" stroke="#c47030" stroke-width="0.95" stroke-opacity="0.8"/>
<path d="M282.9 286.1 Q268.2 307.1 248.5 331.5" stroke="#7a4018" stroke-width="0.79" stroke-opacity="0.8"/>
<path d="M304.7 265.8 Q332.6 280.7 350.5 314.9" stroke="#6a3410" stroke-width="1.10" stroke-opacity="0.8"/>
<path d="M263.7 326.8 Q248.1 331.8 243.3 352.1" stroke="#b86a28" stroke-width="1.25" stroke-opacity="0.8"/>
<path d="M285.3 286.5 Q264.1 313.7 244.2 336.8" stroke="#5a2a0a" stroke-width="1.18" stroke-opacity="0.8"/>
<path d="M298.4 288.0 Q311.9 318.8 326.9 342.5" stroke="#b06020" stroke-width="1.05" stroke-opacity="0.8"/>
<path d="M287.0 271.4 Q265.4 300.2 245.8 325.9" stroke="#b06020" stroke-width="1.15" stroke-opacity="0.8"/>
<path d="M268.4 315.8 Q251.2 324.3 247.3 336.2" stroke="#4a2008" stroke-width="1.17" stroke-opacity="0.8"/>
<path d="M272.8 326.6 Q253.8 331.6 253.1 354.9" stroke="#c87a34" stroke-width="0.95" stroke-opacity="0.8"/>
<path d="M279.5 285.1 Q263.2 303.6 249.8 325.4" stroke="#7a4018" stroke-width="1.19" stroke-opacity="0.8"/>
<path d="M273.0 322.5 Q253.0 328.6 246.0 340.6" stroke="#b86a28" stroke-width="0.93" stroke-opacity="0.8"/>
<path d="M296.5 316.0 Q307.7 337.2 322.6 349.1" stroke="#7a4018" stroke-width="0.77" stroke-opacity="0.8"/>
<path d="M304.9 293.1 Q315.9 318.3 335.4 343.3" stroke="#c87a34" stroke-width="1.21" stroke-opacity="0.8"/>
<path d="M300.0 264.0 Q333.4 279.8 358.3 321.3" stroke="#b06020" stroke-width="0.99" stroke-opacity="0.8"/>
<path d="M305.6 289.0 Q322.5 321.1 336.8 342.8" stroke="#6a3410" stroke-width="1.04" stroke-opacity="0.8"/>
<path d="M287.7 280.7 Q270.0 299.6 250.8 324.1" stroke="#e09a50" stroke-width="0.85" stroke-opacity="0.8"/>
<path d="M272.5 320.3 Q247.6 326.4 243.2 345.3" stroke="#d88c40" stroke-width="1.20" stroke-opacity="0.8"/>
<path d="M290.9 330.0 Q297.1 345.4 309.7 352.9" stroke="#4a2008" stroke-width="0.75" stroke-opacity="0.8"/>
<path d="M285.9 263.9 Q271.5 285.3 251.2 306.8" stroke="#4a2008" stroke-width="1.20" stroke-opacity="0.8"/>
<path d="M299.5 290.9 Q311.7 315.2 326.6 336.9" stroke="#b86a28" stroke-width="0.74" stroke-opacity="0.8"/>
<path d="M303.2 263.8 Q331.4 283.7 353.7 321.2" stroke="#c47030" stroke-width="1.28" stroke-opacity="0.8"/>
<path d="M270.6 316.7 Q254.5 320.8 248.5 334.2" stroke="#c47030" stroke-width="1.28" stroke-opacity="0.8"/>
<path d="M295.8 279.1 Q314.9 320.1 335.1 346.4" stroke="#c47030" stroke-width="1.09" stroke-opacity="0.8"/>
<path d="M314.9 278.6 Q342.2 301.9 361.1 345.0" stroke="#e8b070" stroke-width="1.00" stroke-opacity="0.8"/>
<path d="M300.6 286.9 Q312.4 316.1 333.3 341.0" stroke="#b86a28" stroke-width="0.84" stroke-opacity="0.8"/>
<path d="M307.3 267.3 Q343.9 292.6 367.9 342.9" stroke="#5a2a0a" stroke-width="0.66" stroke-opacity="0.8"/>
<path d="M288.0 286.1 Q268.7 310.7 250.5 329.3" stroke="#e09a50" stroke-width="1.24" stroke-opacity="0.8"/>
<path d="M285.7 273.7 Q268.4 296.5 249.5 323.4" stroke="#e09a50" stroke-width="1.24" stroke-opacity="0.8"/>
<path d="M292.0 277.5 Q310.5 317.6 329.0 345.2" stroke="#4a2008" stroke-width="0.81" stroke-opacity="0.8"/>
<path d="M290.9 323.5 Q301.2 338.1 308.1 348.8" stroke="#6a3410" stroke-width="0.61" stroke-opacity="0.8"/>
<path d="M316.6 274.3 Q341.9 294.3 359.5 331.5" stroke="#6a3410" stroke-width="1.12" stroke-opacity="0.8"/>
<path d="M284.0 323.2 Q261.7 325.5 251.6 339.1" stroke="#5a2a0a" stroke-width="0.92" stroke-opacity="0.8"/>
<path d="M287.0 315.5 Q259.7 318.0 257.1 333.2" stroke="#e09a50" stroke-width="1.06" stroke-opacity="0.8"/>
<path d="M294.5 268.4 Q273.0 301.4 245.1 331.5" stroke="#c87a34" stroke-width="0.74" stroke-opacity="0.8"/>
<path d="M305.5 260.9 Q338.3 278.8 358.1 326.6" stroke="#4a2008" stroke-width="0.99" stroke-opacity="0.8"/>
<path d="M304.4 270.0 Q333.2 289.7 355.5 333.0" stroke="#6a3410" stroke-width="1.24" stroke-opacity="0.8"/>
<path d="M281.8 283.8 Q264.0 304.2 248.0 325.6" stroke="#4a2008" stroke-width="0.84" stroke-opacity="0.8"/>
<path d="M289.9 277.8 Q269.2 307.6 246.3 333.2" stroke="#4a2008" stroke-width="0.69" stroke-opacity="0.8"/>
<path d="M320.5 272.3 Q349.3 297.4 366.0 335.4" stroke="#d88c40" stroke-width="0.84" stroke-opacity="0.8"/>
<path d="M273.7 317.8 Q255.9 321.1 249.4 338.9" stroke="#d08038" stroke-width="1.19" stroke-opacity="0.8"/>
<path d="M283.9 274.6 Q269.7 294.0 253.6 317.5" stroke="#c87a34" stroke-width="0.69" stroke-opacity="0.8"/>
<path d="M292.5 285.7 Q309.3 319.9 330.4 346.6" stroke="#4a2008" stroke-width="0.82" stroke-opacity="0.8"/>
<path d="M307.8 271.6 Q339.1 296.1 355.1 339.4" stroke="#7a4018" stroke-width="0.71" stroke-opacity="0.8"/>
<path d="M298.1 330.5 Q305.5 343.4 317.0 351.8" stroke="#c87a34" stroke-width="1.04" stroke-opacity="0.8"/>
<path d="M269.9 314.8 Q246.4 317.6 244.0 335.2" stroke="#4a2008" stroke-width="0.65" stroke-opacity="0.8"/>
<path d="M299.7 277.4 Q311.8 304.6 329.5 331.5" stroke="#c87a34" stroke-width="0.68" stroke-opacity="0.8"/>
<path d="M275.8 315.5 Q258.7 318.0 253.3 333.5" stroke="#5a2a0a" stroke-width="0.95" stroke-opacity="0.8"/>
<path d="M302.3 265.2 Q333.9 282.5 357.7 327.2" stroke="#e8b070" stroke-width="0.77" stroke-opacity="0.8"/>
<path d="M277.0 289.2 Q255.9 313.2 235.9 342.0" stroke="#b06020" stroke-width="0.76" stroke-opacity="0.8"/>
<path d="M278.5 282.0 Q265.8 305.0 245.4 326.2" stroke="#7a4018" stroke-width="0.86" stroke-opacity="0.8"/>
<path d="M262.5 320.4 Q244.3 324.3 239.8 345.7" stroke="#4a2008" stroke-width="1.04" stroke-opacity="0.8"/>
<path d="M279.9 322.5 Q256.7 325.7 250.8 334.5" stroke="#6a3410" stroke-width="0.89" stroke-opacity="0.8"/>
<path d="M289.7 327.3 Q300.1 347.0 313.2 353.8" stroke="#c47030" stroke-width="0.82" stroke-opacity="0.8"/>
<path d="M296.4 321.9 Q305.0 340.6 317.4 352.2" stroke="#b86a28" stroke-width="0.89" stroke-opacity="0.8"/>
<path d="M290.7 276.0 Q269.9 301.7 252.0 328.3" stroke="#e09a50" stroke-width="1.23" stroke-opacity="0.8"/>
<path d="M279.7 280.6 Q261.6 305.5 244.2 329.3" stroke="#6a3410" stroke-width="1.29" stroke-opacity="0.8"/>
<path d="M309.3 266.0 Q341.9 286.0 364.8 333.7" stroke="#4a2008" stroke-width="0.75" stroke-opacity="0.8"/>
<path d="M288.9 280.7 Q275.4 301.9 255.9 323.4" stroke="#a85c1c" stroke-width="1.03" stroke-opacity="0.8"/>
<path d="M293.6 281.8 Q307.0 309.9 317.0 332.8" stroke="#7a4018" stroke-width="1.27" stroke-opacity="0.8"/>
<path d="M283.6 280.4 Q267.9 303.5 247.4 328.4" stroke="#6a3410" stroke-width="0.79" stroke-opacity="0.8"/>
<path d="M300.0 289.7 Q310.0 313.8 324.9 338.0" stroke="#4a2008" stroke-width="1.14" stroke-opacity="0.8"/>
<path d="M292.2 268.4 Q271.3 292.8 253.6 323.1" stroke="#7a4018" stroke-width="0.72" stroke-opacity="0.8"/>
<path d="M284.1 283.6 Q269.0 308.9 246.6 331.7" stroke="#c47030" stroke-width="0.86" stroke-opacity="0.8"/>
<path d="M283.7 318.6 Q263.1 319.2 250.7 338.2" stroke="#e8b070" stroke-width="0.81" stroke-opacity="0.8"/>
<path d="M286.2 316.2 Q256.2 320.8 253.7 339.8" stroke="#e09a50" stroke-width="0.75" stroke-opacity="0.8"/>
<path d="M299.2 270.0 Q326.2 288.1 343.9 314.2" stroke="#e09a50" stroke-width="1.12" stroke-opacity="0.8"/>
<path d="M274.3 282.0 Q255.5 302.8 241.3 328.4" stroke="#6a3410" stroke-width="0.85" stroke-opacity="0.8"/>
<path d="M318.6 274.7 Q342.7 296.2 361.4 332.8" stroke="#7a4018" stroke-width="1.29" stroke-opacity="0.8"/>
<path d="M285.0 283.7 Q269.9 304.5 250.8 329.7" stroke="#b86a28" stroke-width="1.12" stroke-opacity="0.8"/>
<path d="M293.4 273.8 Q304.8 299.0 315.6 318.8" stroke="#7a4018" stroke-width="0.70" stroke-opacity="0.8"/>
<path d="M290.6 277.6 Q271.7 303.1 253.9 324.7" stroke="#5a2a0a" stroke-width="1.06" stroke-opacity="0.8"/>
<path d="M270.4 317.3 Q244.8 326.3 243.7 345.3" stroke="#4a2008" stroke-width="0.72" stroke-opacity="0.8"/>
<path d="M299.3 327.9 Q304.0 341.5 313.7 347.2" stroke="#b06020" stroke-width="0.64" stroke-opacity="0.8"/>
<path d="M282.2 314.4 Q255.0 316.5 250.2 335.6" stroke="#4a2008" stroke-width="1.08" stroke-opacity="0.8"/>
<path d="M297.7 290.5 Q312.4 323.4 330.2 345.2" stroke="#d88c40" stroke-width="1.08" stroke-opacity="0.8"/>
<path d="M315.9 272.4 Q340.6 298.3 359.1 337.6" stroke="#e8b070" stroke-width="0.69" stroke-opacity="0.8"/>
<path d="M273.1 323.4 Q251.2 330.7 245.8 343.3" stroke="#5a2a0a" stroke-width="1.13" stroke-opacity="0.8"/>
<path d="M305.4 267.4 Q333.8 285.0 356.5 323.0" stroke="#c87a34" stroke-width="0.69" stroke-opacity="0.8"/>
<path d="M289.2 317.2 Q297.3 337.8 311.9 345.9" stroke="#c47030" stroke-width="0.72" stroke-opacity="0.8"/>
<path d="M297.8 291.9 Q310.6 320.6 324.1 339.4" stroke="#b86a28" stroke-width="0.78" stroke-opacity="0.8"/>
<path d="M281.3 321.1 Q261.4 327.8 256.8 336.8" stroke="#b86a28" stroke-width="1.06" stroke-opacity="0.8"/>
<path d="M284.4 280.0 Q263.4 306.0 243.9 331.2" stroke="#e09a50" stroke-width="0.62" stroke-opacity="0.8"/>
<path d="M287.1 282.9 Q273.5 305.6 249.8 330.6" stroke="#b86a28" stroke-width="0.95" stroke-opacity="0.8"/>
<path d="M314.6 278.0 Q341.2 298.1 356.6 335.2" stroke="#a85c1c" stroke-width="1.04" stroke-opacity="0.8"/>
<path d="M314.7 280.4 Q338.4 299.7 356.4 332.9" stroke="#d08038" stroke-width="0.93" stroke-opacity="0.8"/>
<path d="M282.8 270.5 Q263.7 293.6 245.7 318.4" stroke="#6a3410" stroke-width="1.29" stroke-opacity="0.8"/>
<path d="M281.2 312.3 Q256.0 317.8 247.2 333.0" stroke="#7a4018" stroke-width="1.01" stroke-opacity="0.8"/>
<path d="M304.9 303.4 Q320.5 327.6 334.5 349.2" stroke="#e09a50" stroke-width="0.63" stroke-opacity="0.8"/>
<path d="M267.8 320.2 Q247.1 324.4 243.2 344.6" stroke="#4a2008" stroke-width="1.28" stroke-opacity="0.8"/>
<path d="M285.4 313.5 Q259.0 319.1 254.8 337.5" stroke="#6a3410" stroke-width="0.97" stroke-opacity="0.8"/>
<path d="M269.1 324.1 Q251.0 329.9 247.0 343.8" stroke="#e8b070" stroke-width="0.63" stroke-opacity="0.8"/>
<path d="M293.8 268.4 Q275.1 292.4 249.3 321.9" stroke="#5a2a0a" stroke-width="0.70" stroke-opacity="0.8"/>
<path d="M293.1 321.8 Q298.7 343.3 312.5 353.7" stroke="#7a4018" stroke-width="1.11" stroke-opacity="0.8"/>
<path d="M301.2 291.7 Q314.3 321.5 327.4 340.7" stroke="#4a2008" stroke-width="0.86" stroke-opacity="0.8"/>
<path d="M288.9 317.6 Q296.4 335.3 314.4 345.2" stroke="#d08038" stroke-width="1.14" stroke-opacity="0.8"/>
<path d="M278.7 314.5 Q254.7 321.6 252.2 334.3" stroke="#d88c40" stroke-width="0.93" stroke-opacity="0.8"/>
<path d="M271.3 318.6 Q249.1 322.3 244.1 343.2" stroke="#b86a28" stroke-width="1.25" stroke-opacity="0.8"/>
<path d="M264.8 324.5 Q244.8 332.2 244.1 349.5" stroke="#c47030" stroke-width="0.70" stroke-opacity="0.8"/>
<path d="M290.7 277.6 Q272.0 300.0 251.4 326.8" stroke="#c87a34" stroke-width="0.70" stroke-opacity="0.8"/>
<path d="M290.2 273.0 Q304.2 301.6 319.1 329.7" stroke="#d08038" stroke-width="1.26" stroke-opacity="0.8"/>
<path d="M297.6 324.4 Q307.1 339.7 319.3 348.9" stroke="#d88c40" stroke-width="1.23" stroke-opacity="0.8"/>
<path d="M279.4 317.1 Q255.6 323.2 254.0 339.2" stroke="#7a4018" stroke-width="0.91" stroke-opacity="0.8"/>
<path d="M281.3 282.4 Q259.2 305.7 238.3 335.9" stroke="#e09a50" stroke-width="0.85" stroke-opacity="0.8"/>
<path d="M287.2 284.1 Q271.0 306.1 250.2 336.3" stroke="#e8b070" stroke-width="0.66" stroke-opacity="0.8"/>
<path d="M267.1 327.2 Q247.6 333.4 246.5 349.3" stroke="#7a4018" stroke-width="1.29" stroke-opacity="0.8"/>
<path d="M422.9 210.6 Q435.8 250.9 434.7 309.8" stroke="#4a4846" stroke-width="0.99" stroke-opacity="0.6"/>
<path d="M415.3 216.0 Q420.5 247.2 420.4 297.5" stroke="#4a4846" stroke-width="0.90" stroke-opacity="0.6"/>
<path d="M416.3 234.3 Q421.3 268.5 420.2 319.6" stroke="#6a6866" stroke-width="0.93" stroke-opacity="0.6"/>
<path d="M409.9 238.8 Q416.8 275.9 413.3 320.3" stroke="#4a4846" stroke-width="1.28" stroke-opacity="0.6"/>
<path d="M421.4 215.6 Q431.6 251.6 429.8 294.7" stroke="#5a5856" stroke-width="1.06" stroke-opacity="0.6"/>
<path d="M411.6 226.4 Q416.3 266.5 417.3 323.0" stroke="#5a5856" stroke-width="1.06" stroke-opacity="0.6"/>
<path d="M412.9 205.3 Q421.6 240.9 419.4 292.6" stroke="#8a8884" stroke-width="1.59" stroke-opacity="0.6"/>
<path d="M408.7 197.8 Q419.8 241.5 418.2 315.7" stroke="#8a8884" stroke-width="1.30" stroke-opacity="0.6"/>
<path d="M411.4 240.2 Q414.8 276.2 413.3 324.3" stroke="#5a5856" stroke-width="1.42" stroke-opacity="0.6"/>
<path d="M425.1 223.8 Q430.7 265.0 429.8 314.8" stroke="#8a8884" stroke-width="1.46" stroke-opacity="0.6"/>
<path d="M423.1 232.0 Q429.0 267.4 430.5 316.7" stroke="#6a6866" stroke-width="1.46" stroke-opacity="0.6"/>
<path d="M409.4 235.1 Q411.0 269.0 411.6 310.0" stroke="#b0aca8" stroke-width="0.95" stroke-opacity="0.6"/>
<path d="M413.4 213.6 Q418.8 253.9 418.5 310.5" stroke="#6a6866" stroke-width="1.12" stroke-opacity="0.6"/>
<path d="M411.8 244.1 Q413.7 281.9 412.7 331.8" stroke="#b0aca8" stroke-width="1.35" stroke-opacity="0.6"/>
<path d="M408.9 241.2 Q411.0 277.0 408.8 324.4" stroke="#6a6866" stroke-width="0.88" stroke-opacity="0.6"/>
<path d="M416.4 216.6 Q422.8 251.4 425.9 304.0" stroke="#4a4846" stroke-width="1.01" stroke-opacity="0.6"/>
<path d="M418.5 206.9 Q427.4 236.5 427.4 280.6" stroke="#8a8884" stroke-width="1.30" stroke-opacity="0.6"/>
<path d="M421.0 213.3 Q429.4 252.4 425.6 310.2" stroke="#5a5856" stroke-width="1.50" stroke-opacity="0.6"/>
<path d="M413.3 213.1 Q423.8 250.5 419.2 311.9" stroke="#b0aca8" stroke-width="1.34" stroke-opacity="0.6"/>
<path d="M411.6 246.6 Q417.6 279.1 412.3 327.8" stroke="#6a6866" stroke-width="1.57" stroke-opacity="0.6"/>
<path d="M410.3 239.0 Q413.3 272.3 412.6 313.2" stroke="#6a6866" stroke-width="1.02" stroke-opacity="0.6"/>
<path d="M416.3 203.6 Q427.3 249.2 427.9 316.8" stroke="#8a8884" stroke-width="0.83" stroke-opacity="0.6"/>
<path d="M419.5 224.5 Q429.9 261.6 429.7 310.7" stroke="#6a6866" stroke-width="1.43" stroke-opacity="0.6"/>
<path d="M422.1 210.2 Q432.1 241.9 433.8 289.1" stroke="#b0aca8" stroke-width="1.39" stroke-opacity="0.6"/>
<path d="M412.5 210.0 Q423.6 251.0 422.8 322.1" stroke="#b0aca8" stroke-width="1.46" stroke-opacity="0.6"/>
<path d="M414.4 220.0 Q420.3 252.7 417.5 290.0" stroke="#6a6866" stroke-width="0.89" stroke-opacity="0.6"/>
<path d="M417.8 215.2 Q429.2 252.8 427.0 311.2" stroke="#8a8884" stroke-width="1.41" stroke-opacity="0.6"/>
<path d="M423.4 212.9 Q431.1 249.0 434.1 297.9" stroke="#b0aca8" stroke-width="0.96" stroke-opacity="0.6"/>
<path d="M406.8 224.6 Q415.0 265.8 414.6 318.2" stroke="#8a8884" stroke-width="1.29" stroke-opacity="0.6"/>
<path d="M417.6 219.0 Q426.8 262.1 427.9 316.7" stroke="#4a4846" stroke-width="1.28" stroke-opacity="0.6"/>
<path d="M411.7 235.2 Q416.4 266.3 415.0 313.1" stroke="#4a4846" stroke-width="0.92" stroke-opacity="0.6"/>
<path d="M415.0 193.7 Q427.4 238.0 429.2 309.9" stroke="#b0aca8" stroke-width="1.09" stroke-opacity="0.6"/>
<path d="M403.7 221.5 Q414.3 262.3 409.3 326.4" stroke="#4a4846" stroke-width="1.16" stroke-opacity="0.6"/>
<path d="M407.0 231.5 Q414.2 267.7 410.1 321.4" stroke="#b0aca8" stroke-width="1.21" stroke-opacity="0.6"/>
<path d="M412.0 242.0 Q414.7 275.2 415.3 320.8" stroke="#5a5856" stroke-width="0.86" stroke-opacity="0.6"/>
<path d="M417.0 247.6 Q418.6 278.0 419.0 321.9" stroke="#8a8884" stroke-width="0.84" stroke-opacity="0.6"/>
<path d="M412.1 210.6 Q420.3 247.9 418.2 297.4" stroke="#5a5856" stroke-width="1.24" stroke-opacity="0.6"/>
<path d="M413.6 199.6 Q421.0 233.6 423.2 289.7" stroke="#8a8884" stroke-width="1.33" stroke-opacity="0.6"/>
<path d="M413.5 234.1 Q420.0 269.9 418.0 322.5" stroke="#4a4846" stroke-width="0.86" stroke-opacity="0.6"/>
<path d="M404.2 214.6 Q412.7 253.7 412.3 302.6" stroke="#4a4846" stroke-width="1.49" stroke-opacity="0.6"/>
<path d="M412.6 236.7 Q415.8 270.2 415.2 318.8" stroke="#4a4846" stroke-width="1.04" stroke-opacity="0.6"/>
<path d="M414.3 227.0 Q421.1 266.2 417.8 321.6" stroke="#4a4846" stroke-width="1.59" stroke-opacity="0.6"/>
<path d="M410.7 217.7 Q419.9 257.4 419.1 310.0" stroke="#4a4846" stroke-width="0.85" stroke-opacity="0.6"/>
<path d="M407.3 221.0 Q414.6 260.1 414.2 316.2" stroke="#8a8884" stroke-width="1.13" stroke-opacity="0.6"/>
<path d="M418.8 219.6 Q427.3 255.8 426.5 307.6" stroke="#6a6866" stroke-width="0.91" stroke-opacity="0.6"/>
<path d="M423.4 207.2 Q433.9 250.1 435.2 306.7" stroke="#4a4846" stroke-width="1.28" stroke-opacity="0.6"/>
<path d="M423.4 222.5 Q433.2 260.7 434.1 314.3" stroke="#6a6866" stroke-width="0.93" stroke-opacity="0.6"/>
<path d="M426.5 229.2 Q432.9 269.8 435.5 330.2" stroke="#4a4846" stroke-width="1.21" stroke-opacity="0.6"/>
<path d="M419.6 210.6 Q429.7 256.9 427.3 324.0" stroke="#8a8884" stroke-width="0.87" stroke-opacity="0.6"/>
<path d="M405.1 222.7 Q413.5 257.1 413.6 302.4" stroke="#b0aca8" stroke-width="1.59" stroke-opacity="0.6"/>
<path d="M421.4 230.9 Q429.3 267.4 429.7 318.8" stroke="#b0aca8" stroke-width="1.50" stroke-opacity="0.6"/>
<path d="M410.6 205.4 Q418.6 245.4 422.0 312.8" stroke="#8a8884" stroke-width="1.06" stroke-opacity="0.6"/>
<path d="M421.6 212.6 Q433.3 259.0 434.6 322.4" stroke="#b0aca8" stroke-width="0.95" stroke-opacity="0.6"/>
<path d="M404.0 214.9 Q412.7 245.3 410.4 291.8" stroke="#5a5856" stroke-width="1.23" stroke-opacity="0.6"/>
<path d="M409.7 236.8 Q414.3 270.4 413.8 313.8" stroke="#5a5856" stroke-width="1.53" stroke-opacity="0.6"/>
<path d="M420.5 212.2 Q429.4 246.3 434.0 292.0" stroke="#8a8884" stroke-width="1.23" stroke-opacity="0.6"/>
<path d="M414.6 232.4 Q417.3 269.7 417.8 323.6" stroke="#6a6866" stroke-width="1.05" stroke-opacity="0.6"/>
<path d="M411.0 219.7 Q418.5 261.2 416.6 315.5" stroke="#4a4846" stroke-width="1.39" stroke-opacity="0.6"/>
<path d="M413.4 240.0 Q415.0 269.8 416.9 314.3" stroke="#b0aca8" stroke-width="1.25" stroke-opacity="0.6"/>
<path d="M417.8 210.5 Q424.8 253.1 427.2 317.7" stroke="#8a8884" stroke-width="1.26" stroke-opacity="0.6"/>
<path d="M381.2 233.2 Q408.4 249.1 423.6 273.2" stroke="#f0c488" stroke-width="0.74" stroke-opacity="0.85"/>
<path d="M384.9 218.0 Q405.0 234.4 420.1 267.6" stroke="#d88c40" stroke-width="1.16" stroke-opacity="0.85"/>
<path d="M378.7 243.6 Q398.2 255.5 407.2 290.0" stroke="#c87a34" stroke-width="1.09" stroke-opacity="0.85"/>
<path d="M368.3 229.5 Q401.2 243.7 418.9 269.2" stroke="#b86a28" stroke-width="0.72" stroke-opacity="0.85"/>
<path d="M392.0 230.0 Q415.5 252.1 422.0 287.2" stroke="#f0c488" stroke-width="0.91" stroke-opacity="0.85"/>
<path d="M361.9 229.0 Q398.0 244.0 421.1 268.9" stroke="#f0c488" stroke-width="0.80" stroke-opacity="0.85"/>
<path d="M380.4 217.0 Q413.7 237.8 423.6 293.7" stroke="#d88c40" stroke-width="1.27" stroke-opacity="0.85"/>
<path d="M400.1 255.0 Q418.8 275.8 419.2 318.4" stroke="#f0c488" stroke-width="0.77" stroke-opacity="0.85"/>
<path d="M381.1 231.1 Q403.6 245.0 422.8 266.0" stroke="#b86a28" stroke-width="0.71" stroke-opacity="0.85"/>
<path d="M370.4 229.7 Q395.7 241.6 411.8 258.8" stroke="#e8b070" stroke-width="1.08" stroke-opacity="0.85"/>
<path d="M376.2 228.1 Q406.8 243.5 426.6 268.7" stroke="#b86a28" stroke-width="0.68" stroke-opacity="0.85"/>
<path d="M392.3 233.0 Q413.1 255.4 423.0 302.4" stroke="#b86a28" stroke-width="0.92" stroke-opacity="0.85"/>
<path d="M383.2 247.0 Q408.4 268.4 412.3 318.8" stroke="#f0c488" stroke-width="1.08" stroke-opacity="0.85"/>
<path d="M379.4 217.9 Q401.4 231.0 415.8 261.8" stroke="#d88c40" stroke-width="1.30" stroke-opacity="0.85"/>
<path d="M368.0 231.6 Q399.2 246.7 418.4 270.7" stroke="#d88c40" stroke-width="0.96" stroke-opacity="0.85"/>
<path d="M379.0 232.6 Q405.7 243.8 419.8 267.1" stroke="#e09a50" stroke-width="0.72" stroke-opacity="0.85"/>
<path d="M377.3 225.4 Q403.5 246.4 414.8 287.5" stroke="#b86a28" stroke-width="0.65" stroke-opacity="0.85"/>
<path d="M379.2 236.0 Q404.6 246.9 419.4 269.9" stroke="#a85c1c" stroke-width="1.22" stroke-opacity="0.85"/>
<path d="M386.5 233.3 Q403.8 256.1 411.1 291.4" stroke="#f0c488" stroke-width="0.79" stroke-opacity="0.85"/>
<path d="M374.7 216.6 Q397.2 231.7 408.2 263.8" stroke="#f0c488" stroke-width="1.24" stroke-opacity="0.85"/>
<path d="M371.9 221.6 Q403.9 240.8 412.8 286.2" stroke="#b86a28" stroke-width="0.68" stroke-opacity="0.85"/>
<path d="M378.4 218.4 Q403.3 238.3 416.9 285.1" stroke="#e09a50" stroke-width="0.81" stroke-opacity="0.85"/>
<path d="M368.7 226.3 Q396.5 237.4 416.0 259.1" stroke="#a85c1c" stroke-width="0.75" stroke-opacity="0.85"/>
<path d="M362.5 224.0 Q400.9 239.9 426.9 268.9" stroke="#e8b070" stroke-width="0.79" stroke-opacity="0.85"/>
<path d="M385.6 246.3 Q410.3 263.6 417.8 307.5" stroke="#f0c488" stroke-width="0.90" stroke-opacity="0.85"/>
<path d="M380.6 241.9 Q411.5 262.7 414.3 325.4" stroke="#d88c40" stroke-width="1.15" stroke-opacity="0.85"/>
<path d="M385.1 223.9 Q403.0 246.5 414.1 281.9" stroke="#d88c40" stroke-width="1.07" stroke-opacity="0.85"/>
<path d="M386.2 241.0 Q407.9 257.5 412.6 290.6" stroke="#f0c488" stroke-width="0.62" stroke-opacity="0.85"/>
<path d="M375.4 230.9 Q405.3 244.0 427.0 270.5" stroke="#e8b070" stroke-width="0.64" stroke-opacity="0.85"/>
<path d="M375.8 233.0 Q402.7 244.2 422.0 270.9" stroke="#a85c1c" stroke-width="1.16" stroke-opacity="0.85"/>
<path d="M369.0 230.9 Q395.3 240.8 410.3 258.0" stroke="#a85c1c" stroke-width="0.83" stroke-opacity="0.85"/>
<path d="M389.6 231.8 Q414.9 246.2 428.9 265.5" stroke="#d88c40" stroke-width="0.77" stroke-opacity="0.85"/>
<path d="M373.7 226.8 Q406.8 240.0 424.1 265.1" stroke="#b86a28" stroke-width="0.76" stroke-opacity="0.85"/>
<path d="M374.2 234.3 Q404.8 248.8 420.0 269.7" stroke="#a85c1c" stroke-width="0.86" stroke-opacity="0.85"/>
<path d="M392.8 249.8 Q412.0 271.1 413.3 307.4" stroke="#e09a50" stroke-width="0.86" stroke-opacity="0.85"/>
<path d="M386.6 222.1 Q406.0 239.3 417.8 271.8" stroke="#c87a34" stroke-width="1.28" stroke-opacity="0.85"/>
<path d="M395.7 244.4 Q415.7 263.5 421.2 312.6" stroke="#b86a28" stroke-width="1.06" stroke-opacity="0.85"/>
<path d="M363.0 230.2 Q400.3 245.2 421.8 268.1" stroke="#f0c488" stroke-width="0.99" stroke-opacity="0.85"/>
<path d="M365.4 226.5 Q403.2 241.7 424.6 269.3" stroke="#d88c40" stroke-width="0.97" stroke-opacity="0.85"/>
<path d="M391.7 226.3 Q409.9 243.9 423.1 282.6" stroke="#f0c488" stroke-width="0.70" stroke-opacity="0.85"/>
<path d="M387.9 240.3 Q410.5 257.3 418.4 289.8" stroke="#e8b070" stroke-width="0.92" stroke-opacity="0.85"/>
<path d="M383.6 236.5 Q412.8 253.7 418.9 315.1" stroke="#e09a50" stroke-width="0.97" stroke-opacity="0.85"/>
<path d="M386.3 237.4 Q409.2 249.2 427.9 272.4" stroke="#a85c1c" stroke-width="1.06" stroke-opacity="0.85"/>
<path d="M367.7 232.8 Q395.6 241.3 409.9 262.0" stroke="#a85c1c" stroke-width="0.73" stroke-opacity="0.85"/>
<path d="M361.8 224.4 Q402.4 236.7 423.1 268.8" stroke="#b86a28" stroke-width="1.19" stroke-opacity="0.85"/>
<path d="M389.9 244.8 Q409.7 262.3 413.3 297.4" stroke="#b86a28" stroke-width="0.71" stroke-opacity="0.85"/>
<path d="M395.0 252.0 Q414.4 270.4 421.8 318.2" stroke="#c87a34" stroke-width="1.21" stroke-opacity="0.85"/>
<path d="M385.9 226.9 Q409.8 249.6 417.9 294.8" stroke="#e09a50" stroke-width="1.20" stroke-opacity="0.85"/>
<path d="M384.6 225.5 Q407.9 247.8 413.0 286.4" stroke="#b86a28" stroke-width="1.06" stroke-opacity="0.85"/>
<path d="M388.8 227.1 Q409.7 245.8 421.8 286.7" stroke="#c87a34" stroke-width="0.73" stroke-opacity="0.85"/>
</g>
<path d="M313 166 Q322 158 333 160 Q337 166 334 171 Q325 176 318 174 Z" fill="#ee8078" filter="url(#b1)"/>
<path d="M316 165 L320 173 M322 162 L326 172 M328 161 L331 170" stroke="#f6b0a8" stroke-width="0.8" opacity="0.8"/>
<ellipse cx="262" cy="255.5" rx="11.5" ry="10.5" fill="#6a4220" filter="url(#b1)" transform="rotate(35 262 255.5)"/>
<ellipse cx="262" cy="255.5" rx="9" ry="7.5" fill="#1a120c" filter="url(#b03)" transform="rotate(40 262 255.5)"/>
<path d="M256 252 Q255 256 257 259" stroke="#6a5040" stroke-width="1.2" fill="none"/>
<ellipse cx="324" cy="248.5" rx="15" ry="10.5" fill="#6a4220" filter="url(#b1)" transform="rotate(8 324 248.5)"/>
<ellipse cx="324.5" cy="248.5" rx="12.5" ry="8" fill="#1a120c" filter="url(#b03)" transform="rotate(8 324.5 248.5)"/>
<path d="M315.5 243 Q311.5 248 315 253.5" stroke="#d0b8a8" stroke-width="1.7" fill="none"/>
<ellipse cx="287.5" cy="307.5" rx="12.5" ry="8.5" fill="#120e0c" filter="url(#b03)"/>
<ellipse cx="287" cy="302.5" rx="5" ry="1.6" fill="#5a5a5a" filter="url(#b05)"/>
</g>
</defs>
<ellipse cx="316.5" cy="239.3" rx="113" ry="179.2" fill="#050505"/>
<g clip-path="url(#ell)"><use href="#dog"/></g>
<path d="M339 176.5 L339 190.5 L342.2 187.6 L349.5 187 Z" fill="#000" stroke="#fff" stroke-width="0.8" stroke-linejoin="miter"/>
<g transform="translate(353.7,193.6)"><path d="M0 -7.5 L4 -3.5 H2 V-2 H3.5 V-4 L7.5 0 L3.5 4 V2 H2 V3.5 H4 L0 7.5 L-4 3.5 H-2 V2 H-3.5 V4 L-7.5 0 L-3.5 -4 V-2 H-2 V-3.5 H-4 Z" fill="#000" stroke="#fff" stroke-width="0.9"/><path d="M-0.9 -4 V4 M0.9 -4 V4 M-4 -0.9 H4 M-4 0.9 H4" stroke="#fff" stroke-width="0.45" opacity="0.8"/></g>
</svg>
<!--PHOTO_END-->
<div id="vscroll" class="a"></div>
<div id="status" class="a"></div>
<div class="a" style="left:52px;top:477px;width:23px;height:17px;background:#474747"></div>
<div class="a" style="left:75px;top:477px;width:1px;height:17px;background:#303030"></div>
<div class="a" style="left:246px;top:477px;width:1px;height:17px;background:#303030"></div>
<div class="a" style="left:247px;top:478px;width:12px;height:16px;background:#474747"></div>
<div class="a" style="left:259px;top:477px;width:63px;height:17px;background:#363636"></div>
<div class="t" style="left:14px;top:480px;color:#eaeaea">96,5%</div>
<div class="t" style="left:93px;top:480px;color:#e6e6e6">624 пикс. x 468 пикс. (72 ppi)</div>
<svg class="a" style="left:57px;top:479px" width="14" height="14" viewBox="0 0 14 14"><circle cx="7" cy="7" r="6" fill="#bdbdbd"/><path d="M4 4 H8 L11 7 V10 H4 Z" fill="#eee" stroke="#555" stroke-width="1"/></svg>
<svg class="a" style="left:249px;top:481px" width="8" height="10" viewBox="0 0 8 10"><path d="M1 0 L7 5 L1 10 Z" fill="#e8e8e8"/></svg>

<!-- layers panel -->
<div id="panel" class="a"></div>
<div class="a" style="left:323px;top:319px;width:340px;height:14px;background:#353535;border-radius:3px 0 0 0"></div>
<div class="a" style="left:323px;top:327px;width:340px;height:2px;background:repeating-linear-gradient(90deg,#2e2e2e 0 2px,#3e3e3e 2px 4px);opacity:0.7"></div>
<div class="a" style="left:323px;top:333px;width:340px;height:17px;background:#3c3c3c"></div>
<div class="a" style="left:363px;top:333px;width:300px;height:1px;background:repeating-linear-gradient(90deg,#2c2c2c 0 2px,#444 2px 4px)"></div>
<div class="a" style="left:323px;top:333px;width:39px;height:17px;background:#535353"></div>
<div class="a" style="left:362px;top:333px;width:1px;height:17px;background:#2e2e2e"></div>
<div class="a" style="left:419px;top:333px;width:1px;height:17px;background:#2e2e2e"></div>
<div class="a" style="left:471px;top:333px;width:1px;height:17px;background:#2e2e2e"></div>
<div class="a" style="left:363px;top:349px;width:300px;height:1px;background:#2e2e2e"></div>
<div class="t" style="left:330px;top:336px;font-weight:bold;color:#eeeeee">Слои</div>
<div class="t" style="left:369px;top:336px;font-weight:bold;color:#aab0b8">Контуры</div>
<div class="t" style="left:427px;top:336px;font-weight:bold;color:#aab0b8">Каналы</div>
<svg class="a" style="left:634px;top:324px" width="10" height="7" viewBox="0 0 10 7"><path d="M4 0 L0 3.5 L4 7 Z M9 0 L5 3.5 L9 7 Z" fill="#d8d8d8"/></svg>
<svg class="a" style="left:651px;top:323px" width="8" height="8" viewBox="0 0 8 8"><path d="M0.5 0.5 L7.5 7.5 M7.5 0.5 L0.5 7.5" stroke="#e0e0e0" stroke-width="1.8"/></svg>
<svg class="a" style="left:645px;top:336px" width="15" height="10" viewBox="0 0 15 10"><path d="M0 4 H5 L2.5 7 Z" fill="#ddd"/><path d="M6 1.5 H15 M6 4.5 H15 M6 7.5 H15" stroke="#e4e4e4" stroke-width="1.2"/></svg>

<!-- row 1 -->
<div class="dd" style="left:328px;top:355px;width:94px;height:19px"></div>
<svg class="a" style="left:333px;top:359px" width="10" height="10" viewBox="0 0 10 10"><circle cx="6" cy="4" r="3" fill="none" stroke="#d0d0d0" stroke-width="1.3"/><path d="M4 6 L1 9" stroke="#d0d0d0" stroke-width="1.8"/></svg>
<div class="t" style="left:349px;top:358px;color:#ececec">Вид</div>
<svg class="a" style="left:411px;top:359px" width="6" height="9" viewBox="0 0 6 9"><path d="M3 0 L6 3.5 H0 Z M0 5.5 H6 L3 9 Z" fill="#e4e4e4"/></svg>
<!-- filter icons -->
<svg class="a" style="left:481px;top:357px" width="14" height="12" viewBox="0 0 14 12"><rect x="0" y="0" width="14" height="1" fill="#2a2a2a"/><rect x="0.75" y="1.25" width="12.5" height="10" fill="none" stroke="#c4c4c4" stroke-width="1.5"/><path d="M2 10 Q3.5 6 5.5 7 Q7 8 8 6.5 Q10 5 12 10 Z" fill="#b8b8b8"/><circle cx="10.3" cy="4.3" r="1.4" fill="#c4c4c4"/></svg>
<svg class="a" style="left:505px;top:358px" width="12" height="11" viewBox="0 0 12 11"><circle cx="6" cy="5.5" r="4.8" fill="#505050" stroke="#c2c2c2" stroke-width="1.3"/><path d="M9.4 2.1 A4.8 4.8 0 0 0 2.6 8.9 Z" fill="#bcbcbc"/></svg>
<svg class="a" style="left:529px;top:357px" width="12" height="11" viewBox="0 0 12 11"><path d="M0.5 0.5 H11.5 V3.5 H10.5 Q10 1.8 8 1.8 H7 V9.3 L8.6 9.8 V10.8 H3.4 V9.8 L5 9.3 V1.8 H4 Q2 1.8 1.5 3.5 H0.5 Z" fill="#c4c4c4"/><rect x="0.5" y="0" width="11" height="0.8" fill="#2e2e2e"/></svg>
<svg class="a" style="left:553px;top:357px" width="13" height="12" viewBox="0 0 13 12"><rect x="2" y="2" width="9" height="8" fill="none" stroke="#c8c8c8" stroke-width="1.2"/><g fill="#555" stroke="#c8c8c8"><rect x="0.5" y="0.5" width="3" height="3"/><rect x="9.5" y="0.5" width="3" height="3"/><rect x="0.5" y="8.5" width="3" height="3"/><rect x="9.5" y="8.5" width="3" height="3"/></g></svg>
<svg class="a" style="left:577px;top:357px" width="13" height="13" viewBox="0 0 13 13"><path d="M4.5 0.5 H10 L12.5 3 V11.5 H4.5 Z" fill="none" stroke="#cfcfcf"/><rect x="0" y="6" width="7" height="7" fill="#b8b8b8"/></svg>
<div class="a" style="left:650px;top:355px;width:10px;height:18px;background:#2e2e2e;border:1px solid #2a2a2a"></div>
<div class="a" style="left:651px;top:356px;width:8px;height:8px;background:linear-gradient(#9a9a9a,#777)"></div>

<div class="sep" style="top:377px;background:#3a3a3a"></div>
<div class="sep" style="top:378px;background:#5e5e5e"></div>

<!-- row 2 -->
<div class="dd" style="left:328px;top:383px;width:185px;height:19px"></div>
<div class="t" style="left:335px;top:387px;color:#ececec">Обычные</div>
<svg class="a" style="left:503px;top:388px" width="6" height="9" viewBox="0 0 6 9"><path d="M3 0 L6 3.5 H0 Z M0 5.5 H6 L3 9 Z" fill="#e4e4e4"/></svg>
<div class="t" style="left:521px;top:386px;color:#ececec">Непрозрачность:</div>
<div class="inp" style="left:605px;top:383px;width:36px;height:18px"></div>
<div class="t" style="left:610px;top:386px;color:#f0f0f0">100%</div>
<div class="ib" style="left:640px;top:383px;width:18px;height:18px"></div>
<svg class="a" style="left:645px;top:391px" width="7" height="4" viewBox="0 0 7 4"><path d="M0 0 H7 L3.5 4 Z" fill="#e8e8e8"/></svg>

<div class="sep" style="top:406px;background:#3a3a3a"></div>
<div class="sep" style="top:407px;background:#5e5e5e"></div>

<!-- row 3 -->
<div class="t" style="left:329px;top:415px;color:#ececec">Закрепить:</div>
<svg class="a" style="left:390px;top:414px" width="12" height="13" viewBox="0 0 12 13"><rect x="0" y="0" width="12" height="1" fill="#2a2a2a"/><rect x="0" y="1" width="12" height="12" fill="#c4c4c4"/><g fill="#555"><rect x="4.5" y="2.5" width="3" height="3"/><rect x="1.5" y="5.5" width="3" height="3"/><rect x="7.5" y="5.5" width="3" height="3"/><rect x="4.5" y="8.5" width="3" height="3"/></g></svg>
<svg class="a" style="left:409px;top:412px" width="18" height="15" viewBox="0 0 18 15"><path d="M16.5 1.5 L9 8.5" stroke="#c4c4c4" stroke-width="2.6" stroke-linecap="round"/><path d="M8.5 7.5 C6 7.5 5 10 3 12 C2 13 1 13.5 0.5 14 C5 14.5 10 13 10.5 9.5 Z" fill="#c4c4c4"/></svg>
<svg class="a" style="left:432px;top:412px" width="15" height="15" viewBox="0 0 15 15"><path d="M7.5 2 V13 M2 7.5 H13" stroke="#c4c4c4" stroke-width="1.4"/><path d="M7.5 0 L10.5 3.2 H4.5 Z M7.5 15 L10.5 11.8 H4.5 Z M0 7.5 L3.2 4.5 V10.5 Z M15 7.5 L11.8 4.5 V10.5 Z" fill="#c4c4c4"/><circle cx="7.5" cy="7.5" r="2.2" fill="none" stroke="#c4c4c4" stroke-width="1.2"/></svg>
<svg class="a" style="left:457px;top:414px" width="11" height="13" viewBox="0 0 11 13"><path d="M2.8 6.5 V4 A2.7 2.7 0 0 1 8.2 4 V6.5" fill="none" stroke="#b4b4b4" stroke-width="1.6"/><rect x="0.5" y="6" width="10" height="6.5" rx="0.5" fill="#b4b4b4"/><rect x="4.8" y="8" width="1.4" height="3" fill="#4a4a4a"/></svg>
<div class="t" style="left:559px;top:415px;color:#ececec">Заливка:</div>
<div class="inp" style="left:605px;top:411px;width:36px;height:18px"></div>
<div class="t" style="left:610px;top:414px;color:#f0f0f0">100%</div>
<div class="ib" style="left:640px;top:411px;width:18px;height:18px"></div>
<svg class="a" style="left:645px;top:419px" width="7" height="4" viewBox="0 0 7 4"><path d="M0 0 H7 L3.5 4 Z" fill="#e8e8e8"/></svg>

<!-- layers list -->
<div class="a" style="left:323px;top:435px;width:340px;height:1px;background:#2c2c2c"></div>
<div class="a" style="left:353px;top:436px;width:1px;height:137px;background:#3a3a3a"></div>
<div class="a" style="left:354px;top:436px;width:294px;height:67px;background:#5a6578"></div>
<div class="a" style="left:323px;top:503px;width:325px;height:1px;background:#3a3a3a"></div>
<div class="a" style="left:323px;top:572px;width:325px;height:1px;background:#3a3a3a"></div>
<div class="a" style="left:648px;top:436px;width:15px;height:137px;background:#3e3e3e"></div>
<svg class="a" style="left:331px;top:463px" width="14" height="11" viewBox="0 0 14 11"><path d="M0.8 5.5 Q7 -1.5 13.2 5.5 Q7 12.5 0.8 5.5 Z" fill="#c4c4c4"/><path d="M2.8 5.5 Q7 1.2 11.2 5.5 Q7 9.8 2.8 5.5 Z" fill="#535353"/><circle cx="7" cy="5.5" r="2.6" fill="#2e2e2e"/><circle cx="7.8" cy="4.6" r="0.9" fill="#d8d8d8"/></svg>
<svg class="a" style="left:331px;top:531px" width="14" height="11" viewBox="0 0 14 11"><path d="M0.8 5.5 Q7 -1.5 13.2 5.5 Q7 12.5 0.8 5.5 Z" fill="#c4c4c4"/><path d="M2.8 5.5 Q7 1.2 11.2 5.5 Q7 9.8 2.8 5.5 Z" fill="#535353"/><circle cx="7" cy="5.5" r="2.6" fill="#2e2e2e"/><circle cx="7.8" cy="4.6" r="0.9" fill="#d8d8d8"/></svg>
<svg class="a" style="left:386px;top:464px" width="8" height="10" viewBox="0 0 8 10"><path d="M7.5 1.5 H3.5 V6" stroke="#e4e4e4" stroke-width="1.3" fill="none"/><path d="M0.5 5.5 H6.5 L3.5 9.5 Z" fill="#e4e4e4"/></svg>
<!-- thumb 0 -->
<svg class="a" style="left:395px;top:437px" width="84" height="65" viewBox="395 437 84 65">
<defs><pattern id="ck4" x="398" y="440" width="8" height="8" patternUnits="userSpaceOnUse"><rect width="8" height="8" fill="#fff"/><rect width="4" height="4" x="4" fill="#cbcbcb"/><rect width="4" height="4" y="4" fill="#cbcbcb"/></pattern>
<pattern id="ck4b" x="358" y="508" width="8" height="8" patternUnits="userSpaceOnUse"><rect width="8" height="8" fill="#fff"/><rect width="4" height="4" x="4" fill="#cbcbcb"/><rect width="4" height="4" y="4" fill="#cbcbcb"/></pattern>
<clipPath id="tc0"><rect x="417" y="445" width="59" height="54"/></clipPath></defs>
<path d="M395.5 458 V437.5 H423 M451 437.5 H478.5 V458 M478.5 480 V501.5 H451 M423 501.5 H395.5 V480" stroke="#fff" stroke-width="1" fill="none"/>
<rect x="397.5" y="439.5" width="79" height="60" fill="url(#ck4)" stroke="#000" stroke-width="1"/>
<g clip-path="url(#tc0)"><g transform="translate(397.48,436.74) scale(0.1296,0.1305)"><use href="#dog"/></g></g>
</svg>
<!-- thumb 1 -->
<svg class="a" style="left:357px;top:507px" width="80" height="61" viewBox="357 507 80 61">
<rect x="357.5" y="507.5" width="79" height="60" fill="url(#ck4b)" stroke="#000" stroke-width="1"/>
<ellipse cx="398.5" cy="536" rx="14.6" ry="23.4" fill="#050505"/>
</svg>
<div class="t" style="left:487px;top:465px;color:#f0f0f0">Слой 0</div>
<div class="t" style="left:446px;top:533px;color:#f0f0f0;word-spacing:2px">Слой 1</div>
<div class="a" style="left:445px;top:542px;width:37px;height:1px;background:#f0f0f0"></div>

<!-- bottom bar -->
<div class="a" style="left:323px;top:573px;width:340px;height:1px;background:#3a3a3a"></div>
<div class="a" style="left:323px;top:593px;width:340px;height:1px;background:#3a3a3a"></div>
<div class="a" style="left:323px;top:594px;width:340px;height:7px;background:#505050"></div>
<div class="a" style="left:483px;top:596px;width:19px;height:3px;background:repeating-linear-gradient(90deg,#2a2a2a 0 1px,transparent 1px 2px)"></div>
<svg class="a" style="left:459px;top:579px" width="16" height="10" viewBox="0 0 16 10"><path d="M6 2 H4 A3 3 0 0 0 4 8 H6 M10 2 H12 A3 3 0 0 1 12 8 H10 M5 5 H11" stroke="#8c8c8c" stroke-width="1.6" fill="none"/></svg>
<div class="a" style="left:488px;top:575px;font-family:'Liberation Serif',serif;font-style:italic;font-size:15px;line-height:16px;color:#ababab">fx</div>
<svg class="a" style="left:502px;top:588px" width="5" height="3" viewBox="0 0 5 3"><path d="M0 0 H5 L2.5 3 Z" fill="#d0d0d0"/></svg>
<svg class="a" style="left:514px;top:579px" width="15" height="11" viewBox="0 0 15 11"><rect x="0" y="0" width="15" height="11" fill="#b8b8b8"/><rect x="0" y="0" width="15" height="1.5" fill="#2e2e2e"/><circle cx="7.5" cy="6" r="2.8" fill="#3a3a3a"/></svg>
<svg class="a" style="left:542px;top:579px" width="12" height="12" viewBox="0 0 12 12"><circle cx="6" cy="6" r="5.3" fill="#c4c4c4"/><circle cx="6" cy="6" r="3.6" fill="#7a7a7a"/><path d="M8.5 3.5 A3.6 3.6 0 0 1 3.5 8.5 Z" fill="#c4c4c4"/></svg>
<svg class="a" style="left:556px;top:588px" width="5" height="3" viewBox="0 0 5 3"><path d="M0 0 H5 L2.5 3 Z" fill="#d0d0d0"/></svg>
<svg class="a" style="left:568px;top:578px" width="14" height="12" viewBox="0 0 14 12"><path d="M0.5 1.5 H5 L6.5 3 H13.5 V11.5 H0.5 Z" fill="#b4b4b4"/><rect x="0.5" y="4" width="13" height="7.5" fill="#c8c8c8"/></svg>
<svg class="a" style="left:596px;top:579px" width="12" height="12" viewBox="0 0 12 12"><path d="M0 0 H11 V11 H4 L0 7 Z" fill="#c4c4c4"/><rect x="0" y="0" width="11" height="1.5" fill="#2e2e2e"/><path d="M0 7 H4 V11 Z" fill="#2e2e2e"/></svg>
<svg class="a" style="left:622px;top:578px" width="13" height="13" viewBox="0 0 13 13"><path d="M1 3 H12 M4.5 2.5 V1 H8.5 V2.5" stroke="#bdbdbd" stroke-width="1.3" fill="none"/><path d="M2 4.5 H11 L10.2 12.5 H2.8 Z" fill="#bdbdbd"/><path d="M4.6 6 V11 M6.5 6 V11 M8.4 6 V11" stroke="#535353" stroke-width="0.9"/></svg>
<svg class="a" style="left:651px;top:582px" width="11" height="10" viewBox="0 0 11 10"><g fill="#9a9a9a"><rect x="9" y="0" width="1" height="1"/><rect x="7" y="2" width="1" height="1"/><rect x="9" y="2" width="1" height="1"/><rect x="5" y="4" width="1" height="1"/><rect x="7" y="4" width="1" height="1"/><rect x="9" y="4" width="1" height="1"/><rect x="3" y="6" width="1" height="1"/><rect x="5" y="6" width="1" height="1"/><rect x="7" y="6" width="1" height="1"/><rect x="9" y="6" width="1" height="1"/><rect x="1" y="8" width="1" height="1"/><rect x="3" y="8" width="1" height="1"/><rect x="5" y="8" width="1" height="1"/><rect x="7" y="8" width="1" height="1"/><rect x="9" y="8" width="1" height="1"/></g></svg>
</body></html>
